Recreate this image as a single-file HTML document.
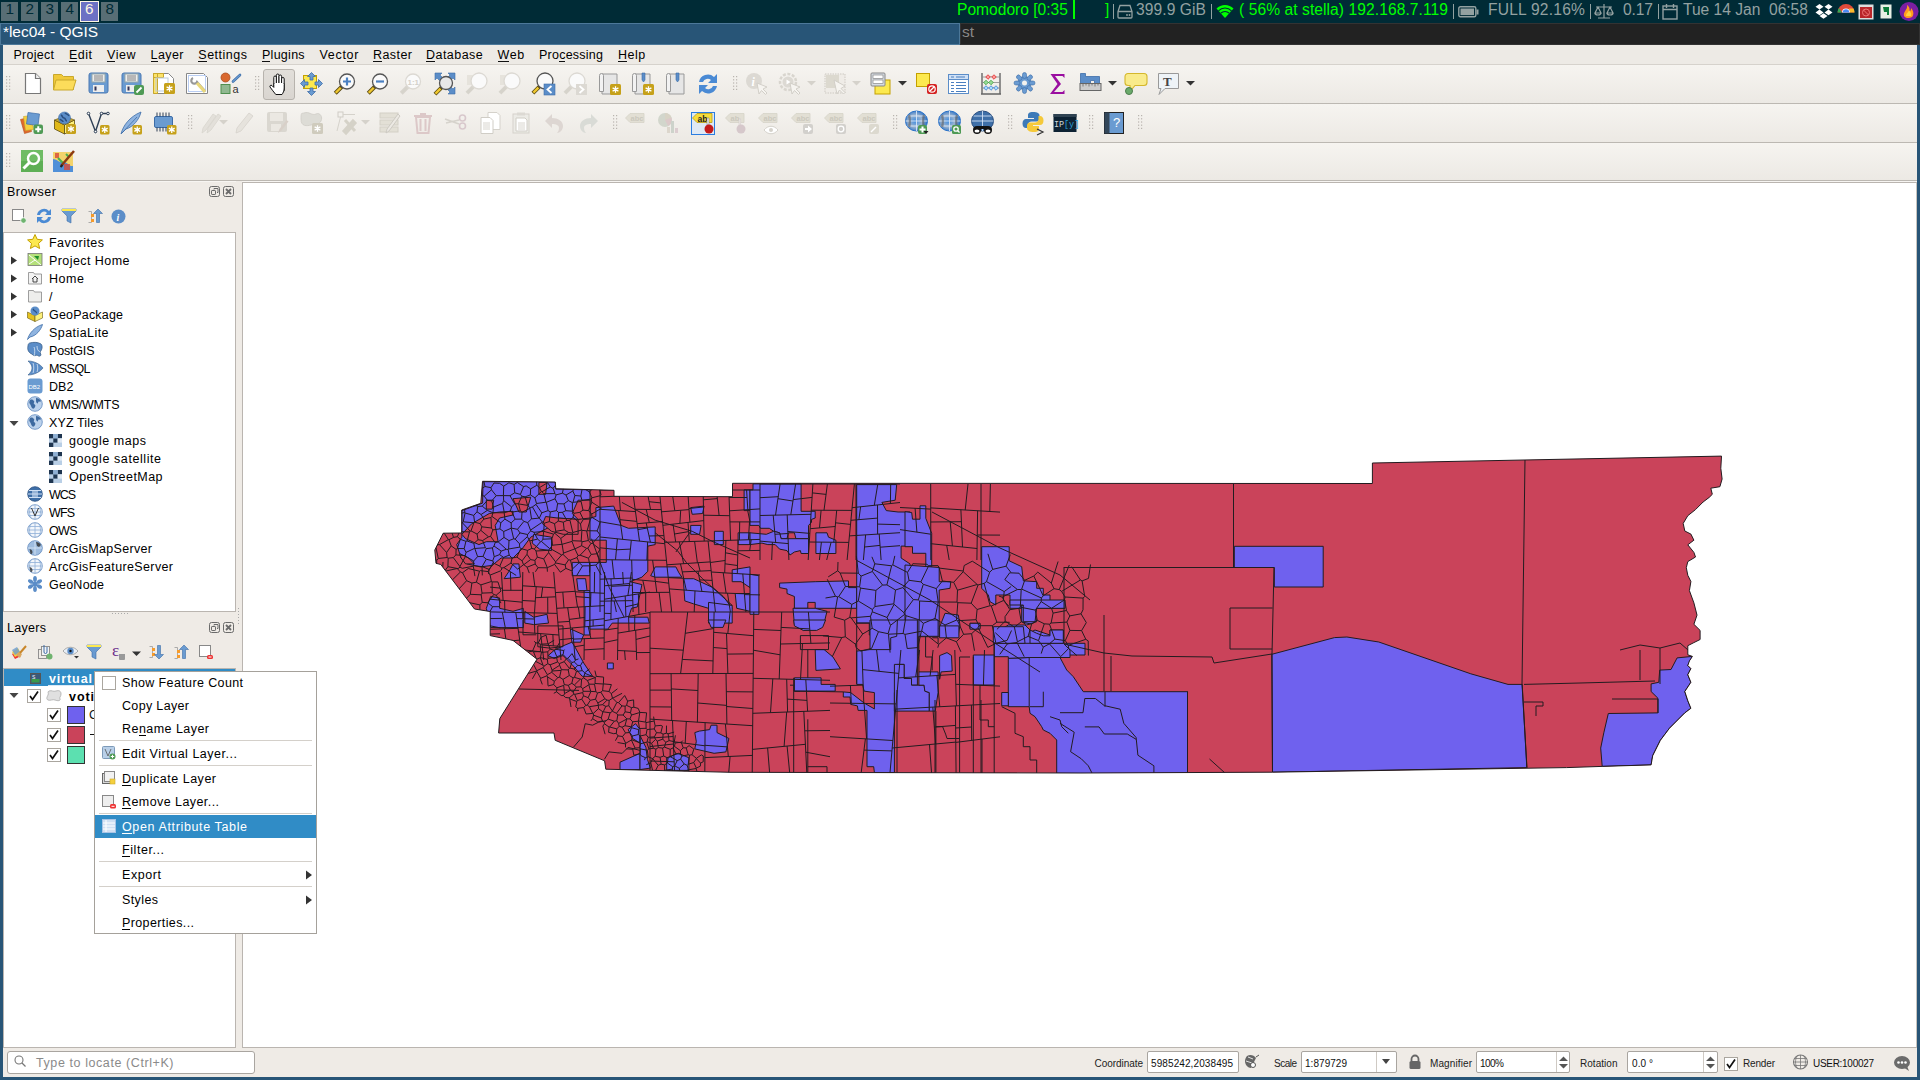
<!DOCTYPE html>
<html><head><meta charset="utf-8"><title>QGIS</title>
<style>
html,body{margin:0;padding:0;width:1920px;height:1080px;overflow:hidden;background:#efebe6}
body{position:relative;font-family:"Liberation Sans",sans-serif}
.r{position:absolute}
.t{position:absolute;white-space:pre;line-height:1}
.s{position:absolute;overflow:visible}
</style></head><body>
<div class="r" style="left:0px;top:45px;width:1920px;height:1035px;background:#285577;"></div>
<div class="r" style="left:3px;top:45px;width:1914px;height:1032px;background:#efebe6;"></div>
<div class="r" style="left:0px;top:0px;width:1920px;height:23px;background:#002b36;"></div>
<div class="r" style="left:1px;top:2px;width:17px;height:19px;background:#586e75;"></div>
<div class="t" style="left:5.60px;top:1.45px;font-size:15.30px;color:#002b36;">1</div>
<div class="r" style="left:21px;top:2px;width:17px;height:19px;background:#586e75;"></div>
<div class="t" style="left:25.60px;top:1.45px;font-size:15.30px;color:#002b36;">2</div>
<div class="r" style="left:41px;top:2px;width:17px;height:19px;background:#586e75;"></div>
<div class="t" style="left:45.60px;top:1.45px;font-size:15.30px;color:#002b36;">3</div>
<div class="r" style="left:61px;top:2px;width:17px;height:19px;background:#586e75;"></div>
<div class="t" style="left:65.60px;top:1.45px;font-size:15.30px;color:#002b36;">4</div>
<div class="r" style="left:101px;top:2px;width:17px;height:19px;background:#586e75;"></div>
<div class="t" style="left:105.60px;top:1.45px;font-size:15.30px;color:#002b36;">8</div>
<div class="r" style="left:80px;top:1px;width:19px;height:21px;background:#fdf6e3;"></div>
<div class="r" style="left:81px;top:2px;width:17px;height:19px;background:#6c71c4;"></div>
<div class="t" style="left:85.00px;top:1.45px;font-size:15.30px;color:#fdf6e3;">6</div>
<div class="t" style="left:957.00px;top:2.39px;font-size:15.60px;color:#00ff00;">Pomodoro [0:35</div>
<div class="r" style="left:1073px;top:0px;width:2px;height:19px;background:#00ff00;"></div>
<div class="t" style="left:1105.00px;top:2.39px;font-size:15.60px;color:#00ff00;">]</div>
<div class="r" style="left:1113px;top:4px;width:1px;height:15px;background:#93a1a1;"></div>
<div class="t" style="left:1136.00px;top:2.39px;font-size:15.60px;color:#93a1a1;letter-spacing:0.078px;">399.9 GiB</div>
<div class="r" style="left:1211px;top:4px;width:1px;height:15px;background:#93a1a1;"></div>
<div class="t" style="left:1239.00px;top:2.39px;font-size:15.60px;color:#00ff00;letter-spacing:0.070px;">( 56% at stella) 192.168.7.119</div>
<div class="r" style="left:1453px;top:4px;width:1px;height:15px;background:#93a1a1;"></div>
<div class="t" style="left:1488.00px;top:2.39px;font-size:15.60px;color:#93a1a1;letter-spacing:0.219px;">FULL 92.16%</div>
<div class="r" style="left:1590px;top:4px;width:1px;height:15px;background:#93a1a1;"></div>
<div class="t" style="left:1623.00px;top:2.39px;font-size:15.60px;color:#93a1a1;letter-spacing:-0.120px;">0.17</div>
<div class="r" style="left:1658px;top:4px;width:1px;height:15px;background:#93a1a1;"></div>
<div class="t" style="left:1683.00px;top:2.39px;font-size:15.60px;color:#93a1a1;letter-spacing:-0.011px;">Tue 14 Jan  06:58</div>
<svg class="s" style="left:1117px;top:4px" width="16" height="15" viewBox="0 0 16 15"><path d="M3 1.5h10l2 6v5.5a1 1 0 0 1-1 1H2a1 1 0 0 1-1-1V7.5z M1 7.5h14" fill="none" stroke="#93a1a1" stroke-width="1.3"/><circle cx="10" cy="11" r=".9" fill="#93a1a1"/><circle cx="12.5" cy="11" r=".9" fill="#93a1a1"/></svg>
<svg class="s" style="left:1216px;top:3px" width="18" height="16" viewBox="0 0 18 16"><path d="M9 15L0.5 5.5a12 12 0 0 1 17 0z" fill="#00ff00"/><path d="M2.5 7.8a9 9 0 0 1 13 0M4.8 10.2a6 6 0 0 1 8.4 0" stroke="#002b36" stroke-width="1.1" fill="none"/></svg>
<svg class="s" style="left:1458px;top:6px" width="21" height="12" viewBox="0 0 21 12"><rect x="0.8" y="0.8" width="17" height="10" rx="1.5" fill="none" stroke="#93a1a1" stroke-width="1.4"/><rect x="2.5" y="2.5" width="13.5" height="6.6" fill="#93a1a1"/><rect x="18.5" y="3.5" width="2" height="5" fill="#93a1a1"/></svg>
<svg class="s" style="left:1594px;top:3px" width="20" height="17" viewBox="0 0 20 17"><path d="M10 1v14M4 15h12M2 4h16M4 4l-3 6h6zM16 4l-3 6h6z M1 10a3 2 0 0 0 6 0M13 10a3 2 0 0 0 6 0" fill="none" stroke="#93a1a1" stroke-width="1.2"/></svg>
<svg class="s" style="left:1662px;top:3px" width="16" height="17" viewBox="0 0 16 17"><rect x="1" y="3" width="14" height="13" fill="none" stroke="#93a1a1" stroke-width="1.4"/><path d="M1 6.5h14M4.5 1v4M11.5 1v4" stroke="#93a1a1" stroke-width="1.4"/></svg>
<svg class="s" style="left:1815px;top:3px" width="18" height="17" viewBox="0 0 18 17"><path d="M4.5 1L0.5 3.8l4 2.8 4-2.8zM13.5 1l-4 2.8 4 2.8 4-2.8zM0.5 9.4l4 2.8 4-2.8-4-2.8zM17.5 9.4l-4 2.8-4-2.8 4-2.8zM4.5 13l4 2.8 4-2.8-4-2.8z" fill="#fff"/></svg>
<svg class="s" style="left:1837px;top:3px" width="18" height="10" viewBox="0 0 18 10"><path d="M0.5 9.5a8.5 8.5 0 0 1 17 0z" fill="#e04a3a"/><path d="M0.5 9.5a8.5 8.5 0 0 1 1.5-4.5l3 4.5z" fill="#34a853"/><path d="M17.5 9.5a8.5 8.5 0 0 0-1-4l-4.5 0 1 4z" fill="#f9bb2d"/><path d="M5 9.5a4 4 0 0 1 8 0z" fill="#fff"/><path d="M5.8 9.5a3.2 3.2 0 0 1 6.4 0z" fill="#4a8af4"/></svg>
<svg class="s" style="left:1858px;top:4px" width="16" height="16" viewBox="0 0 16 16"><rect x="0.5" y="0.5" width="15" height="15" fill="#ddd"/><rect x="2" y="3" width="12" height="11" fill="#b9262a"/><circle cx="8" cy="8.5" r="3.5" fill="none" stroke="#e77" stroke-width="1"/><path d="M5.5 6l5 5" stroke="#e77"/></svg>
<svg class="s" style="left:1880px;top:4px" width="12" height="15" viewBox="0 0 12 15"><rect x="0.5" y="0.5" width="11" height="14" fill="#e7efe4"/><path d="M3 3h6v8h-2v-3h-3z" fill="#0b7c3a"/></svg>
<svg class="s" style="left:1899px;top:1px" width="20" height="21" viewBox="0 0 20 21"><circle cx="10" cy="10.5" r="9.5" fill="#7a1fa2"/><path d="M5 15c-1-5 4-6 3-11 3 2 3 5 2 7 2-1 2-3 2-4 3 3 3 7 1 9-3 2-7 1-8-1z" fill="#ff9a1f"/><path d="M7 15c0-3 3-4 3-6 1 2 3 3 2 6z" fill="#ffd23a"/></svg>
<div class="r" style="left:0px;top:23px;width:960px;height:22px;background:#4c7899;"></div>
<div class="r" style="left:1px;top:24px;width:958px;height:20px;background:#285577;"></div>
<div class="r" style="left:960px;top:23px;width:960px;height:22px;background:#333333;"></div>
<div class="r" style="left:961px;top:24px;width:958px;height:20px;background:#222222;"></div>
<div class="t" style="left:3.00px;top:24.38px;font-size:15.50px;color:#ffffff;letter-spacing:-0.051px;">*lec04 - QGIS</div>
<div class="t" style="left:962.00px;top:24.38px;font-size:15.50px;color:#888888;letter-spacing:-0.056px;">st</div>
<div class="r" style="left:3px;top:45px;width:1914px;height:19px;background:#edeae5;"></div>
<div class="r" style="left:3px;top:64px;width:1914px;height:1px;background:#d6d2cc;"></div>
<div class="t" style="left:13.50px;top:49.42px;font-size:12.50px;color:#000;letter-spacing:0.266px;">Project</div>
<div class="r" style="left:33.8px;top:61px;width:2.8px;height:1px;background:#111;"></div>
<div class="t" style="left:69.00px;top:49.42px;font-size:12.50px;color:#000;letter-spacing:0.487px;">Edit</div>
<div class="r" style="left:69.0px;top:61px;width:8.3px;height:1px;background:#111;"></div>
<div class="t" style="left:107.00px;top:49.42px;font-size:12.50px;color:#000;letter-spacing:0.578px;">View</div>
<div class="r" style="left:107.0px;top:61px;width:8.3px;height:1px;background:#111;"></div>
<div class="t" style="left:150.50px;top:49.42px;font-size:12.50px;color:#000;letter-spacing:0.434px;">Layer</div>
<div class="r" style="left:150.5px;top:61px;width:7.0px;height:1px;background:#111;"></div>
<div class="t" style="left:198.30px;top:49.42px;font-size:12.50px;color:#000;letter-spacing:0.505px;">Settings</div>
<div class="r" style="left:198.3px;top:61px;width:8.3px;height:1px;background:#111;"></div>
<div class="t" style="left:262.00px;top:49.42px;font-size:12.50px;color:#000;letter-spacing:0.267px;">Plugins</div>
<div class="r" style="left:262.0px;top:61px;width:8.3px;height:1px;background:#111;"></div>
<div class="t" style="left:319.50px;top:49.42px;font-size:12.50px;color:#000;letter-spacing:0.693px;">Vector</div>
<div class="r" style="left:346.6px;top:61px;width:7.0px;height:1px;background:#111;"></div>
<div class="t" style="left:373.00px;top:49.42px;font-size:12.50px;color:#000;letter-spacing:0.437px;">Raster</div>
<div class="r" style="left:373.0px;top:61px;width:9.0px;height:1px;background:#111;"></div>
<div class="t" style="left:426.00px;top:49.42px;font-size:12.50px;color:#000;letter-spacing:0.456px;">Database</div>
<div class="r" style="left:426.0px;top:61px;width:9.0px;height:1px;background:#111;"></div>
<div class="t" style="left:497.60px;top:49.42px;font-size:12.50px;color:#000;letter-spacing:0.563px;">Web</div>
<div class="r" style="left:497.6px;top:61px;width:11.8px;height:1px;background:#111;"></div>
<div class="t" style="left:539.00px;top:49.42px;font-size:12.50px;color:#000;letter-spacing:0.241px;">Processing</div>
<div class="r" style="left:559.2px;top:61px;width:6.2px;height:1px;background:#111;"></div>
<div class="t" style="left:618.00px;top:49.42px;font-size:12.50px;color:#000;letter-spacing:0.531px;">Help</div>
<div class="r" style="left:618.0px;top:61px;width:9.0px;height:1px;background:#111;"></div>
<div class="r" style="left:3px;top:65px;width:1914px;height:38px;background:linear-gradient(#f6f4f0,#ece9e4);"></div>
<div class="r" style="left:3px;top:103px;width:1914px;height:1px;background:#bcb8b2;"></div>
<div class="r" style="left:3px;top:104px;width:1914px;height:38px;background:linear-gradient(#f6f4f0,#ece9e4);"></div>
<div class="r" style="left:3px;top:142px;width:1914px;height:1px;background:#bcb8b2;"></div>
<div class="r" style="left:3px;top:143px;width:1914px;height:37px;background:linear-gradient(#f6f4f0,#ece9e4);"></div>
<div class="r" style="left:3px;top:180px;width:1914px;height:1px;background:#bcb8b2;"></div>
<div class="r" style="left:3px;top:181px;width:1914px;height:1px;background:#f7f5f2;"></div>
<svg class="s" style="left:6px;top:76px" width="5" height="17" viewBox="0 0 5 17"><rect x="0" y="0.0" width="1.2" height="1.2" fill="#b8b4ae"/><rect x="3" y="0.0" width="1.2" height="1.2" fill="#b8b4ae"/><rect x="0" y="3.2" width="1.2" height="1.2" fill="#b8b4ae"/><rect x="3" y="3.2" width="1.2" height="1.2" fill="#b8b4ae"/><rect x="0" y="6.4" width="1.2" height="1.2" fill="#b8b4ae"/><rect x="3" y="6.4" width="1.2" height="1.2" fill="#b8b4ae"/><rect x="0" y="9.6" width="1.2" height="1.2" fill="#b8b4ae"/><rect x="3" y="9.6" width="1.2" height="1.2" fill="#b8b4ae"/><rect x="0" y="12.8" width="1.2" height="1.2" fill="#b8b4ae"/><rect x="3" y="12.8" width="1.2" height="1.2" fill="#b8b4ae"/></svg>
<svg class="s" style="left:255px;top:76px" width="5" height="17" viewBox="0 0 5 17"><rect x="0" y="0.0" width="1.2" height="1.2" fill="#b8b4ae"/><rect x="3" y="0.0" width="1.2" height="1.2" fill="#b8b4ae"/><rect x="0" y="3.2" width="1.2" height="1.2" fill="#b8b4ae"/><rect x="3" y="3.2" width="1.2" height="1.2" fill="#b8b4ae"/><rect x="0" y="6.4" width="1.2" height="1.2" fill="#b8b4ae"/><rect x="3" y="6.4" width="1.2" height="1.2" fill="#b8b4ae"/><rect x="0" y="9.6" width="1.2" height="1.2" fill="#b8b4ae"/><rect x="3" y="9.6" width="1.2" height="1.2" fill="#b8b4ae"/><rect x="0" y="12.8" width="1.2" height="1.2" fill="#b8b4ae"/><rect x="3" y="12.8" width="1.2" height="1.2" fill="#b8b4ae"/></svg>
<svg class="s" style="left:733px;top:76px" width="5" height="17" viewBox="0 0 5 17"><rect x="0" y="0.0" width="1.2" height="1.2" fill="#b8b4ae"/><rect x="3" y="0.0" width="1.2" height="1.2" fill="#b8b4ae"/><rect x="0" y="3.2" width="1.2" height="1.2" fill="#b8b4ae"/><rect x="3" y="3.2" width="1.2" height="1.2" fill="#b8b4ae"/><rect x="0" y="6.4" width="1.2" height="1.2" fill="#b8b4ae"/><rect x="3" y="6.4" width="1.2" height="1.2" fill="#b8b4ae"/><rect x="0" y="9.6" width="1.2" height="1.2" fill="#b8b4ae"/><rect x="3" y="9.6" width="1.2" height="1.2" fill="#b8b4ae"/><rect x="0" y="12.8" width="1.2" height="1.2" fill="#b8b4ae"/><rect x="3" y="12.8" width="1.2" height="1.2" fill="#b8b4ae"/></svg>
<svg class="s" style="left:6px;top:115px" width="5" height="17" viewBox="0 0 5 17"><rect x="0" y="0.0" width="1.2" height="1.2" fill="#b8b4ae"/><rect x="3" y="0.0" width="1.2" height="1.2" fill="#b8b4ae"/><rect x="0" y="3.2" width="1.2" height="1.2" fill="#b8b4ae"/><rect x="3" y="3.2" width="1.2" height="1.2" fill="#b8b4ae"/><rect x="0" y="6.4" width="1.2" height="1.2" fill="#b8b4ae"/><rect x="3" y="6.4" width="1.2" height="1.2" fill="#b8b4ae"/><rect x="0" y="9.6" width="1.2" height="1.2" fill="#b8b4ae"/><rect x="3" y="9.6" width="1.2" height="1.2" fill="#b8b4ae"/><rect x="0" y="12.8" width="1.2" height="1.2" fill="#b8b4ae"/><rect x="3" y="12.8" width="1.2" height="1.2" fill="#b8b4ae"/></svg>
<svg class="s" style="left:188px;top:115px" width="5" height="17" viewBox="0 0 5 17"><rect x="0" y="0.0" width="1.2" height="1.2" fill="#b8b4ae"/><rect x="3" y="0.0" width="1.2" height="1.2" fill="#b8b4ae"/><rect x="0" y="3.2" width="1.2" height="1.2" fill="#b8b4ae"/><rect x="3" y="3.2" width="1.2" height="1.2" fill="#b8b4ae"/><rect x="0" y="6.4" width="1.2" height="1.2" fill="#b8b4ae"/><rect x="3" y="6.4" width="1.2" height="1.2" fill="#b8b4ae"/><rect x="0" y="9.6" width="1.2" height="1.2" fill="#b8b4ae"/><rect x="3" y="9.6" width="1.2" height="1.2" fill="#b8b4ae"/><rect x="0" y="12.8" width="1.2" height="1.2" fill="#b8b4ae"/><rect x="3" y="12.8" width="1.2" height="1.2" fill="#b8b4ae"/></svg>
<svg class="s" style="left:612.5px;top:115px" width="5" height="17" viewBox="0 0 5 17"><rect x="0" y="0.0" width="1.2" height="1.2" fill="#b8b4ae"/><rect x="3" y="0.0" width="1.2" height="1.2" fill="#b8b4ae"/><rect x="0" y="3.2" width="1.2" height="1.2" fill="#b8b4ae"/><rect x="3" y="3.2" width="1.2" height="1.2" fill="#b8b4ae"/><rect x="0" y="6.4" width="1.2" height="1.2" fill="#b8b4ae"/><rect x="3" y="6.4" width="1.2" height="1.2" fill="#b8b4ae"/><rect x="0" y="9.6" width="1.2" height="1.2" fill="#b8b4ae"/><rect x="3" y="9.6" width="1.2" height="1.2" fill="#b8b4ae"/><rect x="0" y="12.8" width="1.2" height="1.2" fill="#b8b4ae"/><rect x="3" y="12.8" width="1.2" height="1.2" fill="#b8b4ae"/></svg>
<svg class="s" style="left:892.5px;top:115px" width="5" height="17" viewBox="0 0 5 17"><rect x="0" y="0.0" width="1.2" height="1.2" fill="#b8b4ae"/><rect x="3" y="0.0" width="1.2" height="1.2" fill="#b8b4ae"/><rect x="0" y="3.2" width="1.2" height="1.2" fill="#b8b4ae"/><rect x="3" y="3.2" width="1.2" height="1.2" fill="#b8b4ae"/><rect x="0" y="6.4" width="1.2" height="1.2" fill="#b8b4ae"/><rect x="3" y="6.4" width="1.2" height="1.2" fill="#b8b4ae"/><rect x="0" y="9.6" width="1.2" height="1.2" fill="#b8b4ae"/><rect x="3" y="9.6" width="1.2" height="1.2" fill="#b8b4ae"/><rect x="0" y="12.8" width="1.2" height="1.2" fill="#b8b4ae"/><rect x="3" y="12.8" width="1.2" height="1.2" fill="#b8b4ae"/></svg>
<svg class="s" style="left:1007.5px;top:115px" width="5" height="17" viewBox="0 0 5 17"><rect x="0" y="0.0" width="1.2" height="1.2" fill="#b8b4ae"/><rect x="3" y="0.0" width="1.2" height="1.2" fill="#b8b4ae"/><rect x="0" y="3.2" width="1.2" height="1.2" fill="#b8b4ae"/><rect x="3" y="3.2" width="1.2" height="1.2" fill="#b8b4ae"/><rect x="0" y="6.4" width="1.2" height="1.2" fill="#b8b4ae"/><rect x="3" y="6.4" width="1.2" height="1.2" fill="#b8b4ae"/><rect x="0" y="9.6" width="1.2" height="1.2" fill="#b8b4ae"/><rect x="3" y="9.6" width="1.2" height="1.2" fill="#b8b4ae"/><rect x="0" y="12.8" width="1.2" height="1.2" fill="#b8b4ae"/><rect x="3" y="12.8" width="1.2" height="1.2" fill="#b8b4ae"/></svg>
<svg class="s" style="left:1089px;top:115px" width="5" height="17" viewBox="0 0 5 17"><rect x="0" y="0.0" width="1.2" height="1.2" fill="#b8b4ae"/><rect x="3" y="0.0" width="1.2" height="1.2" fill="#b8b4ae"/><rect x="0" y="3.2" width="1.2" height="1.2" fill="#b8b4ae"/><rect x="3" y="3.2" width="1.2" height="1.2" fill="#b8b4ae"/><rect x="0" y="6.4" width="1.2" height="1.2" fill="#b8b4ae"/><rect x="3" y="6.4" width="1.2" height="1.2" fill="#b8b4ae"/><rect x="0" y="9.6" width="1.2" height="1.2" fill="#b8b4ae"/><rect x="3" y="9.6" width="1.2" height="1.2" fill="#b8b4ae"/><rect x="0" y="12.8" width="1.2" height="1.2" fill="#b8b4ae"/><rect x="3" y="12.8" width="1.2" height="1.2" fill="#b8b4ae"/></svg>
<svg class="s" style="left:1138px;top:115px" width="5" height="17" viewBox="0 0 5 17"><rect x="0" y="0.0" width="1.2" height="1.2" fill="#b8b4ae"/><rect x="3" y="0.0" width="1.2" height="1.2" fill="#b8b4ae"/><rect x="0" y="3.2" width="1.2" height="1.2" fill="#b8b4ae"/><rect x="3" y="3.2" width="1.2" height="1.2" fill="#b8b4ae"/><rect x="0" y="6.4" width="1.2" height="1.2" fill="#b8b4ae"/><rect x="3" y="6.4" width="1.2" height="1.2" fill="#b8b4ae"/><rect x="0" y="9.6" width="1.2" height="1.2" fill="#b8b4ae"/><rect x="3" y="9.6" width="1.2" height="1.2" fill="#b8b4ae"/><rect x="0" y="12.8" width="1.2" height="1.2" fill="#b8b4ae"/><rect x="3" y="12.8" width="1.2" height="1.2" fill="#b8b4ae"/></svg>
<svg class="s" style="left:6px;top:153px" width="5" height="17" viewBox="0 0 5 17"><rect x="0" y="0.0" width="1.2" height="1.2" fill="#b8b4ae"/><rect x="3" y="0.0" width="1.2" height="1.2" fill="#b8b4ae"/><rect x="0" y="3.2" width="1.2" height="1.2" fill="#b8b4ae"/><rect x="3" y="3.2" width="1.2" height="1.2" fill="#b8b4ae"/><rect x="0" y="6.4" width="1.2" height="1.2" fill="#b8b4ae"/><rect x="3" y="6.4" width="1.2" height="1.2" fill="#b8b4ae"/><rect x="0" y="9.6" width="1.2" height="1.2" fill="#b8b4ae"/><rect x="3" y="9.6" width="1.2" height="1.2" fill="#b8b4ae"/><rect x="0" y="12.8" width="1.2" height="1.2" fill="#b8b4ae"/><rect x="3" y="12.8" width="1.2" height="1.2" fill="#b8b4ae"/></svg>
<div class="r" style="left:263px;top:69px;width:32px;height:31px;border:1px solid #b7b3ad;border-radius:3px;background:linear-gradient(#e2dfda,#d9d5d0);box-sizing:border-box"></div>
<div class="r" style="left:691px;top:112px;width:24px;height:23px;border:1.3px solid #2a7de0;background:#dfe8f3;box-sizing:border-box"></div>
<svg class="s" style="left:23.5px;top:72.0px" width="24" height="24" viewBox="0 0 24 24"><path d="M1.5 1.5h10l5 5v15h-15z" fill="#fff" stroke="#777" stroke-width="1.2"/><path d="M11.5 1.5v5h5" fill="#eee" stroke="#777" stroke-width="1.2"/></svg>
<svg class="s" style="left:53.0px;top:72.0px" width="24" height="24" viewBox="0 0 24 24"><path d="M0.5 2.5h8l2 2h10v13h-20z" fill="#f0c93a" stroke="#c9a82c"/><path d="M3 8h20l-3 10H0.5z" fill="#fcdc5a" stroke="#c9a82c"/></svg>
<svg class="s" style="left:87.5px;top:72.0px" width="24" height="24" viewBox="0 0 24 24"><rect x="1" y="1" width="19" height="20" rx="2" fill="#6a9bd1" stroke="#4a79b3"/><rect x="4" y="2" width="13" height="8" fill="#eee" stroke="#9aa"/><path d="M6 4h9M6 6h9M6 8h9" stroke="#666" stroke-width=".8"/><rect x="5" y="13" width="11" height="7" fill="#eee"/><rect x="6.5" y="14.5" width="2" height="4" fill="#335"/></svg>
<svg class="s" style="left:121.0px;top:72.0px" width="24" height="24" viewBox="0 0 24 24"><rect x="1" y="1" width="19" height="20" rx="2" fill="#6a9bd1" stroke="#4a79b3"/><rect x="4" y="2" width="13" height="8" fill="#eee" stroke="#9aa"/><path d="M6 4h9M6 6h9M6 8h9" stroke="#666" stroke-width=".8"/><rect x="5" y="13" width="11" height="7" fill="#eee"/><rect x="6.5" y="14.5" width="2" height="4" fill="#335"/><rect x="13" y="13" width="10" height="10" rx="2" fill="#4f9a55"/><path transform="rotate(0)" d="M18.0 15.0v0M15.0 18.0h0" stroke="#fff" stroke-width="2"/><path d="M15.5 20.5l5-5" stroke="#fff" stroke-width="1.8"/></svg>
<svg class="s" style="left:152.0px;top:72.0px" width="24" height="24" viewBox="0 0 24 24"><path d="M1.5 1.5h15l5 5v15h-20z" fill="#fff" stroke="#888"/><path d="M1.5 1.5h4v20h-4zM1.5 1.5h10v4h-10z" fill="#fce36a" stroke="#c9a82c"/><rect x="4" y="6" width="12" height="13" fill="none" stroke="#bcd" /><rect x="12" y="11" width="11" height="11" rx="1.5" fill="#c6a11a"/><g stroke="#fff" stroke-width="1.3" transform="translate(17.5 16.5)"><path d="M0 -3.3V3.3M-2.9 -1.65L2.9 1.65M-2.9 1.65L2.9 -1.65"/></g></svg>
<svg class="s" style="left:185.0px;top:72.0px" width="24" height="24" viewBox="0 0 24 24"><path d="M1.5 1.5h17l4 4v16h-21z" fill="#fff" stroke="#888"/><rect x="3.5" y="3.5" width="17" height="16" fill="none" stroke="#b9cdf2"/><path d="M8 6a3 3 0 1 0 4 4l8 9" fill="none" stroke="#999" stroke-width="2.2"/><path d="M12 11l8 9" stroke="#e9d77a" stroke-width="3.2"/></svg>
<svg class="s" style="left:218.5px;top:72.0px" width="24" height="24" viewBox="0 0 24 24"><circle cx="6.5" cy="5.5" r="4.5" fill="#d9682e" stroke="#a94d1f" stroke-width=".8"/><path d="M14 9.5L21 3" stroke="#3d6da8" stroke-width="2.6" stroke-linecap="round"/><path d="M14 9.5L21 3" stroke="#6a9bd1" stroke-width="1.2" stroke-linecap="round"/><rect x="2" y="12.5" width="9" height="9" fill="#90b890" stroke="#4f8f4f"/><text x="13.5" y="21" font-family="Liberation Sans" font-size="11" fill="#333">a</text></svg>
<svg class="s" style="left:267.0px;top:72.0px" width="24" height="24" viewBox="0 0 24 24"><rect x="6.8" y="4" width="2.6" height="14" rx="1.3" fill="#fff" stroke="#111" stroke-width="1"/><rect x="9.4" y="2" width="2.6" height="14" rx="1.3" fill="#fff" stroke="#111" stroke-width="1"/><rect x="12" y="3" width="2.6" height="14" rx="1.3" fill="#fff" stroke="#111" stroke-width="1"/><rect x="14.6" y="5.5" width="2.6" height="14" rx="1.3" fill="#fff" stroke="#111" stroke-width="1"/><path d="M6.8 11.5H17.2V16C17.2 19 16 21 15 22.5H8.8C7.2 20.2 4.5 17.5 3 15C2.4 13.8 3.8 12.6 5 13.6L6.8 15.4Z" fill="#fff" stroke="#111" stroke-width="1"/><path d="M7.5 11.8H16.5" stroke="#fff" stroke-width="1.6"/></svg>
<svg class="s" style="left:300.0px;top:72.0px" width="24" height="24" viewBox="0 0 24 24"><rect x="3.5" y="3.5" width="13" height="13" fill="#fce94f" stroke="#c4a000"/><path d="M11.5 0.5l4 4h-2.5v3.5h-3V4.5H7.5zM11.5 23.5l4-4h-2.5V16h-3v3.5H7.5zM0.5 11.5l4 4V13H8v-3H4.5V7.5zM22.5 11.5l-4 4V13H15v-3h3.5V7.5z" fill="#6a9bd1" stroke="#3d6da8" stroke-width=".8"/></svg>
<svg class="s" style="left:333.0px;top:72.0px" width="24" height="24" viewBox="0 0 24 24"><path d="M8.75 14.75 L2.25 21.25" stroke="#5a4a10" stroke-width="4" stroke-linecap="butt"/><path d="M7.75 15.75 L2.75 20.75" stroke="#f0c830" stroke-width="2.4" stroke-linecap="butt"/><path d="M14 9.5 L14 9.5" stroke="#444" stroke-width="4.2" stroke-linecap="round" opacity=".0"/><circle cx="14" cy="9.5" r="7.5" fill="#fafafa" stroke="#555" stroke-width="1.3"/><path d="M14 5.5v8M10 9.5h8" stroke="#4a80c2" stroke-width="2.2"/></svg>
<svg class="s" style="left:366.0px;top:72.0px" width="24" height="24" viewBox="0 0 24 24"><path d="M8.75 14.75 L2.25 21.25" stroke="#5a4a10" stroke-width="4" stroke-linecap="butt"/><path d="M7.75 15.75 L2.75 20.75" stroke="#f0c830" stroke-width="2.4" stroke-linecap="butt"/><path d="M14 9.5 L14 9.5" stroke="#444" stroke-width="4.2" stroke-linecap="round" opacity=".0"/><circle cx="14" cy="9.5" r="7.5" fill="#fafafa" stroke="#555" stroke-width="1.3"/><path d="M10 9.5h8" stroke="#4a80c2" stroke-width="2.2"/></svg>
<svg class="s" style="left:399.0px;top:72.0px" width="24" height="24" viewBox="0 0 24 24"><path d="M8.75 14.75 L2.25 21.25" stroke="#d8d5ce" stroke-width="4" stroke-linecap="butt"/><path d="M7.75 15.75 L2.75 20.75" stroke="#d6d3cb" stroke-width="2.4" stroke-linecap="butt"/><path d="M14 9.5 L14 9.5" stroke="#d0cdc6" stroke-width="4.2" stroke-linecap="round" opacity=".0"/><circle cx="14" cy="9.5" r="7.5" fill="#fafafa" stroke="#dcd9d3" stroke-width="1.3"/><text x="8.5" y="13" font-family="Liberation Sans" font-weight="bold" font-size="8" fill="#d3d0c9">1:1</text></svg>
<svg class="s" style="left:433.0px;top:72.0px" width="24" height="24" viewBox="0 0 24 24"><path d="M2 1h7l-2 2 3 3-3 3-3-3-2 2zM22 1h-7l2 2-3 3 3 3 3-3 2 2zM22 22h-7l2-2-3-3 3-3 3 3 2-2z" fill="#5b8dc8" stroke="#3d6da8" stroke-width=".6"/><path d="M8.45 15.55 L1.9499999999999993 22.05" stroke="#5a4a10" stroke-width="4" stroke-linecap="butt"/><path d="M7.449999999999999 16.55 L2.4499999999999993 21.55" stroke="#f0c830" stroke-width="2.4" stroke-linecap="butt"/><path d="M13 11 L13 11" stroke="#444" stroke-width="4.2" stroke-linecap="round" opacity=".0"/><circle cx="13" cy="11" r="6.5" fill="#e8e8e8" stroke="#555" stroke-width="1.3"/></svg>
<svg class="s" style="left:465.0px;top:72.0px" width="24" height="24" viewBox="0 0 24 24"><rect x="2" y="3" width="9" height="10" fill="#e6e3dc"/><path d="M8.4 14.6 L1.9000000000000004 21.1" stroke="#d8d5ce" stroke-width="4" stroke-linecap="butt"/><path d="M7.4 15.6 L2.4000000000000004 20.6" stroke="#d6d3cb" stroke-width="2.4" stroke-linecap="butt"/><path d="M14 9 L14 9" stroke="#d0cdc6" stroke-width="4.2" stroke-linecap="round" opacity=".0"/><circle cx="14" cy="9" r="8" fill="#fafafa" stroke="#dcd9d3" stroke-width="1.3"/></svg>
<svg class="s" style="left:498.0px;top:72.0px" width="24" height="24" viewBox="0 0 24 24"><rect x="2" y="3" width="9" height="10" fill="#e6e3dc"/><path d="M8.4 14.6 L1.9000000000000004 21.1" stroke="#d8d5ce" stroke-width="4" stroke-linecap="butt"/><path d="M7.4 15.6 L2.4000000000000004 20.6" stroke="#d6d3cb" stroke-width="2.4" stroke-linecap="butt"/><path d="M14 9 L14 9" stroke="#d0cdc6" stroke-width="4.2" stroke-linecap="round" opacity=".0"/><circle cx="14" cy="9" r="8" fill="#fafafa" stroke="#dcd9d3" stroke-width="1.3"/></svg>
<svg class="s" style="left:532.0px;top:72.0px" width="24" height="24" viewBox="0 0 24 24"><path d="M7.4 14.6 L0.9000000000000004 21.1" stroke="#5a4a10" stroke-width="4" stroke-linecap="butt"/><path d="M6.4 15.6 L1.4000000000000004 20.6" stroke="#f0c830" stroke-width="2.4" stroke-linecap="butt"/><path d="M13 9 L13 9" stroke="#444" stroke-width="4.2" stroke-linecap="round" opacity=".0"/><circle cx="13" cy="9" r="8" fill="#fafafa" stroke="#555" stroke-width="1.3"/><rect x="12" y="12" width="11" height="11" fill="#5b8dc8" stroke="#3d6da8" stroke-width=".6"/><path d="M19.5 14l-4 3.5 4 3.5" fill="none" stroke="#fff" stroke-width="1.8"/></svg>
<svg class="s" style="left:564.0px;top:72.0px" width="24" height="24" viewBox="0 0 24 24"><path d="M7.4 14.6 L0.9000000000000004 21.1" stroke="#d8d5ce" stroke-width="4" stroke-linecap="butt"/><path d="M6.4 15.6 L1.4000000000000004 20.6" stroke="#d6d3cb" stroke-width="2.4" stroke-linecap="butt"/><path d="M13 9 L13 9" stroke="#d0cdc6" stroke-width="4.2" stroke-linecap="round" opacity=".0"/><circle cx="13" cy="9" r="8" fill="#fafafa" stroke="#dcd9d3" stroke-width="1.3"/><rect x="12" y="12" width="11" height="11" fill="#dcd9d3"/><path d="M15.5 14l4 3.5-4 3.5" fill="none" stroke="#fff" stroke-width="1.8"/></svg>
<svg class="s" style="left:598.0px;top:72.0px" width="24" height="24" viewBox="0 0 24 24"><path d="M4 2h15v20H4z" fill="#e6e6e6" stroke="#999" stroke-width="1"/><path d="M1.5 3.5a2 2 0 0 1 4 0v16h-4z" fill="#f2f2f2" stroke="#999" stroke-width="1"/><rect x="12" y="12" width="11" height="11" rx="1.5" fill="#c6a11a"/><g stroke="#fff" stroke-width="1.3" transform="translate(17.5 17.5)"><path d="M0 -3.3V3.3M-2.9 -1.65L2.9 1.65M-2.9 1.65L2.9 -1.65"/></g></svg>
<svg class="s" style="left:631.0px;top:72.0px" width="24" height="24" viewBox="0 0 24 24"><path d="M4 2h15v20H4z" fill="#e6e6e6" stroke="#999" stroke-width="1"/><path d="M1.5 3.5a2 2 0 0 1 4 0v16h-4z" fill="#f2f2f2" stroke="#999" stroke-width="1"/><path d="M11 1h3v7l-1.5 2-1.5-2z" fill="#5b8dc8" stroke="#3d6da8" stroke-width=".6"/><rect x="12" y="12" width="11" height="11" rx="1.5" fill="#c6a11a"/><g stroke="#fff" stroke-width="1.3" transform="translate(17.5 17.5)"><path d="M0 -3.3V3.3M-2.9 -1.65L2.9 1.65M-2.9 1.65L2.9 -1.65"/></g></svg>
<svg class="s" style="left:665.0px;top:72.0px" width="24" height="24" viewBox="0 0 24 24"><path d="M4 2h15v20H4z" fill="#e6e6e6" stroke="#999" stroke-width="1"/><path d="M1.5 3.5a2 2 0 0 1 4 0v16h-4z" fill="#f2f2f2" stroke="#999" stroke-width="1"/><path d="M11 1h3v7l-1.5 2-1.5-2z" fill="#5b8dc8" stroke="#3d6da8" stroke-width=".6"/></svg>
<svg class="s" style="left:696.0px;top:72.0px" width="24" height="24" viewBox="0 0 24 24"><path d="M3 10a9 9 0 0 1 15-5l3-3v9h-9l3-3a5 5 0 0 0-8 2z" fill="#4a8ad4"/><path d="M21 14a9 9 0 0 1-15 5l-3 3v-9h9l-3 3a5 5 0 0 0 8-2z" fill="#4a8ad4"/></svg>
<svg class="s" style="left:745.0px;top:72.0px" width="24" height="24" viewBox="0 0 24 24"><circle cx="9" cy="9" r="8" fill="#dcd9d3"/><text x="6.5" y="14" font-family="Liberation Serif" font-style="italic" font-weight="bold" font-size="12" fill="#fff">i</text><path d="M12 11l2 11 2.5-3.5 4 4 1.5-1.5-4-4L22 15z" fill="#f6f4f0" stroke="#d2cfc8"/></svg>
<svg class="s" style="left:778.0px;top:72.0px" width="24" height="24" viewBox="0 0 24 24"><circle cx="10" cy="10" r="8" fill="none" stroke="#d8d5ce" stroke-width="2.5" stroke-dasharray="3 1.6"/><circle cx="10" cy="10" r="5.5" fill="#dcd9d3"/><path d="M8.5 7.5v5l4-2.5z" fill="#fff"/><path d="M12 11l2 11 2.5-3.5 4 4 1.5-1.5-4-4L22 15z" fill="#f6f4f0" stroke="#d2cfc8"/></svg>
<svg class="s" style="left:806.0px;top:72.0px" width="24" height="24" viewBox="0 0 24 24"><path d="M1 9h9l-4.5 4.5z" fill="#d5d2cb"/></svg>
<svg class="s" style="left:824.0px;top:72.0px" width="24" height="24" viewBox="0 0 24 24"><rect x="1" y="2" width="20" height="19" fill="#efece7" stroke="#cdc9c2" stroke-dasharray="1.5 1"/><rect x="2" y="3" width="13" height="13" fill="#dcd9cf"/><path d="M10 8l3 14 2.5-4 4 4 1.5-1.5-4-4L21 14z" fill="#f6f4f0" stroke="#d2cfc8"/></svg>
<svg class="s" style="left:851.0px;top:72.0px" width="24" height="24" viewBox="0 0 24 24"><path d="M1 9h9l-4.5 4.5z" fill="#d5d2cb"/></svg>
<svg class="s" style="left:870.0px;top:72.0px" width="24" height="24" viewBox="0 0 24 24"><rect x="5" y="8" width="15" height="14" fill="#fce94f" stroke="#c4a000"/><rect x="1" y="1" width="14" height="13" rx="1" fill="#d7dde4" stroke="#888"/><rect x="3" y="3" width="10" height="3.5" fill="#fff" stroke="#777" stroke-width=".6"/><rect x="3" y="8" width="10" height="3.5" fill="#fff" stroke="#777" stroke-width=".6"/></svg>
<svg class="s" style="left:896.5px;top:72.0px" width="24" height="24" viewBox="0 0 24 24"><path d="M1 9h9l-4.5 4.5z" fill="#333"/></svg>
<svg class="s" style="left:914.5px;top:72.0px" width="24" height="24" viewBox="0 0 24 24"><rect x="1.5" y="1.5" width="13" height="13" fill="#fce94f" stroke="#c4a000"/><rect x="12" y="12" width="10" height="10" rx="2" fill="#d42020"/><circle cx="17" cy="17" r="3.2" fill="none" stroke="#fff" stroke-width="1.2"/><path d="M15 19l4-4" stroke="#fff" stroke-width="1.2"/></svg>
<svg class="s" style="left:947.0px;top:72.0px" width="24" height="24" viewBox="0 0 24 24"><rect x="1.5" y="2.5" width="20" height="19" fill="#fff" stroke="#5b8dc8"/><rect x="1.5" y="2.5" width="20" height="5" fill="#cfe0f5" stroke="#5b8dc8"/><path d="M4 5h3M9 5h9M4 10.5h3M9 10.5h10M4 13.5h3M9 13.5h10M4 16.5h3M9 16.5h10M4 19.5h3M9 19.5h10" stroke="#4a7fc0" stroke-width="1.2"/></svg>
<svg class="s" style="left:980.0px;top:72.0px" width="24" height="24" viewBox="0 0 24 24"><path d="M2 1v21M20 1v21M1 22h20" stroke="#666" stroke-width="1.4" fill="none"/><path d="M2 5h18M2 10.5h18M2 16h18" stroke="#888" stroke-width=".8"/><rect x="6.4" y="3.4" width="3.2" height="3.2" transform="rotate(45 8 5)" fill="#f99" stroke="#d22" stroke-width=".7"/><rect x="12.4" y="3.4" width="3.2" height="3.2" transform="rotate(45 14 5)" fill="#f99" stroke="#d22" stroke-width=".7"/><rect x="4.4" y="8.9" width="3.2" height="3.2" transform="rotate(45 6 10.5)" fill="#9d9" stroke="#393" stroke-width=".7"/><rect x="9.4" y="8.9" width="3.2" height="3.2" transform="rotate(45 11 10.5)" fill="#9d9" stroke="#393" stroke-width=".7"/><rect x="4.4" y="14.4" width="3.2" height="3.2" transform="rotate(45 6 16)" fill="#adf" stroke="#37c" stroke-width=".7"/><rect x="9.4" y="14.4" width="3.2" height="3.2" transform="rotate(45 11 16)" fill="#adf" stroke="#37c" stroke-width=".7"/><rect x="14.4" y="14.4" width="3.2" height="3.2" transform="rotate(45 16 16)" fill="#adf" stroke="#37c" stroke-width=".7"/></svg>
<svg class="s" style="left:1013.0px;top:72.0px" width="24" height="24" viewBox="0 0 24 24"><g transform="translate(11.5 11)"><circle r="6.5" fill="#6a9bd1" stroke="#3d6da8" stroke-width=".8"/><rect x="-2" y="-10.5" width="4" height="6" rx="2" fill="#6a9bd1" stroke="#3d6da8" stroke-width=".6" transform="rotate(0)"/><rect x="-2" y="-10.5" width="4" height="6" rx="2" fill="#6a9bd1" stroke="#3d6da8" stroke-width=".6" transform="rotate(45)"/><rect x="-2" y="-10.5" width="4" height="6" rx="2" fill="#6a9bd1" stroke="#3d6da8" stroke-width=".6" transform="rotate(90)"/><rect x="-2" y="-10.5" width="4" height="6" rx="2" fill="#6a9bd1" stroke="#3d6da8" stroke-width=".6" transform="rotate(135)"/><rect x="-2" y="-10.5" width="4" height="6" rx="2" fill="#6a9bd1" stroke="#3d6da8" stroke-width=".6" transform="rotate(180)"/><rect x="-2" y="-10.5" width="4" height="6" rx="2" fill="#6a9bd1" stroke="#3d6da8" stroke-width=".6" transform="rotate(225)"/><rect x="-2" y="-10.5" width="4" height="6" rx="2" fill="#6a9bd1" stroke="#3d6da8" stroke-width=".6" transform="rotate(270)"/><rect x="-2" y="-10.5" width="4" height="6" rx="2" fill="#6a9bd1" stroke="#3d6da8" stroke-width=".6" transform="rotate(315)"/><circle r="2.5" fill="#f4f2ee"/></g></svg>
<svg class="s" style="left:1046.5px;top:72.0px" width="24" height="24" viewBox="0 0 24 24"><path d="M3.5 2h14v4l-2-2H8l6 8-7 8h8.5l2-2v4H3l7.5-10z" fill="#9a0ea0"/></svg>
<svg class="s" style="left:1079.0px;top:72.0px" width="24" height="24" viewBox="0 0 24 24"><path d="M1.5 1.5h5v3h14v7h-5v-3h-4v3h-10z" fill="#5b8dc8" stroke="#3d6da8" stroke-width=".8"/><rect x="1" y="11.5" width="21" height="7" fill="#ccc" stroke="#666"/><path d="M4 11.5v3M7 11.5v2M10 11.5v3M13 11.5v2M16 11.5v3M19 11.5v2" stroke="#666" stroke-width=".8"/></svg>
<svg class="s" style="left:1106.5px;top:72.0px" width="24" height="24" viewBox="0 0 24 24"><path d="M1 9h9l-4.5 4.5z" fill="#333"/></svg>
<svg class="s" style="left:1123.5px;top:72.0px" width="24" height="24" viewBox="0 0 24 24"><path d="M4 1.5h16a3 3 0 0 1 3 3v6a3 3 0 0 1-3 3H11l-5 6v-6H4a3 3 0 0 1-3-3v-6a3 3 0 0 1 3-3z" fill="#f9eb8b" stroke="#d4b72c" stroke-width="1.1"/><circle cx="5" cy="19" r="3.5" fill="#6aaa6a" stroke="#4c7d4c"/></svg>
<svg class="s" style="left:1157.0px;top:72.0px" width="24" height="24" viewBox="0 0 24 24"><path d="M1.5 1.5h20v15H8l-6 6 2-6H1.5z" fill="#eef3f7" stroke="#999"/><text x="6" y="14" font-family="Liberation Serif" font-weight="bold" font-size="13" fill="#444">T</text></svg>
<svg class="s" style="left:1184.5px;top:72.0px" width="24" height="24" viewBox="0 0 24 24"><path d="M1 9h9l-4.5 4.5z" fill="#333"/></svg>
<svg class="s" style="left:20.0px;top:111.0px" width="24" height="24" viewBox="0 0 24 24"><path d="M0.5 8.5l8-2 3 14-7 2z" fill="#e06a2b" stroke="#b24d18" stroke-width=".6"/><path d="M3.5 5.5l8-1 2 14-8 1z" fill="#f5d03e" stroke="#c9a82c" stroke-width=".6"/><path d="M8 1.5l11.5 1.5-1.5 11.5-11.5-1.5z" fill="#6a9bd1" stroke="#3d6da8" stroke-width=".7"/><rect x="13.5" y="13.5" width="9.5" height="9.5" rx="2" fill="#4f9a55"/><path d="M18.25 15.25v6M15.25 18.25h6" stroke="#fff" stroke-width="2"/></svg>
<svg class="s" style="left:53.0px;top:111.0px" width="24" height="24" viewBox="0 0 24 24"><path d="M1.5 9l10 5v9l-10-5z" fill="#e0b818" stroke="#5a4a10" stroke-width=".8"/><path d="M11.5 14l10-5v9l-10 5z" fill="#fdf07a" stroke="#5a4a10" stroke-width=".8"/><path d="M1.5 9l10-4 10 4-10 5z" fill="#c9a82c" stroke="#5a4a10" stroke-width=".6"/><circle cx="11.5" cy="7" r="6" fill="#5b8dc8" stroke="#3d6da8" stroke-width=".6"/><path d="M8 4c2 1 1 3 3 3s1 3 3 3M7 8c1 2 3 1 3 3M12 2c1 1 3 1 4 3" stroke="#2a4f80" stroke-width="1.6" fill="none"/><rect x="13" y="13" width="10" height="10" rx="1.5" fill="#c6a11a"/><g stroke="#fff" stroke-width="1.3" transform="translate(18.0 18.0)"><path d="M0 -3.3V3.3M-2.9 -1.65L2.9 1.65M-2.9 1.65L2.9 -1.65"/></g></svg>
<svg class="s" style="left:86.0px;top:111.0px" width="24" height="24" viewBox="0 0 24 24"><path d="M2.5 2.5L9.5 20.5 15.5 2.5h7" fill="none" stroke="#2e3f55" stroke-width="1.4"/><circle cx="2.5" cy="2.5" r="1.3" fill="#fff" stroke="#2e3f55"/><circle cx="9.5" cy="20.5" r="1.3" fill="#fff" stroke="#2e3f55"/><circle cx="15.5" cy="2.5" r="1.3" fill="#fff" stroke="#2e3f55"/><circle cx="22" cy="2.5" r="1.3" fill="#fff" stroke="#2e3f55"/><rect x="14" y="14" width="9.5" height="9.5" rx="1.5" fill="#c6a11a"/><g stroke="#fff" stroke-width="1.3" transform="translate(18.75 18.75)"><path d="M0 -3.3V3.3M-2.9 -1.65L2.9 1.65M-2.9 1.65L2.9 -1.65"/></g></svg>
<svg class="s" style="left:119.0px;top:111.0px" width="24" height="24" viewBox="0 0 24 24"><path d="M2 23C4 15 10 6 22 1c-2 8-8 15-15 17z" fill="#8fb4e0" stroke="#3d6da8" stroke-width=".8"/><path d="M3 22L18 6" stroke="#3d6da8" stroke-width=".8"/><rect x="13.5" y="14" width="9.5" height="9.5" rx="1.5" fill="#c6a11a"/><g stroke="#fff" stroke-width="1.3" transform="translate(18.25 18.75)"><path d="M0 -3.3V3.3M-2.9 -1.65L2.9 1.65M-2.9 1.65L2.9 -1.65"/></g></svg>
<svg class="s" style="left:153.0px;top:111.0px" width="24" height="24" viewBox="0 0 24 24"><rect x="1.5" y="5.5" width="18" height="11" rx="1.5" fill="#6a9bd1" stroke="#3d6da8"/><path d="M4 1.5v4M4 16.5v4" stroke="#2e3f55" stroke-width="1"/><path d="M7 1.5v4M7 16.5v4" stroke="#2e3f55" stroke-width="1"/><path d="M10 1.5v4M10 16.5v4" stroke="#2e3f55" stroke-width="1"/><path d="M13 1.5v4M13 16.5v4" stroke="#2e3f55" stroke-width="1"/><path d="M16 1.5v4M16 16.5v4" stroke="#2e3f55" stroke-width="1"/><rect x="14" y="14" width="9.5" height="9.5" rx="1.5" fill="#c6a11a"/><g stroke="#fff" stroke-width="1.3" transform="translate(18.75 18.75)"><path d="M0 -3.3V3.3M-2.9 -1.65L2.9 1.65M-2.9 1.65L2.9 -1.65"/></g></svg>
<svg class="s" style="left:200.0px;top:111.0px" width="24" height="24" viewBox="0 0 24 24"><path d="M2 22l1-5L13 3l3 2L6 19z M7 22l1-5L18 3l3 2L11 19z" fill="#e3e0da" stroke="#d8d5ce" stroke-width=".8"/></svg>
<svg class="s" style="left:218.0px;top:111.0px" width="24" height="24" viewBox="0 0 24 24"><path d="M1 9h9l-4.5 4.5z" fill="#d5d2cb"/></svg>
<svg class="s" style="left:233.0px;top:111.0px" width="24" height="24" viewBox="0 0 24 24"><path d="M3 22l1-5L16 2l4 3L8 20z" fill="#e6e3dd" stroke="#d5d2cb" stroke-width=".8"/></svg>
<svg class="s" style="left:266.0px;top:111.0px" width="24" height="24" viewBox="0 0 24 24"><rect x="1" y="1" width="20" height="20" rx="2" fill="#dad7d0"/><rect x="4" y="2" width="13" height="8" fill="#ebe8e2"/><rect x="5" y="13" width="10" height="7" fill="#ebe8e2"/><path d="M12 22l1.5-4 7-9 2 1.5-7 9z" fill="#d8d0c8"/></svg>
<svg class="s" style="left:300.0px;top:111.0px" width="24" height="24" viewBox="0 0 24 24"><path d="M4 2c5-2 8 3 12 1s7 3 5 7-6 3-10 4-10 2-10-6 1-5 3-6z" fill="#dddcd6" stroke="#cfcdc6" stroke-width=".8"/><rect x="12" y="12" width="11" height="11" rx="1.5" fill="#cfcbbd"/><g stroke="#fff" stroke-width="1.3" transform="translate(17.5 17.5)"><path d="M0 -3.3V3.3M-2.9 -1.65L2.9 1.65M-2.9 1.65L2.9 -1.65"/></g></svg>
<svg class="s" style="left:335.0px;top:111.0px" width="24" height="24" viewBox="0 0 24 24"><rect x="3" y="1" width="5" height="5" fill="none" stroke="#cfccc5"/><path d="M8 3.5h12M5.5 6L2 20" stroke="#d5d2cb"/><path d="M9 20l9-10 2 2-9 10zM10 9l10 11" stroke="#d5d2c8" stroke-width="3"/></svg>
<svg class="s" style="left:360.0px;top:111.0px" width="24" height="24" viewBox="0 0 24 24"><path d="M1 9h9l-4.5 4.5z" fill="#d5d2cb"/></svg>
<svg class="s" style="left:378.0px;top:111.0px" width="24" height="24" viewBox="0 0 24 24"><rect x="2" y="2" width="18" height="5" fill="#e3e0d6" stroke="#d3d0c6"/><rect x="2" y="9" width="18" height="5" fill="#e3e0d6" stroke="#d3d0c6"/><rect x="2" y="16" width="18" height="5" fill="#e3e0d6" stroke="#d3d0c6"/><path d="M8 22l1-4 11-15 2 2-11 15z" fill="#ece9e3" stroke="#cdcac3"/></svg>
<svg class="s" style="left:412.0px;top:111.0px" width="24" height="24" viewBox="0 0 24 24"><path d="M4 6h14l-1.5 16h-11z" fill="none" stroke="#dcc8c8" stroke-width="2"/><path d="M2 5h18M8 3h6M8.5 8v12M13.5 8v12" stroke="#dcc8c8" stroke-width="2"/></svg>
<svg class="s" style="left:444.0px;top:111.0px" width="24" height="24" viewBox="0 0 24 24"><path d="M1 8l14 5M2 12l13-3" stroke="#d6d3cc" stroke-width="1.6"/><circle cx="18.5" cy="7" r="3" fill="none" stroke="#d8c8cc" stroke-width="1.6"/><circle cx="18.5" cy="15" r="3" fill="none" stroke="#d8c8cc" stroke-width="1.6"/></svg>
<svg class="s" style="left:479.0px;top:111.0px" width="24" height="24" viewBox="0 0 24 24"><path d="M9 1.5h9l3 3v14h-12z" fill="#fff" stroke="#d5d2cb"/><path d="M2 6.5h9l3 3v13H2z" fill="#fff" stroke="#d0cdc6"/><path d="M4 12h7M4 14h7M4 16h7M4 18h7" stroke="#d8d5ce"/></svg>
<svg class="s" style="left:510.0px;top:111.0px" width="24" height="24" viewBox="0 0 24 24"><rect x="3" y="3" width="16" height="19" fill="#ecebe6" stroke="#d5d2cb"/><rect x="7" y="1.5" width="8" height="3" fill="#dcd9d3"/><path d="M6 7h9l2 2v11H6z" fill="#fff" stroke="#d0cdc6"/><path d="M8 12h7M8 14h7M8 16h7M8 18h7" stroke="#d8d5ce"/></svg>
<svg class="s" style="left:543.0px;top:111.0px" width="24" height="24" viewBox="0 0 24 24"><path d="M2 10l7-7v4c6 0 11 3 11 8 0 4-3 7-6 7 1-1 2-3 2-5 0-3-3-4-7-4v4z" fill="#ddd6d2"/></svg>
<svg class="s" style="left:576.0px;top:111.0px" width="24" height="24" viewBox="0 0 24 24"><path d="M22 10l-7-7v4C9 7 4 10 4 15c0 4 3 7 6 7-1-1-2-3-2-5 0-3 3-4 7-4v4z" fill="#d9dbd6"/></svg>
<svg class="s" style="left:624.0px;top:111.0px" width="24" height="24" viewBox="0 0 24 24"><path d="M6 2.5h14v9H6l-4.5-4.5z" fill="#e2dfd4" stroke="#d6d3c8" stroke-width=".8"/><text x="6.5" y="10.3" font-family="Liberation Sans" font-weight="bold" font-size="7.5" fill="#cbc8bd">abc</text></svg>
<svg class="s" style="left:657.0px;top:111.0px" width="24" height="24" viewBox="0 0 24 24"><circle cx="8" cy="9" r="7" fill="#d2d6cc"/><path d="M8 9V2a7 7 0 0 1 6.5 4.5z" fill="#d8d3c5"/><path d="M8 9l6.5-2.5A7 7 0 0 1 11 15z" fill="#dcc9c9"/><rect x="14" y="10" width="3" height="12" fill="#cdd3cb"/><rect x="10" y="16" width="3" height="6" fill="#dcd6cc"/><rect x="18" y="17" width="3" height="5" fill="#dccdd0"/></svg>
<svg class="s" style="left:691.0px;top:111.0px" width="24" height="24" viewBox="0 0 24 24"><path d="M6 2.5h15v9H6l-4.5-4.5z" fill="#f7dc3a" stroke="#b89c12" stroke-width=".8"/><text x="6.5" y="10.5" font-family="Liberation Sans" font-weight="bold" font-size="8.5" fill="#222">ab</text><rect x="16" y="7" width="2" height="7" fill="#eee" stroke="#777" stroke-width=".5"/><circle cx="18" cy="18" r="4.5" fill="#c41a1a"/></svg>
<svg class="s" style="left:724.0px;top:111.0px" width="24" height="24" viewBox="0 0 24 24"><path d="M6 2.5h14v9H6l-4.5-4.5z" fill="#e2dfd4" stroke="#d6d3c8" stroke-width=".8"/><text x="6.5" y="10.3" font-family="Liberation Sans" font-weight="bold" font-size="7.5" fill="#cbc8bd">ab</text><rect x="15" y="8" width="1.8" height="8" fill="#ede9e4" stroke="#cfc8c8" stroke-width=".5"/><circle cx="17" cy="18" r="4.5" fill="#d6c8cb"/></svg>
<svg class="s" style="left:757.0px;top:111.0px" width="24" height="24" viewBox="0 0 24 24"><path d="M6 2.5h14v9H6l-4.5-4.5z" fill="#e2dfd4" stroke="#d6d3c8" stroke-width=".8"/><text x="6.5" y="10.3" font-family="Liberation Sans" font-weight="bold" font-size="7.5" fill="#cbc8bd">abc</text><path d="M7 19c4-5 10-5 14 0-4 5-10 5-14 0z" fill="#fff" stroke="#d5d2cb"/><circle cx="14" cy="19" r="2" fill="#d5d2cb"/></svg>
<svg class="s" style="left:790.0px;top:111.0px" width="24" height="24" viewBox="0 0 24 24"><path d="M6 2.5h14v9H6l-4.5-4.5z" fill="#e2dfd4" stroke="#d6d3c8" stroke-width=".8"/><text x="6.5" y="10.3" font-family="Liberation Sans" font-weight="bold" font-size="7.5" fill="#cbc8bd">abc</text><rect x="13" y="13" width="10" height="10" rx="2" fill="#d2d0cc"/><path d="M15 17h3v-2.5l4 3.5-4 3.5V19h-3z" fill="#fff"/></svg>
<svg class="s" style="left:823.0px;top:111.0px" width="24" height="24" viewBox="0 0 24 24"><path d="M6 2.5h14v9H6l-4.5-4.5z" fill="#e2dfd4" stroke="#d6d3c8" stroke-width=".8"/><text x="6.5" y="10.3" font-family="Liberation Sans" font-weight="bold" font-size="7.5" fill="#cbc8bd">abc</text><rect x="13" y="13" width="10" height="10" rx="2" fill="#d2d0cc"/><circle cx="18" cy="18" r="2.8" fill="none" stroke="#fff" stroke-width="1.3"/></svg>
<svg class="s" style="left:856.0px;top:111.0px" width="24" height="24" viewBox="0 0 24 24"><path d="M6 2.5h14v9H6l-4.5-4.5z" fill="#e2dfd4" stroke="#d6d3c8" stroke-width=".8"/><text x="6.5" y="10.3" font-family="Liberation Sans" font-weight="bold" font-size="7.5" fill="#cbc8bd">abc</text><rect x="13" y="13" width="10" height="10" rx="2" fill="#dcd9cf"/><path d="M15 21l5-5" stroke="#fff" stroke-width="1.5"/></svg>
<svg class="s" style="left:905.0px;top:111.0px" width="24" height="24" viewBox="0 0 24 24"><defs><radialGradient id="gg" cx=".45" cy=".5" r=".55"><stop offset="0" stop-color="#3c8be0"/><stop offset=".55" stop-color="#9bb3cf"/><stop offset="1" stop-color="#2a72c8"/></radialGradient></defs><ellipse cx="11.5" cy="10" rx="11" ry="10" fill="url(#gg)" stroke="#2a72c8"/><path d="M0.5 10h22M2.5 5h18M2.5 15h18M11.5 0v20" stroke="#dce8f5" stroke-width=".9"/><path d="M4 4c1 3 1 9 0 12M19 4c-1 3-1 9 0 12" stroke="#555" stroke-width="2.4" opacity=".55"/><rect x="13" y="14" width="9" height="9" rx="2" fill="#4f9a55"/><path d="M17.5 15.5v6M14.5 18.5h6" stroke="#fff" stroke-width="2"/><path d="M18.5 20h5l-2.5 3z" fill="#222"/></svg>
<svg class="s" style="left:938.0px;top:111.0px" width="24" height="24" viewBox="0 0 24 24"><defs><radialGradient id="gg" cx=".45" cy=".5" r=".55"><stop offset="0" stop-color="#3c8be0"/><stop offset=".55" stop-color="#9bb3cf"/><stop offset="1" stop-color="#2a72c8"/></radialGradient></defs><ellipse cx="11.5" cy="10" rx="11" ry="10" fill="url(#gg)" stroke="#2a72c8"/><path d="M0.5 10h22M2.5 5h18M2.5 15h18M11.5 0v20" stroke="#dce8f5" stroke-width=".9"/><path d="M4 4c1 3 1 9 0 12M19 4c-1 3-1 9 0 12" stroke="#555" stroke-width="2.4" opacity=".55"/><rect x="14" y="14" width="9" height="9" rx="1.5" fill="#4f9a55"/><circle cx="18" cy="18" r="2.2" fill="none" stroke="#fff" stroke-width="1.3"/><path d="M19.5 19.5l2 2" stroke="#fff" stroke-width="1.3"/></svg>
<svg class="s" style="left:971.0px;top:111.0px" width="24" height="24" viewBox="0 0 24 24"><ellipse cx="11.5" cy="10" rx="11" ry="10" fill="#3e6fa8" stroke="#2a4f80"/><path d="M0.5 10h22M2.5 5h18M11.5 0v20" stroke="#cfe0f5" stroke-width=".9"/><circle cx="6" cy="19" r="4" fill="#111"/><circle cx="17" cy="19" r="4" fill="#111"/><rect x="6" y="15" width="11" height="3" fill="#111"/><ellipse cx="6" cy="20" rx="2.5" ry="1.5" fill="#fff"/><ellipse cx="17" cy="20" rx="2.5" ry="1.5" fill="#fff"/></svg>
<svg class="s" style="left:1022.0px;top:111.0px" width="24" height="24" viewBox="0 0 24 24"><path d="M11 1c-4 0-5 1.5-5 3.5V7h6v1H4c-2 0-3.5 1.5-3.5 4.5S2 17 4 17h2v-3c0-2 1.5-3.5 3.5-3.5h5c2 0 3-1.5 3-3V4.5C17.5 2.5 15.5 1 11 1z" fill="#3d7ab8"/><path d="M12 21c4 0 5-1.5 5-3.5V15h-6v-1h7c2 0 3.5-1.5 3.5-4.5S20 5 18 5h-1.5v3c0 2-1.5 3.5-3.5 3.5H8c-2 0-3 1.5-3 3v2.5C5 19.5 7.5 21 12 21z" fill="#f5c93a"/><path d="M15 18l6 3-6 3" fill="none" stroke="#333" stroke-width="1.2"/></svg>
<svg class="s" style="left:1053.0px;top:111.0px" width="24" height="24" viewBox="0 0 24 24"><rect x="0.5" y="3" width="23" height="18" fill="#0d2233"/><rect x="0.5" y="3" width="23" height="3" fill="#2f4352"/><text x="1" y="15.5" font-family="Liberation Mono" font-size="8.5" fill="#cfd8dc">IP</text><text x="11" y="15.5" font-family="Liberation Mono" font-size="8.5" fill="#2a9fd6">[y]</text></svg>
<svg class="s" style="left:1102.0px;top:111.0px" width="24" height="24" viewBox="0 0 24 24"><rect x="2.5" y="1.5" width="19" height="21" fill="#6a9bd1" stroke="#222" stroke-width="1"/><rect x="2.5" y="1.5" width="5" height="21" fill="#33475a"/><text x="11" y="16" font-family="Liberation Sans" font-size="13" fill="#fff">?</text></svg>
<svg class="s" style="left:20.0px;top:149.0px" width="24" height="24" viewBox="0 0 24 24"><rect x="1" y="1" width="22" height="22" fill="#5eaf55"/><rect x="1" y="1" width="22" height="11" fill="#7cc46e" opacity=".6"/><circle cx="13.5" cy="9.5" r="5.5" fill="none" stroke="#fff" stroke-width="2.4"/><path d="M9.5 13.5L3.5 19.5" stroke="#fff" stroke-width="3"/></svg>
<svg class="s" style="left:52.0px;top:149.0px" width="24" height="24" viewBox="0 0 24 24"><rect x="1" y="3" width="20" height="20" fill="#f3d36b"/><path d="M1 10c4 0 6 4 10 3s6 5 10 4v6H1z" fill="#4f8fd8"/><path d="M3 4h4v5H3zM12 15h6v6h-6z" fill="#d84a3a" opacity=".8"/><path d="M6 9l5 5M14 5l3 3" stroke="#4caf50" stroke-width="2"/><path d="M9 17L22 2" stroke="#8b3a12" stroke-width="2.5"/><path d="M8.5 18l2-2" stroke="#222" stroke-width="2"/></svg>
<div class="r" style="left:236px;top:181px;width:6px;height:867px;background:#efebe6;"></div>
<div class="r" style="left:242px;top:182px;width:1675px;height:866px;background:#fff;border:1px solid #bab5b0;border-right:1px solid #c8c4be;box-sizing:border-box"></div>
<svg class="s" style="left:0px;top:0px" width="1920" height="1080" viewBox="0 0 1920 1080"><defs><clipPath id="mclip"><path d="M482.5 481.3 L555.3 482.0 L555.8 488.7 L614.0 490.3 L614.0 496.3 L732.5 496.7 L732.5 483.3 L1372.4 483.5 L1372.4 463.0 L1721.5 456.1 L1720.8 468.3 L1722.1 479.0 L1719.9 486.7 L1710.8 488.2 L1712.3 494.3 L1709.2 497.4 L1703.1 502.0 L1695.5 509.6 L1687.8 515.7 L1683.2 523.4 L1684.8 531.0 L1690.9 534.1 L1693.9 540.2 L1687.8 544.8 L1693.9 552.4 L1695.5 557.0 L1687.8 561.6 L1686.3 567.7 L1687.8 575.3 L1690.9 581.5 L1689.4 590.6 L1693.9 602.9 L1697.0 615.1 L1693.9 624.3 L1700.1 630.4 L1700.1 639.5 L1693.9 642.6 L1687.8 645.7 L1687.8 654.8 L1692.4 656.4 L1689.4 660.9 L1687.8 665.5 L1690.9 668.6 L1687.8 674.7 L1690.9 682.3 L1684.8 691.5 L1687.8 700.7 L1690.9 708.3 L1684.8 712.9 L1678.7 719.0 L1669.5 728.2 L1660.3 740.4 L1652.7 755.7 L1651.1 764.9 L1602.2 766.4 L1566.5 767.6 L1272.5 772.2 L1080.0 773.0 L730.0 772.3 L605.8 769.2 L604.6 760.8 L555.2 740.3 L554.0 733.0 L498.6 733.0 L499.8 718.6 L537.0 659.2 L513.0 640.4 L490.2 635.6 L490.2 611.5 L474.5 609.0 L440.8 564.5 L436.0 563.3 L434.8 550.0 L443.2 533.2 L461.7 533.0 L461.7 510.0 L480.8 503.3Z"/></clipPath></defs><path d="M482.5 481.3 L555.3 482.0 L555.8 488.7 L614.0 490.3 L614.0 496.3 L732.5 496.7 L732.5 483.3 L1372.4 483.5 L1372.4 463.0 L1721.5 456.1 L1720.8 468.3 L1722.1 479.0 L1719.9 486.7 L1710.8 488.2 L1712.3 494.3 L1709.2 497.4 L1703.1 502.0 L1695.5 509.6 L1687.8 515.7 L1683.2 523.4 L1684.8 531.0 L1690.9 534.1 L1693.9 540.2 L1687.8 544.8 L1693.9 552.4 L1695.5 557.0 L1687.8 561.6 L1686.3 567.7 L1687.8 575.3 L1690.9 581.5 L1689.4 590.6 L1693.9 602.9 L1697.0 615.1 L1693.9 624.3 L1700.1 630.4 L1700.1 639.5 L1693.9 642.6 L1687.8 645.7 L1687.8 654.8 L1692.4 656.4 L1689.4 660.9 L1687.8 665.5 L1690.9 668.6 L1687.8 674.7 L1690.9 682.3 L1684.8 691.5 L1687.8 700.7 L1690.9 708.3 L1684.8 712.9 L1678.7 719.0 L1669.5 728.2 L1660.3 740.4 L1652.7 755.7 L1651.1 764.9 L1602.2 766.4 L1566.5 767.6 L1272.5 772.2 L1080.0 773.0 L730.0 772.3 L605.8 769.2 L604.6 760.8 L555.2 740.3 L554.0 733.0 L498.6 733.0 L499.8 718.6 L537.0 659.2 L513.0 640.4 L490.2 635.6 L490.2 611.5 L474.5 609.0 L440.8 564.5 L436.0 563.3 L434.8 550.0 L443.2 533.2 L461.7 533.0 L461.7 510.0 L480.8 503.3Z" fill="#ca435a"/><g clip-path="url(#mclip)"><path d="M1271.8 654.3 L1334.5 637.6 L1346.9 637.0 L1378.8 642.0 L1470.8 673.8 L1508.0 684.4 L1522.2 684.4 L1526.8 767.6 L1272.5 772.2Z" fill="#6f61ee" stroke="#231c20" stroke-width="1" stroke-linejoin="round"/><path d="M1234.3 546.3 L1323.2 546.3 L1323.2 587.0 L1274.3 587.0 L1274.3 567.5 L1234.3 567.5Z" fill="#6f61ee" stroke="#231c20" stroke-width="1" stroke-linejoin="round"/><path d="M1602.2 766.4 L1600.7 748.1 L1603.8 732.8 L1608.3 713.5 L1657.9 712.9 L1657.9 698.2 L1651.1 691.5 L1651.1 683.9 L1658.8 682.3 L1659.7 670.1 L1671.0 669.5 L1677.1 657.9 L1692.4 656.4 L1687.8 665.5 L1690.9 668.6 L1687.8 674.7 L1690.9 682.3 L1684.8 691.5 L1687.8 700.7 L1690.9 708.3 L1684.8 712.9 L1678.7 719.0 L1669.5 728.2 L1660.3 740.4 L1652.7 755.7 L1651.1 764.9Z" fill="#6f61ee" stroke="#231c20" stroke-width="1" stroke-linejoin="round"/><path d="M483.0 481.7 L555.2 481.7 L555.9 489.1 L590.0 489.8 L590.0 516.5 L578.1 519.4 L557.4 518.0 L553.0 525.4 L541.1 531.3 L530.7 537.2 L521.9 549.1 L513.0 558.0 L501.1 558.0 L492.2 565.4 L480.4 566.9 L467.0 563.9 L461.1 558.0 L456.7 544.6 L461.9 537.2 L461.9 510.6 L482.6 503.1Z" fill="#6f61ee" stroke="#231c20" stroke-width="1" stroke-linejoin="round"/><path d="M533.7 534.3 L551.5 537.2 L551.5 550.6 L539.6 549.1 L532.2 543.1Z" fill="#6f61ee" stroke="#231c20" stroke-width="1" stroke-linejoin="round"/><path d="M572.2 562.4 L590.0 562.4 L590.0 575.7 L572.2 575.7Z" fill="#6f61ee" stroke="#231c20" stroke-width="1" stroke-linejoin="round"/><path d="M576.7 578.7 L585.6 578.7 L587.0 590.6 L578.1 590.6Z" fill="#6f61ee" stroke="#231c20" stroke-width="1" stroke-linejoin="round"/><path d="M486.3 608.3 L490.7 596.5 L499.6 598.0 L499.6 608.3 L513.0 611.3 L523.3 608.3 L523.3 627.6 L490.7 627.6Z" fill="#6f61ee" stroke="#231c20" stroke-width="1" stroke-linejoin="round"/><path d="M513.0 563.9 L518.9 563.9 L520.4 577.2 L504.1 578.7 L510.0 569.8Z" fill="#6f61ee" stroke="#231c20" stroke-width="1" stroke-linejoin="round"/><path d="M524.8 611.3 L533.7 617.2 L547.0 614.3 L548.5 623.1 L533.7 624.6 L524.8 623.1Z" fill="#6f61ee" stroke="#231c20" stroke-width="1" stroke-linejoin="round"/><path d="M584.1 590.6 L590.0 590.6 L590.0 635.0 L584.1 635.0Z" fill="#6f61ee" stroke="#231c20" stroke-width="1" stroke-linejoin="round"/><path d="M595.9 507.6 L613.7 506.1 L621.1 525.4 L628.5 528.3 L655.2 526.9 L655.2 544.6 L647.8 546.1 L647.8 571.3 L641.9 577.2 L630.0 581.7 L641.9 584.6 L637.4 606.9 L631.5 608.3 L628.5 617.2 L647.8 617.2 L649.3 623.1 L612.2 623.1 L607.8 629.1 L590.0 629.1 L590.0 562.4 L606.3 562.4 L606.3 540.2 L590.0 540.2 L590.0 518.0 L595.9 516.5Z" fill="#6f61ee" stroke="#231c20" stroke-width="1" stroke-linejoin="round"/><path d="M655.2 566.9 L675.9 566.9 L678.9 572.8 L681.9 577.2 L655.2 577.2 L650.7 575.7Z" fill="#6f61ee" stroke="#231c20" stroke-width="1" stroke-linejoin="round"/><path d="M683.3 578.7 L693.7 578.7 L713.0 587.6 L723.3 596.5 L732.2 608.3 L723.3 611.3 L708.5 608.3 L693.7 603.9 L684.8 600.9Z" fill="#6f61ee" stroke="#231c20" stroke-width="1" stroke-linejoin="round"/><path d="M708.5 602.4 L732.2 605.4 L732.2 623.1 L708.5 623.1Z" fill="#6f61ee" stroke="#231c20" stroke-width="1" stroke-linejoin="round"/><path d="M732.2 569.8 L750.0 566.9 L750.0 587.6 L741.1 581.7 L732.2 581.7Z" fill="#6f61ee" stroke="#231c20" stroke-width="1" stroke-linejoin="round"/><path d="M744.1 489.8 L750.0 489.8 L750.0 510.6 L744.1 510.6Z" fill="#6f61ee" stroke="#231c20" stroke-width="1" stroke-linejoin="round"/><path d="M738.1 532.8 L750.0 532.8 L750.0 544.6 L738.1 544.6Z" fill="#6f61ee" stroke="#231c20" stroke-width="1" stroke-linejoin="round"/><path d="M690.7 507.6 L704.1 506.1 L702.6 513.5 L692.2 514.3Z" fill="#6f61ee" stroke="#231c20" stroke-width="1" stroke-linejoin="round"/><path d="M690.7 525.4 L701.1 525.4 L699.6 534.3 L690.7 534.3Z" fill="#6f61ee" stroke="#231c20" stroke-width="1" stroke-linejoin="round"/><path d="M714.4 531.3 L723.3 531.3 L723.3 544.6 L714.4 544.6Z" fill="#6f61ee" stroke="#231c20" stroke-width="1" stroke-linejoin="round"/><path d="M735.2 593.5 L750.0 593.5 L750.0 611.3 L736.7 608.3Z" fill="#6f61ee" stroke="#231c20" stroke-width="1" stroke-linejoin="round"/><path d="M548.1 655.6 L554.1 650.4 L563.0 645.9 L571.9 642.2 L574.8 646.7 L583.7 663.0 L592.6 676.3 L582.2 676.3 L571.9 664.4 L563.0 655.6 L554.1 658.5Z" fill="#6f61ee" stroke="#231c20" stroke-width="1" stroke-linejoin="round"/><path d="M570.4 628.9 L583.7 634.8 L580.7 642.2 L571.9 642.2Z" fill="#6f61ee" stroke="#231c20" stroke-width="1" stroke-linejoin="round"/><path d="M620.0 762.2 L640.0 753.3 L640.0 769.6 L620.0 769.6Z" fill="#6f61ee" stroke="#231c20" stroke-width="1" stroke-linejoin="round"/><path d="M628.1 729.6 L635.6 723.7 L640.0 729.6 L640.0 743.0 L632.6 738.5Z" fill="#6f61ee" stroke="#231c20" stroke-width="1" stroke-linejoin="round"/><path d="M607.4 663.0 L613.3 663.0 L613.3 668.9 L607.4 668.9Z" fill="#6f61ee" stroke="#231c20" stroke-width="1" stroke-linejoin="round"/><path d="M694.8 732.6 L699.3 731.1 L709.6 729.6 L711.1 725.2 L717.0 725.2 L717.0 732.6 L728.9 738.5 L725.9 751.9 L714.1 753.3 L694.8 748.9 L696.3 741.5Z" fill="#6f61ee" stroke="#231c20" stroke-width="1" stroke-linejoin="round"/><path d="M666.7 757.8 L678.5 753.3 L688.9 757.8 L688.9 770.4 L666.7 770.4Z" fill="#6f61ee" stroke="#231c20" stroke-width="1" stroke-linejoin="round"/><path d="M640.0 735.6 L645.9 747.4 L647.4 759.3 L650.4 768.1 L640.0 769.6Z" fill="#6f61ee" stroke="#231c20" stroke-width="1" stroke-linejoin="round"/><path d="M794.1 685.2 L800.0 685.2 L800.0 691.1 L794.1 691.1Z" fill="#6f61ee" stroke="#231c20" stroke-width="1" stroke-linejoin="round"/><path d="M708.1 620.0 L725.9 620.0 L723.0 627.4 L711.1 627.4Z" fill="#6f61ee" stroke="#231c20" stroke-width="1" stroke-linejoin="round"/><path d="M753.0 483.9 L801.1 483.9 L801.1 511.3 L815.2 511.3 L815.2 518.0 L811.5 519.4 L811.5 522.4 L808.5 525.4 L808.5 538.7 L795.9 538.7 L794.4 532.8 L788.5 532.8 L787.0 538.7 L781.1 538.7 L779.6 532.8 L773.7 531.3 L769.3 528.3 L760.4 528.3 L758.9 525.4 L750.0 525.4 L750.0 489.8 L753.0 489.8Z" fill="#6f61ee" stroke="#231c20" stroke-width="1" stroke-linejoin="round"/><path d="M750.0 532.8 L766.3 534.3 L773.7 531.3 L779.6 532.8 L781.1 538.7 L808.5 538.7 L808.5 553.5 L801.1 553.5 L800.4 550.6 L794.4 552.0 L790.0 555.0 L787.0 550.6 L779.6 549.1 L775.2 544.6 L767.8 544.6 L761.9 543.1 L750.0 544.6Z" fill="#6f61ee" stroke="#231c20" stroke-width="1" stroke-linejoin="round"/><path d="M815.9 532.8 L827.0 532.8 L828.5 537.2 L835.9 540.2 L835.9 553.5 L815.9 553.5Z" fill="#6f61ee" stroke="#231c20" stroke-width="1" stroke-linejoin="round"/><path d="M779.6 583.1 L815.2 581.7 L848.5 580.9 L848.5 587.6 L856.7 587.6 L856.7 608.3 L815.2 608.3 L815.2 602.4 L807.8 602.4 L807.8 608.3 L794.4 608.3 L794.4 596.5 L787.0 593.5 L787.0 589.1 L779.6 587.6Z" fill="#6f61ee" stroke="#231c20" stroke-width="1" stroke-linejoin="round"/><path d="M793.0 608.3 L815.2 608.3 L821.1 609.8 L827.0 611.3 L824.1 623.1 L815.2 629.1 L803.3 630.6 L801.9 624.6 L794.4 624.6Z" fill="#6f61ee" stroke="#231c20" stroke-width="1" stroke-linejoin="round"/><path d="M750.0 574.3 L758.9 575.7 L758.9 614.3 L750.0 614.3Z" fill="#6f61ee" stroke="#231c20" stroke-width="1" stroke-linejoin="round"/><path d="M856.7 484.6 L896.7 484.6 L895.2 500.2 L881.9 502.4 L886.3 510.6 L898.1 512.0 L910.0 512.0 L910.0 546.1 L901.1 546.1 L901.1 558.0 L910.0 563.9 L910.0 635.0 L869.3 635.0 L869.3 623.1 L856.7 623.1Z" fill="#6f61ee" stroke="#231c20" stroke-width="1" stroke-linejoin="round"/><path d="M981.7 546.7 L1009.2 546.7 L1009.2 560.8 L1021.7 566.7 L1023.3 580.8 L1036.7 581.7 L1036.7 588.3 L1043.3 588.3 L1043.3 595.0 L1050.0 595.0 L1050.0 601.7 L1064.2 601.7 L1064.2 608.3 L1035.0 608.3 L1033.3 606.7 L1023.3 606.7 L1021.7 608.3 L1010.0 608.3 L1010.0 595.0 L995.8 595.0 L995.8 605.0 L990.0 601.7 L988.3 595.0 L981.7 588.3Z" fill="#6f61ee" stroke="#231c20" stroke-width="1" stroke-linejoin="round"/><path d="M905.0 511.7 L911.7 512.5 L912.5 519.2 L920.0 519.2 L920.0 505.8 L925.8 505.8 L925.8 518.3 L931.7 533.3 L931.7 566.7 L925.8 566.7 L925.8 553.3 L912.5 553.3 L912.5 546.7 L905.0 546.7Z" fill="#6f61ee" stroke="#231c20" stroke-width="1" stroke-linejoin="round"/><path d="M905.0 565.0 L939.2 567.5 L939.2 581.7 L950.8 581.7 L950.0 588.3 L939.2 590.0 L939.2 636.7 L918.3 636.7 L918.3 655.0 L905.0 655.0Z" fill="#6f61ee" stroke="#231c20" stroke-width="1" stroke-linejoin="round"/><path d="M995.0 633.3 L1008.3 625.0 L1025.0 625.0 L1031.7 631.7 L1035.0 630.0 L1050.0 635.0 L1050.0 630.0 L1063.3 630.0 L1063.3 643.3 L1085.0 643.3 L1085.0 655.0 L995.0 655.0Z" fill="#6f61ee" stroke="#231c20" stroke-width="1" stroke-linejoin="round"/><path d="M945.0 613.3 L958.3 615.0 L960.0 625.0 L958.3 635.0 L945.0 635.0 L939.2 628.3Z" fill="#6f61ee" stroke="#231c20" stroke-width="1" stroke-linejoin="round"/><path d="M970.0 623.3 L980.0 623.3 L980.0 628.3 L970.0 628.3Z" fill="#6f61ee" stroke="#231c20" stroke-width="1" stroke-linejoin="round"/><path d="M1021.7 605.0 L1033.3 606.7 L1036.7 621.7 L1026.7 625.0 L1021.7 621.7Z" fill="#6f61ee" stroke="#231c20" stroke-width="1" stroke-linejoin="round"/><path d="M870.0 620.0 L917.4 620.0 L917.4 685.2 L911.5 685.2 L911.5 678.5 L904.1 678.5 L904.1 664.4 L897.4 664.4 L897.4 692.6 L894.4 692.6 L894.4 772.6 L874.4 772.6 L873.7 766.7 L867.0 766.7 L867.0 710.4 L858.1 710.4 L857.4 705.9 L850.7 704.4 L850.0 697.0 L843.3 697.0 L843.3 691.9 L850.7 692.6 L864.1 703.0 L874.4 708.9 L874.4 692.6 L864.1 691.1 L862.6 684.4 L856.7 684.4 L856.7 651.1 L870.0 649.6Z" fill="#6f61ee" stroke="#231c20" stroke-width="1" stroke-linejoin="round"/><path d="M894.4 664.4 L904.1 664.4 L904.1 678.5 L911.5 678.5 L911.5 685.2 L924.1 685.2 L924.8 691.1 L929.3 692.6 L929.3 711.1 L894.4 711.1Z" fill="#6f61ee" stroke="#231c20" stroke-width="1" stroke-linejoin="round"/><path d="M918.9 620.0 L938.1 620.0 L938.1 636.3 L918.9 636.3Z" fill="#6f61ee" stroke="#231c20" stroke-width="1" stroke-linejoin="round"/><path d="M918.9 671.9 L938.1 671.9 L938.1 692.6 L935.2 711.1 L929.3 711.1 L929.3 692.6 L924.8 691.1 L924.1 685.2 L918.9 685.2Z" fill="#6f61ee" stroke="#231c20" stroke-width="1" stroke-linejoin="round"/><path d="M939.6 625.9 L958.9 625.9 L958.9 637.8 L939.6 637.8Z" fill="#6f61ee" stroke="#231c20" stroke-width="1" stroke-linejoin="round"/><path d="M939.6 655.6 L947.0 652.6 L951.5 655.6 L952.2 671.1 L941.1 671.9 L939.6 679.3Z" fill="#6f61ee" stroke="#231c20" stroke-width="1" stroke-linejoin="round"/><path d="M794.4 677.8 L821.1 677.8 L821.1 684.4 L835.2 684.4 L835.2 691.1 L794.4 691.1Z" fill="#6f61ee" stroke="#231c20" stroke-width="1" stroke-linejoin="round"/><path d="M815.2 649.6 L824.1 649.6 L833.0 657.0 L840.4 668.9 L815.9 670.4Z" fill="#6f61ee" stroke="#231c20" stroke-width="1" stroke-linejoin="round"/><path d="M793.7 620.0 L825.6 620.0 L822.6 627.4 L816.7 630.4 L803.3 630.4 L794.4 625.9Z" fill="#6f61ee" stroke="#231c20" stroke-width="1" stroke-linejoin="round"/><path d="M1008.3 658.3 L1029.2 657.5 L1060.0 657.5 L1066.7 670.0 L1073.3 676.7 L1083.3 691.7 L1187.5 691.7 L1187.5 774.2 L1056.7 773.3 L1056.7 740.0 L1050.0 733.3 L1043.3 730.0 L1041.7 726.7 L1035.0 716.7 L1030.0 713.3 L1029.2 706.7 L1008.3 706.7Z" fill="#6f61ee" stroke="#231c20" stroke-width="1" stroke-linejoin="round"/><path d="M994.2 643.3 L1063.3 643.3 L1070.0 650.0 L1070.0 657.5 L1029.2 657.5 L1008.3 658.3 L1008.3 656.7 L994.2 656.7Z" fill="#6f61ee" stroke="#231c20" stroke-width="1" stroke-linejoin="round"/><path d="M1030.0 630.0 L1036.7 633.3 L1043.3 635.8 L1050.0 635.8 L1050.0 630.0 L1063.3 630.0 L1063.3 643.3 L1030.0 643.3Z" fill="#6f61ee" stroke="#231c20" stroke-width="1" stroke-linejoin="round"/><path d="M1010.0 600.0 L1065.0 600.0 L1065.0 608.3 L1036.7 608.3 L1035.0 621.7 L1023.3 621.7 L1023.3 605.0 L1010.0 605.0Z" fill="#6f61ee" stroke="#231c20" stroke-width="1" stroke-linejoin="round"/><path d="M973.3 655.0 L994.2 655.0 L994.2 685.0 L973.3 685.0Z" fill="#6f61ee" stroke="#231c20" stroke-width="1" stroke-linejoin="round"/><path d="M1001.7 692.5 L1008.3 692.5 L1008.3 705.8 L1001.7 705.8Z" fill="#6f61ee" stroke="#231c20" stroke-width="1" stroke-linejoin="round"/><path d="M993.3 626.7 L1023.3 626.7 L1025.0 643.3 L993.3 643.3Z" fill="#6f61ee" stroke="#231c20" stroke-width="1" stroke-linejoin="round"/><path d="M970.0 623.3 L980.0 623.3 L980.0 629.2 L970.0 629.2Z" fill="#6f61ee" stroke="#231c20" stroke-width="1" stroke-linejoin="round"/><path d="M538.9 482.4 L547.0 482.4 L545.6 494.3 L538.9 494.3Z" fill="#ca435a" stroke="#231c20" stroke-width="1" stroke-linejoin="round"/><path d="M513.0 498.7 L530.7 497.2 L526.3 512.0 L518.9 512.0Z" fill="#ca435a" stroke="#231c20" stroke-width="1" stroke-linejoin="round"/><path d="M486.3 500.2 L493.7 500.2 L492.2 509.1 L486.3 509.1Z" fill="#ca435a" stroke="#231c20" stroke-width="1" stroke-linejoin="round"/><path d="M461.9 534.3 L471.5 523.9 L489.3 513.5 L499.6 512.0 L513.0 511.3 L513.0 515.0 L499.6 518.0 L495.2 525.4 L498.1 541.7 L486.3 541.7 L478.9 544.6 L465.6 538.7Z" fill="#ca435a" stroke="#231c20" stroke-width="1" stroke-linejoin="round"/><path d="M578.1 500.2 L590.0 500.2 L590.0 518.0 L578.1 519.4 L572.2 513.5Z" fill="#ca435a" stroke="#231c20" stroke-width="1" stroke-linejoin="round"/><path d="M545.6 516.5 L557.4 518.0 L578.1 519.4 L578.1 534.3 L563.3 534.3 L551.5 531.3 L542.6 523.9Z" fill="#ca435a" stroke="#231c20" stroke-width="1" stroke-linejoin="round"/><path d="M459.6 553.5 L468.5 558.0 L474.4 563.9 L465.6 563.9 L461.1 558.0Z" fill="#ca435a" stroke="#231c20" stroke-width="1" stroke-linejoin="round"/><path d="M439.5 544.6L448.4 539.6M439.5 544.6L438.0 544.7M438.0 544.7L435.2 537.1M448.4 539.6L444.3 533.3M444.3 533.3L437.5 533.4M435.2 537.1L437.5 533.4M438.3 558.5L435.8 546.8M438.3 558.5L447.1 557.5M447.1 557.5L446.6 552.5M446.6 552.5L439.5 544.6M435.8 546.8L438.0 544.7M435.9 528.8L437.5 533.4M438.3 558.5L436.8 560.1M436.8 560.1L432.2 558.9M436.8 560.1L436.6 564.1M438.2 567.3L434.5 574.7M438.2 567.3L436.6 564.1M451.2 545.9L456.1 549.4M451.2 545.9L449.0 539.7M449.0 539.7L453.5 537.4M456.1 549.4L457.3 548.5M457.3 548.5L460.3 539.3M453.5 537.4L457.4 536.7M457.4 536.7L460.3 539.3M446.6 552.5L451.2 545.9M448.4 539.6L449.0 539.7M516.2 575.4L503.9 567.6M501.4 570.2L501.7 568.1M503.9 567.6L501.7 568.1M499.6 483.3L494.0 483.0M503.7 486.1L499.6 483.3M503.7 486.1L508.9 482.8M508.9 482.8L514.1 484.4M514.1 484.4L517.4 482.5M526.2 485.9L530.6 488.9M536.8 485.3L530.6 488.9M536.8 485.3L536.4 477.0M526.2 485.9L523.6 486.6M523.6 486.6L517.4 482.5M601.2 575.0L595.7 565.0M598.9 562.6L595.7 565.0M599.0 558.5L598.9 562.6M535.0 560.4L535.2 564.0M535.0 560.4L530.6 559.6M527.1 567.2L535.2 564.0M527.1 567.2L523.8 564.7M530.6 559.6L523.8 564.7M506.3 549.3L508.2 549.5M506.3 549.3L501.2 551.1M508.2 549.5L509.2 555.1M509.2 555.1L503.6 557.4M503.6 557.4L499.6 554.6M501.2 551.1L499.6 554.6M516.9 557.1L512.0 558.1M516.9 557.1L522.1 560.8M517.7 569.2L523.5 564.7M517.7 569.2L511.0 563.0M511.0 563.0L512.0 558.1M523.5 564.7L522.1 560.8M527.5 550.4L527.0 554.3M527.5 550.4L520.8 548.5M520.8 548.5L516.9 557.1M527.0 554.3L522.1 560.8M503.9 567.6L511.0 563.0M499.8 566.1L503.6 557.4M499.8 566.1L501.7 568.1M509.2 555.1L512.0 558.1M530.6 559.6L527.0 554.3M523.8 564.7L523.5 564.7M509.0 540.6L508.6 549.0M509.0 540.6L513.7 538.8M508.6 549.0L519.7 547.1M515.2 539.1L519.5 543.8M515.2 539.1L513.7 538.8M519.5 543.8L519.7 547.1M520.8 548.5L519.7 547.1M508.2 549.5L508.6 549.0M432.8 487.6L438.5 490.8M438.5 490.8L438.8 494.8M438.8 494.8L437.7 495.8M438.2 567.3L445.4 570.1M465.3 555.6L466.0 552.4M465.3 555.6L455.9 554.9M455.9 554.9L456.1 549.4M457.3 548.5L464.2 548.6M466.0 552.4L464.2 548.6M460.3 539.3L465.9 541.3M464.2 548.6L465.9 541.3M473.6 565.6L473.3 566.2M473.6 565.6L482.0 566.7M474.9 576.1L473.3 566.2M482.0 566.7L482.3 575.4M580.1 555.2L586.7 548.4M580.1 555.2L588.5 558.2M591.2 554.4L588.5 558.2M591.2 554.4L587.9 548.2M587.9 548.2L586.7 548.4M599.0 558.5L597.4 553.7M597.4 553.7L591.2 554.4M589.9 565.7L595.7 565.0M589.9 565.7L588.5 558.2M577.0 557.5L570.5 560.1M577.0 557.5L579.2 562.7M579.2 562.7L572.5 568.9M570.5 560.1L572.5 568.9M572.1 571.0L572.5 568.9M572.1 571.0L565.9 568.4M565.9 568.4L565.2 564.9M570.5 560.1L568.6 559.8M568.6 559.8L565.2 564.9M565.9 568.4L560.4 572.2M538.0 567.7L535.4 571.8M538.0 567.7L547.2 567.8M547.2 567.8L547.4 571.7M527.1 567.2L529.3 573.1M535.2 564.0L538.0 567.7M527.5 550.4L531.8 548.4M535.0 560.4L537.3 557.1M534.3 549.0L531.8 548.4M534.3 549.0L536.0 551.0M536.0 551.0L537.3 557.1M457.4 536.7L459.5 531.6M465.9 541.3L467.1 541.0M467.1 541.0L469.5 531.9M469.5 531.9L459.5 531.6M477.0 511.8L481.1 514.5M477.0 511.8L473.7 515.4M481.1 514.5L483.9 519.1M473.7 515.4L474.6 522.2M483.9 519.1L480.1 523.6M474.6 522.2L480.1 523.6M494.2 556.7L499.6 554.6M494.2 556.7L492.4 547.9M501.2 551.1L494.0 546.0M494.0 546.0L492.4 547.9M477.7 506.5L477.0 511.8M477.7 506.5L482.2 506.1M481.1 514.5L487.3 510.4M482.2 506.1L487.3 510.4M487.4 500.4L491.7 500.9M487.4 500.4L482.2 506.1M492.9 512.7L487.3 510.4M492.9 512.7L493.6 507.1M493.6 507.1L491.7 500.9M487.4 500.4L484.2 496.2M496.2 495.7L491.7 500.9M496.2 495.7L491.5 489.8M484.2 496.2L491.5 489.8M503.7 486.1L503.4 495.6M494.0 483.0L491.0 487.7M496.2 495.7L503.4 495.6M491.0 487.7L491.5 489.8M491.0 487.7L485.0 486.5M483.0 477.3L485.0 486.5M568.6 532.5L572.4 533.0M568.6 532.5L564.2 529.9M564.2 529.9L563.3 522.2M563.3 522.2L566.9 520.5M570.0 520.4L566.9 520.5M570.0 520.4L572.8 532.5M572.8 532.5L572.4 533.0M555.8 531.3L564.2 529.9M555.8 531.3L554.8 533.3M568.6 532.5L560.8 538.4M560.8 538.4L554.8 533.3M540.5 541.7L537.6 539.1M540.5 541.7L534.3 549.0M531.8 548.4L529.8 540.9M537.6 539.1L529.8 540.9M519.5 543.8L527.4 536.7M527.4 536.7L529.8 540.9M514.1 484.4L514.7 492.8M503.4 495.6L503.5 495.6M503.5 495.6L510.0 495.7M510.0 495.7L514.7 492.8M523.6 486.6L520.4 494.4M514.7 492.8L520.4 494.4M562.4 512.3L558.6 512.5M562.4 512.3L566.9 520.5M563.3 522.2L558.3 521.1M558.6 512.5L558.3 521.1M555.8 531.3L554.5 523.7M554.8 533.3L553.5 534.1M553.5 534.1L543.7 531.3M543.7 531.3L544.3 523.2M544.3 523.2L549.3 521.6M549.3 521.6L554.5 523.7M554.5 523.7L558.3 521.1M589.6 572.5L589.8 565.8M582.6 565.9L576.6 575.7M582.6 565.9L589.8 565.8M589.9 565.7L589.8 565.8M579.2 562.7L582.6 565.9M578.0 555.5L580.1 555.2M578.0 555.5L577.0 557.5M579.9 512.3L583.4 519.4M579.9 512.3L574.0 513.3M573.0 517.2L574.0 513.3M573.0 517.2L580.5 523.9M580.5 523.9L583.4 519.4M565.8 510.7L562.4 512.3M565.8 510.7L572.4 511.2M572.4 511.2L574.0 513.3M570.0 520.4L573.0 517.2M581.4 530.1L572.8 532.5M581.4 530.1L580.5 523.9M590.4 519.0L583.4 519.4M590.4 519.0L587.1 530.7M581.4 530.1L581.9 530.3M581.9 530.3L586.7 530.9M586.7 530.9L587.1 530.7M590.4 519.0L592.0 517.4M592.0 517.4L600.2 522.3M600.2 522.3L597.2 530.9M587.1 530.7L597.2 530.9M437.7 495.8L435.6 506.7M435.6 506.7L433.4 506.1M430.9 525.1L442.8 519.6M442.8 519.6L434.5 515.8M444.3 533.3L446.3 522.9M453.5 537.4L448.9 522.7M448.9 522.7L446.3 522.9M435.9 528.8L446.0 522.7M442.8 519.6L443.3 519.7M443.3 519.7L446.0 522.7M446.3 522.9L446.0 522.7M447.9 566.7L458.0 568.6M447.9 566.7L448.2 558.2M448.2 558.2L453.3 557.6M453.3 557.6L459.9 566.5M458.0 568.6L460.0 567.2M459.9 566.5L460.0 567.2M445.4 570.1L447.9 566.7M447.1 557.5L448.2 558.2M455.9 554.9L453.3 557.6M465.3 555.6L465.6 556.2M465.6 556.2L459.9 566.5M473.6 565.6L473.7 561.0M465.6 556.2L473.7 561.0M473.3 566.2L462.3 568.3M462.3 568.3L460.0 567.2M489.1 569.4L482.1 566.6M489.1 569.4L493.9 563.3M482.1 566.6L486.3 559.2M486.3 559.2L492.7 560.9M493.9 563.3L492.7 560.9M482.0 566.7L482.1 566.6M488.5 573.9L489.1 569.4M499.8 566.1L493.9 563.3M477.6 556.6L473.7 561.0M477.6 556.6L483.0 556.4M483.0 556.4L486.3 559.2M494.2 556.7L492.7 560.9M483.0 556.4L486.3 548.6M492.4 547.9L486.3 548.6M548.6 552.6L543.7 558.9M548.6 552.6L555.6 561.9M543.7 558.9L547.3 567.7M547.3 567.7L554.6 564.4M554.6 564.4L555.4 562.9M555.6 561.9L555.4 562.9M548.7 550.3L548.6 552.6M548.7 550.3L536.0 551.0M537.3 557.1L543.7 558.9M547.2 567.8L547.3 567.7M560.4 572.2L554.6 564.4M565.2 564.9L555.4 562.9M464.8 512.5L465.1 513.0M464.8 512.5L454.1 514.6M465.1 513.0L463.2 521.8M458.8 524.3L462.3 522.7M458.8 524.3L452.5 521.6M463.2 521.8L462.3 522.7M454.1 514.6L452.5 521.6M477.1 505.8L464.4 504.6M477.1 505.8L477.7 506.5M464.4 504.6L464.8 512.5M473.7 515.4L465.1 513.0M474.6 522.2L473.9 522.8M473.9 522.8L463.2 521.8M469.5 531.9L470.2 531.2M470.2 531.2L462.3 522.7M459.5 531.6L458.8 524.3M448.9 522.7L452.5 521.6M470.2 531.2L471.0 530.9M471.0 530.9L473.9 522.8M492.9 512.7L492.9 512.7M492.9 512.7L491.9 516.4M483.9 519.1L491.0 517.5M491.9 516.4L491.0 517.5M480.1 523.6L481.8 526.8M481.8 526.8L491.4 528.0M491.0 517.5L491.4 528.0M477.6 556.6L474.8 548.5M486.3 548.6L485.4 547.7M485.4 547.7L474.8 548.5M466.0 552.4L474.7 548.3M467.1 541.0L473.9 543.4M473.9 543.4L474.7 548.3M474.8 548.5L474.7 548.3M503.5 495.6L503.6 500.5M510.0 495.7L514.7 503.9M514.7 503.9L511.6 506.9M511.6 506.9L503.6 500.5M493.6 507.1L502.6 503.4M502.6 503.4L503.6 500.5M572.0 541.4L572.3 540.7M572.0 541.4L574.8 548.9M572.3 540.7L581.2 541.1M574.8 548.9L574.9 548.9M574.9 548.9L581.6 545.7M581.6 545.7L582.0 541.8M582.0 541.8L581.2 541.1M581.9 530.3L581.2 541.1M572.4 533.0L572.3 540.7M578.0 555.5L574.9 548.9M586.7 548.4L581.6 545.7M587.9 548.2L590.9 543.5M590.9 543.5L588.4 540.5M588.4 540.5L582.0 541.8M586.7 530.9L588.4 540.5M560.8 538.4L562.0 544.3M572.0 541.4L562.1 544.3M562.1 544.3L562.0 544.3M574.8 548.9L563.5 553.1M562.1 544.3L563.5 553.1M568.6 559.8L563.0 554.4M563.5 553.1L563.0 554.4M555.6 561.9L561.7 555.0M561.7 555.0L563.0 554.4M551.9 538.8L552.5 545.2M551.9 538.8L542.9 539.2M541.5 541.5L542.9 539.2M541.5 541.5L549.7 548.6M552.5 545.2L550.0 548.4M549.7 548.6L550.0 548.4M553.5 534.1L551.9 538.8M562.0 544.3L552.5 545.2M543.7 531.3L543.7 531.4M543.7 531.4L542.9 539.2M540.5 541.7L541.5 541.5M537.6 539.1L534.0 532.3M543.7 531.4L534.0 532.3M548.7 550.3L549.7 548.6M561.7 555.0L550.0 548.4M527.6 534.5L530.6 530.9M527.6 534.5L520.0 532.9M530.5 530.1L530.6 530.9M530.5 530.1L527.7 522.6M520.0 532.9L517.5 529.3M517.5 529.3L523.9 521.4M523.9 521.4L527.7 522.6M527.4 536.7L527.6 534.5M534.0 532.3L530.6 530.9M515.2 539.1L520.0 532.9M544.3 523.2L542.4 522.1M542.4 522.1L530.5 530.1M511.3 528.1L511.2 528.2M511.3 528.1L517.5 529.3M511.2 528.2L513.7 538.8M592.8 483.5L581.9 484.1M521.8 496.2L518.5 503.7M521.8 496.2L525.1 496.8M525.1 496.8L527.6 505.4M527.6 505.4L518.6 503.9M518.6 503.9L518.5 503.7M514.7 503.9L518.5 503.7M520.4 494.4L521.8 496.2M530.6 488.9L530.4 494.9M530.4 494.9L525.1 496.8M599.8 535.2L592.4 543.4M592.4 543.4L600.0 549.3M597.2 530.9L599.8 534.6M599.8 534.6L599.8 535.2M590.9 543.5L592.4 543.4M597.4 553.7L600.0 549.3M435.8 506.8L436.3 508.4M435.8 506.8L444.8 503.3M436.3 508.4L443.9 513.1M444.8 503.3L447.1 509.2M443.9 513.1L447.1 509.2M435.6 506.7L435.8 506.8M434.5 515.8L436.3 508.4M438.8 494.8L445.8 499.7M445.8 499.7L445.9 500.1M445.9 500.1L444.8 503.3M443.3 519.7L443.9 513.1M452.7 510.5L447.1 509.2M452.7 510.5L454.1 514.6M464.3 504.5L465.1 499.0M464.3 504.5L456.8 504.7M465.1 499.0L456.4 492.9M456.8 504.7L454.3 502.1M454.3 502.1L455.9 493.7M456.4 492.9L455.9 493.7M464.4 504.6L464.3 504.5M452.7 510.5L456.8 504.7M445.9 500.1L454.3 502.1M445.8 499.7L447.4 497.2M447.4 497.2L455.9 493.7M481.2 488.9L476.7 487.3M481.2 488.9L482.3 495.4M482.3 495.4L477.1 498.2M476.7 487.3L473.5 489.3M473.5 489.3L473.2 495.4M477.1 498.2L473.2 495.4M476.4 479.3L476.7 487.3M485.0 486.5L481.2 488.9M484.2 496.2L482.3 495.4M477.1 505.8L477.1 498.2M467.1 478.0L467.8 487.0M467.8 487.0L473.5 489.3M465.5 498.5L465.5 488.8M465.5 498.5L473.2 495.4M467.8 487.0L465.5 488.8M465.5 498.5L465.1 499.0M458.1 476.5L457.8 488.0M448.4 488.1L456.1 490.0M448.4 488.1L445.4 485.2M457.8 488.0L456.1 490.0M445.4 485.2L445.4 484.5M465.5 488.8L457.8 488.0M447.4 497.2L448.4 488.1M456.4 492.9L456.1 490.0M438.5 490.8L445.4 485.2M492.9 529.9L499.9 528.9M492.9 529.9L490.6 536.4M490.6 536.4L495.2 542.6M504.0 537.4L498.2 541.9M504.0 537.4L503.7 531.5M498.2 541.9L495.2 542.6M503.7 531.5L499.9 528.9M491.9 516.4L500.8 522.8M500.8 522.8L499.9 528.9M491.4 528.0L492.9 529.9M506.3 549.3L498.2 541.9M509.0 540.6L504.0 537.4M511.2 528.2L503.7 531.5M494.0 546.0L495.2 542.6M488.5 536.8L482.6 540.5M488.5 536.8L480.8 530.3M482.6 540.5L478.0 539.7M478.0 539.7L477.1 534.1M477.1 534.1L480.8 530.3M485.4 547.7L482.6 540.5M490.6 536.4L488.5 536.8M481.8 526.8L480.8 530.3M473.9 543.4L478.0 539.7M471.0 530.9L477.1 534.1M512.0 512.1L510.4 510.9M512.0 512.1L515.1 519.2M510.4 510.9L504.3 512.7M504.9 519.1L511.2 522.9M504.9 519.1L504.2 512.8M504.2 512.8L504.3 512.7M511.2 522.9L515.1 519.2M520.3 510.8L512.0 512.1M520.3 510.8L518.6 503.9M511.6 506.9L510.4 510.9M520.3 510.8L522.0 512.3M521.6 519.1L522.0 512.3M521.6 519.1L515.1 519.2M502.6 503.4L504.3 512.7M511.3 528.1L511.2 522.9M500.8 522.8L504.9 519.1M492.9 512.7L504.2 512.8M521.6 519.1L523.9 521.4M591.8 502.2L601.3 508.3M591.8 502.2L588.5 510.6M588.5 510.6L591.7 514.0M591.7 514.0L601.3 508.4M583.0 510.1L588.5 510.6M583.0 510.1L581.1 501.5M591.2 499.1L591.8 502.2M591.2 499.1L582.0 500.4M581.1 501.5L582.0 500.4M583.0 510.1L579.9 512.3M592.0 517.4L591.7 514.0M589.4 491.9L591.9 497.8M589.4 491.9L595.3 486.3M591.9 497.8L600.8 495.6M598.8 486.6L595.3 486.3M598.8 486.6L601.1 495.1M591.2 499.1L591.9 497.8M592.8 483.5L595.3 486.3M582.0 500.4L580.8 496.0M589.4 491.9L582.4 487.6M580.8 496.0L582.4 487.6M581.9 484.1L581.2 485.3M582.4 487.6L581.2 485.3M532.4 506.9L538.9 518.1M532.4 506.9L530.1 507.8M529.9 508.3L531.5 518.9M529.9 508.3L530.1 507.8M531.5 518.9L538.9 518.1M522.0 512.3L529.9 508.3M527.7 522.6L531.5 518.9M527.6 505.4L530.1 507.8M542.4 522.1L539.3 518.2M539.3 518.2L538.9 518.1M563.9 503.9L557.6 503.7M563.9 503.9L565.8 510.7M558.6 512.5L556.5 510.6M557.6 503.7L556.5 510.6M549.3 521.6L550.3 511.9M556.5 510.6L550.3 511.9M539.3 518.2L541.8 512.8M532.4 506.9L536.0 504.4M536.0 504.4L541.8 512.8M557.6 503.7L555.0 498.8M555.0 498.8L546.3 502.3M550.3 511.9L548.1 510.6M546.3 502.3L548.1 510.6M541.8 512.8L548.1 510.6M557.3 482.7L553.1 488.4M557.3 482.7L564.3 484.5M556.1 494.9L555.0 493.6M556.1 494.9L562.4 493.2M553.1 488.4L555.0 493.6M564.3 484.5L562.4 493.2M564.3 484.5L565.0 484.0M565.0 484.0L571.4 483.0M581.2 485.3L575.5 485.8M571.4 483.0L575.5 485.8M553.1 488.4L550.3 486.9M547.7 482.7L550.3 486.9M536.8 485.3L539.5 487.6M547.7 482.7L539.5 487.6M545.9 502.2L536.5 503.5M545.9 502.2L543.8 493.7M543.8 493.7L542.0 491.8M534.9 497.8L536.5 503.5M534.9 497.8L541.3 491.6M541.3 491.6L542.0 491.8M536.0 504.4L536.5 503.5M546.3 502.3L545.9 502.2M556.1 494.9L555.0 498.8M555.0 493.6L543.8 493.7M550.3 486.9L542.0 491.8M530.4 494.9L534.9 497.8M539.5 487.6L541.3 491.6M566.0 495.0L572.8 491.0M566.0 495.0L568.4 500.6M568.4 500.6L572.4 502.6M574.9 495.5L572.8 491.0M574.9 495.5L573.0 502.3M572.4 502.6L573.0 502.3M562.4 493.2L566.0 495.0M575.5 485.8L572.8 491.0M563.9 503.9L568.4 500.6M572.4 511.2L572.4 502.6M580.8 496.0L574.9 495.5M581.1 501.5L573.0 502.3M631.4 740.0L625.7 743.3M631.4 740.0L635.1 748.1M625.7 743.3L625.5 743.9M625.5 743.9L625.5 747.4M635.1 748.1L632.7 749.3M632.7 749.3L626.4 748.8M632.7 749.3L633.9 755.3M583.2 691.3L590.7 691.3M583.2 691.3L582.6 688.7M590.7 691.3L588.8 684.8M582.6 688.7L588.8 684.8M541.1 637.2L546.1 635.2M541.1 637.2L538.3 643.0M546.1 635.2L548.0 643.8M548.0 643.8L540.3 644.2M540.3 644.2L538.3 643.0M536.0 642.9L534.1 641.3M536.0 642.9L538.3 643.0M548.2 643.9L554.2 640.2M548.2 643.9L548.0 643.8M536.0 642.9L532.5 651.2M532.5 651.2L533.5 651.8M540.3 644.2L540.5 651.5M533.5 651.8L540.5 651.5M648.2 737.3L646.1 734.7M648.2 737.3L654.4 736.9M646.1 734.7L647.1 729.5M656.5 732.7L654.4 736.9M656.5 732.7L654.3 728.9M647.1 729.5L654.3 728.9M632.7 721.8L630.0 718.9M632.7 721.8L638.3 721.2M639.8 712.5L631.5 715.0M639.8 712.5L638.5 721.0M630.0 718.9L631.5 715.0M638.5 721.0L638.3 721.2M631.3 726.9L632.7 721.8M631.3 726.9L631.5 727.7M638.6 729.6L631.5 727.7M638.6 729.6L639.5 728.5M639.5 728.5L638.3 721.2M635.1 748.1L639.6 747.7M633.9 755.3L640.0 753.7M639.6 747.7L640.4 748.9M640.0 753.7L640.4 748.9M638.3 734.5L632.4 736.0M638.3 734.5L640.2 736.0M640.2 736.0L640.1 743.0M640.1 743.0L631.7 739.7M631.7 739.7L632.4 736.0M638.6 729.6L638.3 734.5M631.5 727.7L629.7 732.5M629.7 732.5L632.4 736.0M639.5 728.5L646.1 728.3M646.1 734.7L640.2 736.0M647.1 729.5L646.1 728.3M631.4 740.0L631.7 739.7M639.6 747.7L640.5 743.8M640.5 743.8L640.1 743.0M629.7 732.5L625.5 732.9M625.5 732.9L622.5 736.5M625.7 743.3L622.5 736.5M648.2 737.3L647.1 741.7M640.5 743.8L646.7 742.1M647.1 741.7L646.7 742.1M683.2 747.8L680.4 750.7M683.2 747.8L681.3 742.2M680.4 750.7L674.5 746.4M674.5 746.4L675.1 743.0M681.3 742.2L675.1 743.0M680.7 759.2L677.2 760.6M680.7 759.2L681.7 756.2M680.5 754.0L681.7 756.2M680.5 754.0L675.8 753.7M677.2 760.6L670.6 756.8M675.8 753.7L670.6 756.8M679.3 768.3L684.2 764.0M679.3 768.3L674.7 765.8M684.2 764.0L680.7 759.2M674.7 765.8L677.2 760.6M680.4 750.7L680.5 754.0M672.9 747.9L674.5 746.4M672.9 747.9L675.8 753.7M698.0 774.8L696.1 768.5M696.1 768.5L696.4 768.1M696.4 768.1L700.4 766.1M583.2 691.3L582.7 692.6M590.7 691.3L590.9 691.4M588.2 697.7L590.9 691.4M588.2 697.7L583.5 695.8M582.7 692.6L583.5 695.8M669.1 740.6L674.3 741.7M669.1 740.6L668.1 733.8M675.4 735.3L674.3 741.7M668.1 733.8L674.1 732.1M581.0 686.8L581.6 679.3M581.0 686.8L576.4 687.1M576.4 687.1L574.4 685.0M574.4 685.0L580.4 679.1M580.4 679.1L581.6 679.3M582.6 688.7L581.0 686.8M574.7 694.4L582.7 692.6M574.7 694.4L573.9 694.0M573.9 694.0L573.2 692.1M573.2 692.1L576.4 687.1M561.2 695.5L563.6 695.6M561.2 695.5L556.5 691.8M563.7 685.4L556.9 687.8M563.7 685.4L564.5 693.6M564.5 693.6L563.6 695.6M556.5 691.8L556.9 687.8M569.1 697.9L573.9 694.0M569.1 697.9L565.3 697.4M565.3 697.4L563.6 695.6M570.4 690.3L573.2 692.1M570.4 690.3L564.5 693.6M541.4 652.4L540.5 657.6M541.4 652.4L547.8 651.8M547.4 659.4L540.5 657.6M547.4 659.4L548.0 658.3M548.0 658.3L547.8 651.8M548.2 643.9L550.1 649.1M559.5 642.7L555.6 649.3M555.6 649.3L554.2 650.2M554.2 650.2L550.1 649.1M540.5 651.5L541.4 652.4M547.8 651.8L550.1 649.1M555.6 649.3L563.8 650.5M563.8 650.5L564.5 649.6M543.0 665.2L540.3 657.7M543.0 665.2L535.3 661.2M540.3 657.7L536.5 659.3M536.5 659.3L535.3 661.1M535.3 661.2L535.3 661.1M547.4 659.4L547.8 663.7M547.8 663.7L543.9 666.2M543.9 666.2L543.0 665.2M540.5 657.6L540.3 657.7M543.9 666.2L543.2 667.6M543.2 667.6L536.8 670.7M536.8 670.7L533.4 664.2M533.4 664.2L535.3 661.2M533.5 651.8L536.5 659.3M693.9 749.1L689.1 745.6M693.9 749.1L692.0 754.7M692.0 754.7L689.6 755.1M689.1 745.6L686.2 747.9M686.2 747.9L688.2 754.8M689.6 755.1L688.2 754.8M683.2 747.8L686.2 747.9M681.7 756.2L688.2 754.8M688.2 764.3L687.2 765.3M688.2 764.3L689.6 755.1M687.2 765.3L684.2 764.0M517.4 663.4L522.1 666.5M522.1 666.5L527.0 663.2M527.0 663.2L529.7 664.5M529.7 664.5L527.2 673.5M536.8 670.7L536.7 671.0M536.7 671.0L527.3 673.7M529.7 664.5L533.4 664.2M536.7 671.1L536.7 671.0M536.7 671.1L532.4 678.8M654.4 736.9L655.5 739.4M647.1 741.7L651.6 743.3M655.5 739.4L651.6 743.3M639.9 712.4L646.6 712.8M639.9 712.4L639.8 712.5M646.6 712.8L646.6 712.8M638.5 721.0L645.6 722.1M646.6 712.8L645.6 722.1M646.1 728.3L646.0 722.6M645.6 722.1L646.0 722.6M639.9 712.4L638.2 708.4M631.5 715.0L630.5 712.7M633.8 707.2L638.2 708.4M633.8 707.2L631.5 707.7M631.5 707.7L630.5 712.7M590.9 691.4L595.9 691.7M588.8 684.8L589.2 684.2M589.2 684.2L594.5 684.2M595.9 691.7L594.5 684.2M616.3 733.3L618.0 735.9M616.3 733.3L616.8 728.9M625.5 732.9L622.1 727.2M622.5 736.5L618.0 735.9M616.8 728.9L619.2 726.3M619.2 726.3L622.1 727.2M631.3 726.9L625.0 725.7M625.0 725.7L622.1 727.2M640.0 753.7L640.9 755.6M646.7 742.1L648.9 748.9M651.6 743.3L653.4 748.3M653.4 748.3L648.9 748.9M640.4 748.9L647.3 750.2M647.3 750.2L648.9 748.9M672.9 747.9L670.2 749.3M670.6 756.8L670.1 756.7M670.2 749.3L670.1 756.7M681.3 742.2L682.8 740.6M675.1 743.0L674.3 741.7M667.0 779.8L672.6 775.6M674.4 784.5L672.6 775.6M682.2 789.5L680.6 782.8M680.6 782.8L687.9 782.5M674.4 784.5L680.2 782.2M680.2 782.2L680.6 782.8M703.2 761.8L703.3 756.0M703.2 761.8L700.5 763.1M700.5 763.1L696.4 758.6M701.4 754.9L696.4 758.3M701.4 754.9L703.3 756.0M696.4 758.3L696.4 758.6M693.7 762.5L696.4 768.1M693.7 762.5L696.4 758.6M700.4 766.1L700.5 763.1M692.0 754.7L696.4 758.3M688.2 764.3L693.7 762.5M633.6 699.9L633.8 707.2M633.6 699.9L627.6 701.1M631.5 707.7L626.6 705.4M627.6 701.1L626.6 705.4M630.5 712.7L625.1 711.8M625.1 711.8L625.1 706.2M625.1 706.2L626.6 705.4M627.6 701.1L624.7 695.5M624.7 695.5L618.5 702.7M625.1 706.2L622.0 705.9M622.0 705.9L618.5 702.7M592.6 718.7L590.8 721.0M592.6 718.7L597.9 722.0M592.6 718.7L593.6 715.2M601.3 717.9L593.6 715.2M601.3 717.9L602.5 720.8M597.9 722.0L602.5 720.8M574.7 694.4L577.3 700.5M583.5 695.8L581.8 699.2M581.8 699.2L577.3 700.5M588.2 697.7L590.3 700.3M590.3 700.3L587.3 705.1M587.3 705.1L585.8 705.4M581.8 699.2L585.8 705.4M553.8 693.3L556.5 691.8M553.7 684.5L556.9 687.8M553.7 684.5L548.3 685.9M532.5 651.2L528.7 651.8M528.7 651.8L528.4 651.7M535.3 661.1L528.7 656.2M528.7 651.8L528.7 656.2M527.0 663.2L526.2 660.7M528.7 656.2L526.2 660.7M654.2 720.6L654.1 721.0M654.1 721.0L655.2 725.9M655.2 725.9L660.9 725.4M653.6 716.6L654.2 720.6M646.0 722.6L654.1 721.0M654.3 728.9L655.2 725.9M666.4 733.2L666.5 725.6M666.4 733.2L663.1 734.1M660.8 732.9L663.1 734.1M660.8 732.9L662.5 726.2M668.1 733.8L666.4 733.2M656.5 732.7L660.8 732.9M660.9 725.4L662.5 726.2M570.4 690.3L568.3 685.3M574.4 685.0L571.8 683.3M571.8 683.3L568.3 685.3M563.7 685.4L564.3 684.6M568.3 685.3L564.3 684.6M584.8 673.3L583.6 677.9M584.8 673.3L595.3 677.5M583.6 677.9L587.4 680.5M587.4 680.5L595.3 677.5M595.3 677.5L595.3 677.5M581.6 679.3L583.6 677.9M589.2 684.2L587.4 680.5M594.5 684.2L595.0 683.5M595.0 683.5L595.3 677.5M595.0 683.5L603.3 684.0M603.4 683.9L603.3 684.0M603.4 683.9L603.6 677.1M596.3 676.4L603.6 677.1M596.3 676.4L595.3 677.5M551.7 672.3L552.1 671.0M551.7 672.3L557.8 677.6M552.1 671.0L561.1 670.4M561.1 670.4L559.6 677.2M557.8 677.6L559.6 677.2M547.8 663.7L550.1 664.8M547.4 674.7L543.2 667.6M547.4 674.7L551.7 672.3M550.1 664.8L552.1 670.1M552.1 670.1L552.1 671.0M554.4 681.3L553.7 684.5M554.4 681.3L557.8 677.6M564.3 684.6L563.0 679.4M563.0 679.4L559.6 677.2M589.5 668.8L584.8 672.7M584.8 672.7L582.2 670.6M582.2 670.6L580.5 665.5M580.5 665.5L582.6 661.8M552.1 670.1L559.6 665.3M561.1 670.4L561.5 669.7M561.5 669.7L559.6 665.3M657.3 741.1L658.3 747.6M657.3 741.1L662.8 739.1M662.8 739.1L665.7 742.3M665.7 742.3L664.5 747.1M658.3 747.6L662.6 748.1M662.6 748.1L664.5 747.1M655.5 739.4L657.3 741.1M655.9 749.1L653.4 748.3M655.9 749.1L658.3 747.6M663.1 734.1L662.8 739.1M669.1 740.6L665.7 742.3M670.2 749.3L664.5 747.1M601.3 717.9L602.9 711.9M593.6 715.2L593.1 713.6M593.1 713.6L598.5 708.6M602.9 711.9L598.5 708.6M592.7 713.4L593.1 713.6M592.7 713.4L589.4 706.7M589.4 706.7L598.4 705.3M598.5 708.6L598.4 705.3M616.8 720.7L618.6 723.4M616.8 720.7L617.8 715.0M618.6 723.4L626.7 719.1M617.8 715.0L623.1 715.0M623.1 715.0L626.9 718.9M626.9 718.9L626.7 719.1M616.8 728.9L609.7 727.0M619.2 726.3L618.6 723.4M609.7 727.0L614.3 721.2M614.3 721.2L616.8 720.7M625.0 725.7L626.7 719.1M625.1 711.8L623.1 715.0M616.5 713.3L622.0 705.9M616.5 713.3L617.8 715.0M630.0 718.9L626.9 718.9M613.7 733.7L616.3 733.3M618.0 735.9L615.4 740.7M625.5 743.9L617.6 742.5M640.9 755.6L645.4 757.7M647.3 750.2L648.2 756.8M645.4 757.7L648.2 756.8M678.9 776.0L680.0 777.7M678.9 776.0L680.3 773.3M680.0 777.7L688.8 777.5M680.3 773.3L688.4 769.7M688.5 769.8L688.4 769.7M688.5 769.8L690.4 776.1M690.4 776.1L688.8 777.5M680.2 782.2L680.0 777.7M673.1 775.2L672.7 775.5M673.1 775.2L678.9 776.0M672.7 775.5L672.6 775.6M679.3 768.3L680.3 773.3M672.7 766.7L674.7 765.8M672.7 766.7L672.3 769.1M672.3 769.1L673.1 775.2M687.9 782.5L688.8 777.5M687.2 765.3L688.4 769.7M696.1 768.5L688.5 769.8M691.5 776.4L690.4 776.1M618.5 702.7L616.9 702.4M622.1 693.3L612.7 698.2M616.9 702.4L612.7 698.2M602.8 726.1L604.5 723.8M602.8 726.1L605.1 734.2M604.5 723.8L609.1 727.1M609.1 727.1L608.6 732.3M602.5 720.8L604.2 722.2M604.2 722.2L604.5 723.8M609.7 727.0L609.1 727.1M604.2 722.2L608.2 719.1M608.2 719.1L614.3 721.2M613.7 733.7L608.6 732.3M576.8 701.5L575.7 706.8M576.8 701.5L569.7 698.9M569.7 698.9L571.0 707.0M569.1 697.9L569.7 698.9M577.3 700.5L576.8 701.5M577.7 711.2L577.7 708.4M577.7 708.4L583.6 707.5M583.6 707.5L586.1 714.0M585.8 705.4L583.6 707.5M575.7 706.8L577.7 708.4M592.7 713.4L586.1 714.0M587.3 705.1L589.4 706.7M542.3 684.4L540.3 679.2M548.0 685.7L547.6 676.9M540.3 679.2L540.7 678.3M540.7 678.3L546.9 675.8M547.6 676.9L546.9 675.8M548.3 685.9L548.0 685.7M554.4 681.3L547.6 676.9M536.7 671.1L540.7 678.3M547.4 674.7L546.9 675.8M526.2 660.7L521.3 658.4M596.3 676.4L594.9 670.6M584.8 672.7L584.8 673.3M582.2 670.6L576.4 671.6M577.8 665.4L580.5 665.5M577.8 665.4L574.1 669.0M576.4 671.6L574.1 669.0M580.4 679.1L574.5 677.4M576.4 671.6L574.5 677.4M571.8 683.3L573.1 677.8M563.0 679.4L569.3 675.5M569.3 675.5L573.1 677.8M561.5 669.7L568.2 669.9M569.3 675.5L568.2 669.9M574.5 677.4L573.1 677.8M578.5 658.9L575.6 660.0M575.6 660.0L572.0 653.6M574.2 661.9L575.6 660.0M574.2 661.9L577.8 665.4M574.2 661.9L571.9 662.5M572.0 653.6L567.9 658.3M571.9 662.5L567.9 658.3M574.1 669.0L569.9 668.1M571.9 662.5L569.9 668.1M568.2 669.9L569.4 668.4M569.9 668.1L569.4 668.4M557.5 662.0L559.4 663.6M557.5 662.0L556.6 657.4M559.4 663.6L564.2 661.7M556.6 657.4L556.8 656.7M556.8 656.7L563.1 654.6M564.2 661.7L566.7 658.4M563.1 654.6L566.7 658.4M550.1 664.8L557.5 662.0M559.6 665.3L559.4 663.6M548.0 658.3L556.6 657.4M569.4 668.4L564.2 661.7M554.2 650.2L556.8 656.7M563.8 650.5L563.1 654.6M567.9 658.3L566.7 658.4M590.3 700.3L595.5 699.2M595.9 691.7L597.5 692.9M595.5 699.2L597.5 692.9M602.6 690.7L603.3 684.0M602.6 690.7L600.9 692.2M597.5 692.9L600.9 692.2M645.4 757.7L644.5 760.1M609.0 691.5L611.4 684.6M609.0 691.5L611.3 693.6M611.3 693.6L617.4 688.8M602.6 690.7L609.0 691.5M603.4 683.9L611.4 684.6M612.5 698.2L612.7 698.2M612.5 698.2L611.3 693.6M608.2 719.1L610.1 712.8M602.9 711.9L603.2 711.8M603.2 711.8L610.1 712.8M616.5 713.3L612.4 711.3M610.1 712.8L612.4 711.3M616.9 702.4L612.4 711.0M612.4 711.3L612.4 711.0M612.5 698.2L609.2 700.4M612.4 711.0L608.8 705.7M609.2 700.4L608.8 705.7M603.2 711.8L605.8 706.4M605.8 706.4L608.8 705.7M598.4 705.2L602.5 704.7M598.4 705.2L597.9 703.0M597.9 703.0L604.9 698.8M602.5 704.7L607.1 700.1M604.9 698.8L607.1 700.1M598.4 705.3L598.4 705.2M605.8 706.4L602.5 704.7M595.5 699.2L597.9 703.0M600.9 692.2L604.9 698.8M609.2 700.4L607.1 700.1M655.9 749.1L655.2 756.3M648.2 756.8L652.6 758.6M655.2 756.3L652.6 758.5M652.6 758.6L652.6 758.5M670.1 756.7L668.0 758.1M662.6 748.1L663.7 756.0M663.7 756.0L668.0 758.1M655.2 756.3L660.1 757.3M663.7 756.0L660.1 757.3M672.7 766.7L667.4 763.0M668.0 758.1L667.4 763.0M652.5 770.1L650.8 762.8M650.8 762.8L646.3 764.7M652.6 758.6L650.8 762.8M652.6 758.5L658.2 765.3M660.1 757.3L661.1 764.2M658.2 765.3L661.1 764.2M667.4 763.0L664.6 764.9M664.6 764.9L661.1 764.2M672.3 769.1L664.6 770.3M664.6 764.9L664.6 770.3M672.7 775.5L664.4 770.7M664.6 770.3L664.4 770.7M663.2 776.0L661.8 773.4M664.4 770.7L661.8 773.4M655.8 770.1L660.9 773.2M658.2 765.3L655.8 770.1M661.8 773.4L660.9 773.2M488.7 625.5L500.4 627.9M488.7 625.5L489.2 634.1M489.2 634.1L500.0 633.8M468.3 568.5L479.5 571.2M480.3 570.6L479.5 571.2M488.7 625.5L487.4 623.3M487.5 618.6L487.4 623.3M487.5 618.6L502.5 618.4M447.2 646.5L436.9 648.2M447.2 646.5L446.1 638.2M446.1 638.2L438.3 636.2M500.1 648.2L499.9 648.0M489.2 634.1L487.1 635.9M499.9 648.0L496.0 649.1M496.0 649.1L487.1 635.9M462.5 572.7L468.3 568.5M462.5 572.7L460.4 572.0M460.4 572.0L457.2 568.5M462.5 572.7L466.6 580.7M466.6 580.7L471.9 583.0M479.5 571.2L476.4 582.2M476.4 582.2L471.9 583.0M499.1 606.7L492.7 606.7M487.5 618.6L486.6 617.5M492.7 606.7L486.6 617.5M443.1 625.6L444.8 615.5M446.1 638.2L450.4 634.7M450.4 634.7L449.7 629.6M449.7 629.6L443.1 625.6M455.2 617.8L446.0 614.6M455.2 617.8L455.8 620.8M446.0 614.6L444.8 615.5M455.8 620.8L449.7 629.6M455.8 620.8L463.6 628.3M455.9 635.9L457.5 634.9M455.9 635.9L450.4 634.7M463.6 628.3L457.5 634.9M460.0 647.3L466.1 649.5M460.0 647.3L449.7 649.5M466.1 649.5L466.0 650.3M447.2 646.5L449.7 649.5M455.9 635.9L460.0 647.3M480.3 570.6L488.1 571.6M493.7 561.7L488.1 571.6M491.4 581.5L490.1 575.1M491.4 581.5L480.9 584.9M476.4 582.2L480.9 584.9M488.1 571.6L490.1 575.1M492.1 581.9L497.9 581.9M492.1 581.9L491.4 581.5M490.1 575.1L501.0 570.7M497.9 581.9L501.0 591.1M501.0 603.1L496.2 595.2M496.2 595.2L501.0 591.1M482.2 602.3L487.8 602.8M482.2 602.3L481.2 594.8M487.8 602.8L493.7 594.5M482.0 593.1L481.2 594.8M482.0 593.1L492.2 592.7M492.2 592.7L493.7 594.5M479.9 604.9L479.9 614.3M479.9 604.9L482.2 602.3M492.7 606.7L487.8 602.8M486.6 617.5L480.5 615.1M479.9 614.3L480.5 615.1M496.2 595.2L493.7 594.5M471.9 583.0L470.3 594.3M480.9 584.9L482.0 593.1M470.3 594.3L481.2 594.8M492.1 581.9L492.2 592.7M446.0 614.6L445.5 606.5M445.5 606.5L435.3 603.2M468.1 617.5L471.9 614.1M468.1 617.5L459.0 614.3M459.0 614.3L461.0 607.9M471.9 614.1L465.7 604.2M461.0 607.9L465.7 604.2M470.3 594.3L466.3 598.5M479.9 604.9L466.8 602.1M466.3 598.5L466.8 602.1M471.9 614.1L479.9 614.3M465.7 604.2L466.8 602.1M460.4 572.0L450.1 582.2M457.2 568.5L444.1 571.4M450.1 582.2L444.1 571.4M443.0 562.0L442.6 570.7M442.6 570.7L444.1 571.4M466.1 649.5L468.6 647.8M468.6 647.8L479.7 648.6M479.7 648.6L481.4 650.1M487.1 635.9L483.2 636.8M479.7 648.6L483.2 636.8M466.6 580.7L457.0 591.1M450.1 582.2L449.7 584.2M449.7 584.2L457.0 591.1M466.3 598.5L457.1 591.7M457.0 591.1L457.1 591.7M477.4 630.7L473.1 627.9M477.4 630.7L478.7 632.9M478.7 632.9L468.8 644.5M473.1 627.9L469.5 627.9M469.5 627.9L468.3 628.6M468.3 628.6L467.9 640.2M467.9 640.2L468.8 644.5M487.4 623.3L477.4 630.7M480.5 615.1L473.1 627.9M483.2 636.8L478.7 632.9M468.6 647.8L468.8 644.5M468.1 617.5L469.5 627.9M459.0 614.3L455.2 617.8M463.6 628.3L468.3 628.6M457.5 634.9L467.9 640.2M461.0 607.9L450.2 601.9M457.1 591.7L452.8 596.6M452.8 596.6L450.2 601.9M445.5 606.5L448.2 603.0M448.2 603.0L450.2 601.9M441.3 591.3L439.9 592.4M441.3 591.3L445.7 585.4M445.7 585.4L435.8 578.3M452.8 596.6L441.3 591.3M448.2 603.0L439.9 592.4M449.7 584.2L445.7 585.4M912.8 563.7L926.9 564.3M841.8 637.5L822.9 635.9M841.8 637.5L832.2 656.8M964.2 565.5L972.3 561.2M986.5 581.6L1004.2 591.6M986.5 581.6L989.7 572.2M992.7 569.4L989.7 572.2M992.7 569.4L1006.1 566.2M1010.9 572.4L1006.1 566.2M1011.1 586.5L1004.2 591.6M977.2 584.5L978.1 584.9M977.2 584.5L963.2 571.7M963.2 571.7L963.2 571.0M963.2 571.0L964.2 565.5M972.3 561.2L989.7 572.2M978.1 584.9L984.1 583.4M984.1 583.4L986.5 581.6M987.9 553.8L992.7 569.4M1010.3 554.6L1006.1 566.2M1008.9 606.1L1003.3 600.6M1003.3 600.6L1004.2 591.6M907.5 572.4L892.8 564.9M907.5 572.4L912.8 563.7M894.8 555.9L892.8 564.9M878.5 631.7L871.6 648.4M878.5 631.7L888.1 633.7M888.1 633.7L888.5 634.2M890.1 652.6L888.5 634.2M888.5 634.2L903.1 633.5M907.2 648.5L905.0 634.4M905.0 634.4L903.1 633.5M841.8 637.5L845.3 636.8M845.3 636.8L844.7 620.2M834.2 617.1L844.7 620.2M856.1 647.7L860.8 651.1M872.2 628.3L878.5 631.7M872.2 628.3L862.7 634.0M862.7 634.0L855.4 644.1M855.4 644.1L856.1 647.7M871.6 648.4L860.8 651.1M855.4 644.1L845.3 636.8M957.8 602.7L956.5 620.1M957.8 602.7L971.2 603.2M957.6 620.7L956.5 620.1M957.6 620.7L976.1 619.7M971.2 603.2L977.1 609.5M976.1 619.7L977.1 609.5M978.1 584.9L971.2 603.2M984.1 583.4L990.1 605.7M977.1 609.5L990.1 605.7M1003.3 600.6L991.3 606.0M991.3 606.0L990.1 605.7M907.2 648.5L917.8 647.6M905.0 634.4L921.4 631.2M917.8 647.6L921.4 631.2M957.8 602.7L957.0 602.1M977.2 584.5L957.5 590.2M957.5 590.2L957.0 602.1M963.2 571.7L953.7 582.3M957.5 590.2L953.7 582.3M920.9 581.9L923.3 584.3M920.9 581.9L928.7 565.7M923.3 584.3L936.3 588.6M928.7 565.7L938.0 565.6M936.3 588.6L942.4 581.0M942.4 581.0L939.3 568.1M938.0 565.6L939.3 568.1M909.0 580.3L907.5 572.4M909.0 580.3L920.9 581.9M926.9 564.3L928.7 565.7M938.2 602.0L938.2 602.0M938.2 602.0L957.0 602.1M938.2 602.0L936.3 588.6M953.7 582.3L942.4 581.0M963.2 571.0L939.3 568.1M909.0 580.3L902.8 587.6M892.8 564.9L891.6 565.8M902.8 587.6L895.5 590.0M895.5 590.0L886.9 584.9M891.6 565.8L886.9 584.9M838.0 562.0L837.7 570.8M837.7 570.8L828.2 576.9M835.5 596.3L825.5 598.0M835.5 596.3L827.3 579.3M837.6 596.9L834.2 617.1M837.6 596.9L835.5 596.3M837.7 570.8L840.2 573.0M840.2 573.0L845.4 586.5M845.4 586.5L838.7 596.6M838.7 596.6L837.6 596.9M860.5 588.1L858.3 601.0M860.5 588.1L859.6 586.8M845.4 586.5L859.6 586.8M838.7 596.6L851.8 604.4M858.3 601.0L851.8 604.4M844.7 620.2L849.8 617.4M851.8 604.4L849.8 617.4M872.2 628.3L870.5 616.3M862.7 634.0L851.2 617.9M870.5 616.3L851.2 617.9M851.2 617.9L849.8 617.4M1007.1 640.4L1011.5 630.5M991.3 606.0L996.9 622.2M996.9 622.2L1009.7 622.3M956.5 620.1L945.0 625.0M938.2 602.0L935.0 618.4M935.0 618.4L945.0 625.0M906.1 615.7L919.3 619.9M906.1 615.7L904.6 614.4M904.6 614.4L903.9 612.6M903.9 612.6L913.4 599.6M919.3 619.9L919.6 601.0M913.4 599.6L918.3 599.9M918.3 599.9L919.6 601.0M903.1 633.5L906.1 615.7M921.4 631.2L921.7 630.9M923.4 623.3L921.7 630.9M923.4 623.3L919.3 619.9M888.1 633.7L890.5 625.3M890.5 625.3L904.6 614.4M938.2 602.0L919.6 601.0M923.4 623.3L935.0 618.4M923.3 584.3L918.3 599.9M902.8 587.6L913.4 599.6M874.8 563.8L872.4 571.5M874.8 563.8L871.9 556.8M872.4 571.5L861.1 576.1M856.4 556.2L858.3 573.2M861.1 576.1L858.3 573.2M891.6 565.8L874.8 563.8M882.6 585.1L886.9 584.9M882.6 585.1L872.4 571.5M860.5 588.1L875.9 590.4M859.6 586.8L861.1 576.1M875.9 590.4L882.6 585.1M840.2 573.0L858.3 573.2M992.3 625.7L995.9 643.3M992.3 625.7L978.9 625.7M978.2 627.5L987.8 647.4M978.2 627.5L978.9 625.7M987.8 647.4L995.7 643.5M995.7 643.5L995.9 643.3M1007.1 640.4L995.9 643.3M996.9 622.2L992.3 625.7M976.1 619.7L978.9 625.7M957.6 620.7L963.6 634.3M971.6 633.7L963.6 634.3M971.6 633.7L978.2 627.5M921.7 630.9L938.7 644.4M937.8 647.7L938.7 644.4M945.0 625.0L946.4 637.9M938.7 644.4L946.4 637.9M963.6 634.3L956.4 641.7M946.4 637.9L956.4 641.7M971.6 633.7L974.5 650.7M956.4 641.7L960.9 651.8M893.8 603.8L894.1 604.3M893.8 603.8L874.9 606.5M894.1 604.3L887.1 617.5M887.1 617.5L872.3 611.8M874.9 606.5L872.4 609.5M872.3 611.8L872.4 609.5M895.5 590.0L893.8 603.8M903.9 612.6L894.1 604.3M875.9 590.4L874.9 606.5M890.5 625.3L887.1 617.5M870.5 616.3L872.3 611.8M858.3 601.0L872.4 609.5M1009.7 572.8L1004.8 579.6M1007.3 643.9L999.8 654.4M1007.3 643.9L995.3 632.7M1017.0 642.5L1024.2 656.6M1017.0 642.5L1007.3 643.9M1035.3 610.1L1020.3 607.2M1035.3 610.1L1041.2 601.6M1020.3 607.2L1021.2 589.5M1021.2 589.5L1021.7 589.1M1021.7 589.1L1041.4 598.0M1041.2 601.6L1041.4 598.0M1083.0 609.8L1083.1 598.1M1083.1 598.1L1084.7 596.4M1017.0 642.5L1017.4 641.8M996.9 629.4L1005.2 621.2M1017.4 641.8L1014.4 627.1M1005.2 621.2L1014.4 627.1M1083.0 609.8L1081.0 613.8M1086.3 622.6L1081.0 613.8M1088.4 655.6L1088.2 640.9M1033.8 576.0L1024.7 580.3M1033.8 576.0L1037.8 572.1M1019.0 573.2L1024.7 580.3M1021.7 589.1L1024.7 580.3M1043.2 595.8L1041.4 598.0M1043.2 595.8L1033.8 576.0M1054.0 588.7L1043.2 595.8M1054.0 588.7L1051.3 583.1M1051.3 583.1L1037.8 572.1M1009.7 572.8L1019.0 573.2M1004.8 579.6L1017.4 589.5M1021.2 589.5L1017.4 589.5M1088.5 578.4L1090.5 564.5M1082.1 580.9L1084.7 596.4M1082.1 580.9L1088.5 578.4M1059.2 589.6L1061.6 591.4M1059.2 589.6L1069.3 565.0M1061.6 591.4L1080.4 580.0M1080.4 580.0L1071.7 566.7M1054.0 588.7L1059.2 589.6M1041.2 601.6L1051.5 608.3M1065.0 597.0L1061.6 591.4M1065.0 597.0L1064.5 599.9M1051.5 608.3L1064.5 599.9M1051.3 583.1L1058.1 561.5M1065.0 597.0L1083.1 598.1M1082.1 580.9L1080.4 580.0M1005.0 616.7L1009.9 609.7M1009.9 609.7L1002.1 597.1M998.9 596.1L1002.1 597.1M1018.9 608.3L1009.9 609.7M1018.9 608.3L1021.3 621.8M1005.2 621.2L1005.0 616.7M1014.4 627.1L1021.3 621.8M1020.3 607.2L1018.9 608.3M1017.4 589.5L1002.1 597.1M1086.3 622.6L1081.6 630.6M1088.2 640.9L1085.8 639.3M1085.8 639.3L1081.6 630.6M1028.1 636.4L1031.6 624.2M1028.1 636.4L1038.5 640.6M1038.5 640.6L1044.3 623.8M1031.6 624.2L1037.2 620.3M1037.2 620.3L1044.3 623.8M1017.4 641.8L1028.1 636.4M1021.3 621.8L1031.6 624.2M1041.2 653.6L1043.3 647.1M1043.3 647.1L1038.5 640.6M1035.3 610.1L1037.2 620.3M1049.4 643.8L1054.9 639.1M1049.4 643.8L1060.7 656.6M1054.9 639.1L1065.3 640.6M1065.3 640.6L1068.2 645.4M1068.2 645.4L1068.7 648.4M1068.7 648.4L1060.7 656.6M1043.3 647.1L1049.4 643.8M1044.3 623.8L1049.5 624.2M1049.5 624.2L1054.9 639.1M1085.8 639.3L1068.2 645.4M1081.6 630.6L1069.9 630.4M1069.9 630.4L1065.3 640.6M1076.9 655.6L1068.7 648.4M1066.9 622.1L1051.1 623.0M1066.9 622.1L1069.8 615.9M1069.8 615.9L1066.5 610.5M1066.5 610.5L1053.1 613.1M1053.1 613.1L1051.1 623.0M1069.9 630.4L1066.9 622.1M1049.5 624.2L1051.1 623.0M1081.0 613.8L1069.8 615.9M1064.5 599.9L1066.5 610.5M1051.5 608.3L1053.1 613.1M659.3 490.0L671.7 612.0M600.0 537.0L664.7 543.7M632.5 490.0L639.5 541.1M600.0 509.3L635.5 511.6M618.9 490.0L620.4 510.6M600.0 496.8L619.3 496.1M618.7 510.5L622.7 539.3M600.0 521.7L620.7 525.3M620.0 519.7L636.8 521.4M637.1 523.7L662.5 521.5M635.2 509.3L661.3 509.6M646.9 490.0L650.5 509.4M649.0 501.7L660.6 502.9M646.2 509.4L649.3 522.6M646.2 522.9L650.4 542.2M637.9 529.6L647.3 528.0M649.0 536.0L663.9 535.6M600.0 559.7L666.4 560.3M631.3 540.2L629.4 559.9M617.4 538.8L615.5 559.8M600.0 547.8L616.4 549.5M616.4 549.8L630.4 549.1M647.6 541.9L646.9 560.1M631.7 560.0L633.1 612.0M600.0 579.2L632.2 578.0M612.1 559.8L614.2 578.7M600.0 601.2L632.8 600.6M611.0 578.8L611.8 601.0M611.3 586.3L632.4 585.2M614.1 600.9L616.4 612.0M632.6 592.6L669.7 592.3M652.6 560.1L656.8 592.4M632.2 579.3L655.4 581.4M642.8 580.3L645.5 592.5M655.4 581.4L668.8 583.2M645.7 592.5L645.7 612.0M659.1 592.4L661.5 612.0M664.6 542.3L760.0 539.4M728.8 490.0L730.6 540.3M703.1 490.0L704.2 541.1M662.9 525.3L703.8 520.6M687.7 490.0L689.9 522.2M661.5 511.8L689.0 509.6M671.8 490.0L674.8 510.7M680.7 510.3L679.9 523.4M689.0 508.5L703.5 507.0M688.0 522.4L689.3 541.6M673.0 524.2L675.7 542.0M674.5 534.0L688.6 531.6M703.7 515.2L729.7 515.7M716.4 490.0L719.1 515.5M703.3 499.8L717.3 498.6M729.9 521.9L760.0 521.9M729.5 510.8L760.0 508.9M746.6 490.0L747.8 509.6M729.1 497.5L747.0 497.5M747.5 509.7L750.0 521.9M749.5 521.9L748.4 539.7M739.7 521.9L739.4 540.0M708.1 541.0L715.4 612.0M669.3 588.9L713.4 592.3M666.9 564.8L710.2 561.9M694.6 541.4L697.4 562.7M679.3 541.9L683.6 563.6M680.5 563.9L686.3 590.2M668.2 577.6L683.7 578.3M682.3 571.9L711.1 570.6M698.0 562.7L700.1 571.1M698.0 571.2L701.9 591.4M699.7 579.9L712.1 580.4M695.0 590.9L694.2 612.0M711.3 572.0L760.0 575.0M725.9 540.4L724.7 572.8M710.3 562.5L725.1 560.5M738.1 540.1L737.3 573.6M725.4 552.8L737.7 555.0M725.0 563.8L737.5 565.5M737.8 550.8L760.0 550.4M751.2 539.7L749.7 550.6M742.8 573.9L745.9 612.0M713.4 592.7L744.5 593.8M723.2 572.7L726.1 593.2M727.5 593.2L730.4 612.0M744.5 594.6L760.0 594.9M553.7 572.0L561.0 660.0M490.0 611.9L557.1 613.4M522.8 572.0L522.1 612.6M490.0 599.2L522.3 602.2M501.4 572.0L503.1 600.5M490.0 587.1L502.4 588.3M502.5 590.3L522.5 590.3M510.4 572.0L510.9 590.3M504.6 600.6L504.9 612.2M522.6 585.8L555.0 587.9M533.0 572.0L534.9 586.6M536.2 586.7L534.5 612.9M522.3 600.5L535.2 601.2M535.4 597.7L555.8 596.8M542.7 587.1L541.3 597.5M547.7 597.2L547.8 613.2M515.8 612.5L522.5 660.0M490.0 642.9L519.7 640.1M490.0 629.3L518.1 628.3M502.3 612.2L505.5 628.8M504.4 628.8L506.2 641.4M500.3 641.9L500.3 660.0M518.6 632.0L558.9 635.0M534.2 612.9L534.8 633.2M516.7 618.6L534.4 619.0M522.8 612.6L522.9 618.7M540.6 633.6L543.8 660.0M521.1 649.6L542.9 652.1M542.0 645.0L559.9 646.3M552.9 634.6L553.3 645.8M604.6 572.0L604.0 660.0M558.4 629.2L604.2 625.1M556.7 608.3L604.4 605.6M572.3 572.0L577.5 607.1M555.4 592.6L575.2 591.3M562.8 592.1L564.0 607.9M575.2 591.8L604.5 593.3M594.6 572.0L594.3 592.8M590.9 592.6L590.5 606.4M575.9 596.6L590.8 597.8M585.1 606.7L584.8 626.9M567.7 607.7L570.5 628.1M557.9 622.2L569.5 621.4M569.3 619.4L584.9 617.4M578.4 607.1L579.9 618.1M584.9 620.8L604.3 618.7M593.1 619.9L593.1 626.1M572.5 628.0L575.2 660.0M559.3 639.8L573.4 638.3M573.5 639.1L604.1 637.9M588.2 626.6L590.9 638.4M584.3 638.7L584.0 660.0M574.1 646.8L584.2 645.2M584.1 649.9L604.1 648.7M604.4 599.2L650.0 592.1M631.4 572.0L627.9 595.5M604.5 585.8L629.7 583.5M622.7 572.0L623.4 584.0M604.3 620.8L650.0 612.5M625.2 596.0L625.9 616.9M611.3 598.1L610.9 619.6M604.3 613.3L611.0 613.5M638.4 593.9L638.9 614.5M625.6 606.8L638.7 603.8M618.2 618.3L617.5 660.0M604.1 642.5L617.8 639.7M604.2 630.2L618.0 628.1M617.9 633.1L650.0 627.9M634.8 615.2L634.6 630.4M628.6 616.4L629.0 631.3M635.7 630.2L636.7 660.0M617.7 650.5L636.4 651.4M624.6 650.8L625.3 660.0M636.0 639.4L650.0 636.0M636.4 652.6L650.0 652.5M812.9 484.0L808.2 560.0M760.0 515.5L811.0 514.3M795.6 484.0L790.8 514.8M780.1 484.0L775.5 515.2M760.0 497.7L778.3 496.7M778.0 498.7L792.9 501.0M793.2 499.6L812.1 497.4M787.2 514.9L788.9 560.0M760.0 541.1L788.3 543.6M773.2 515.2L775.7 542.5M775.0 534.3L787.9 533.5M772.4 542.2L771.7 560.0M787.8 531.5L809.9 533.4M854.4 484.0L847.1 560.0M811.3 510.2L851.9 510.4M827.4 484.0L824.0 510.3M812.4 492.9L826.1 494.4M809.3 542.0L848.8 542.4M836.7 510.3L833.8 542.3M810.2 528.7L835.2 526.5M821.1 510.3L819.5 527.8M835.5 522.8L850.5 524.4M831.1 542.2L826.7 560.0M821.4 542.1L819.4 560.0M849.4 535.9L900.0 532.7M852.1 507.7L900.0 502.5M877.8 484.0L874.3 505.3M890.7 484.0L890.4 503.6M877.5 505.0L877.6 534.1M850.9 520.3L877.5 518.1M860.6 506.8L858.9 519.7M877.5 524.1L900.0 524.7M879.2 534.0L881.1 560.0M865.6 534.9L863.4 560.0M864.5 547.0L880.0 545.4M880.1 547.2L900.0 545.7M930.7 484.0L930.8 560.0M900.0 507.5L930.7 509.1M900.0 529.6L930.7 534.2M915.1 508.3L916.9 532.1M930.7 507.9L1000.0 512.1M968.0 484.0L965.2 510.0M990.4 484.0L989.8 511.5M977.6 510.7L976.9 560.0M930.8 543.7L977.1 548.5M960.9 509.7L962.5 547.0M930.7 522.0L961.4 521.7M950.2 521.8L952.4 545.9M946.7 545.3L949.2 560.0M977.3 535.0L1000.0 535.1M753.8 612.0L752.2 775.0M650.0 719.1L752.7 725.7M650.0 673.7L753.2 673.4M687.7 612.0L680.6 673.6M650.0 648.2L683.3 650.2M714.1 612.0L712.8 673.5M685.2 633.3L713.8 628.5M682.2 659.4L713.1 660.9M713.7 632.3L753.5 635.7M730.1 612.0L727.8 633.5M726.5 633.4L727.9 673.4M713.4 647.5L727.0 648.6M727.2 654.1L753.4 653.8M698.2 673.5L697.4 722.2M671.1 673.6L671.7 720.5M650.0 690.1L671.3 690.1M650.0 706.8L671.5 707.0M671.3 688.9L697.9 690.5M726.0 673.4L726.9 724.1M697.7 703.0L726.6 705.4M726.6 706.5L752.8 708.5M726.3 691.7L753.0 691.9M705.1 722.7L704.8 775.0M672.5 720.6L674.7 775.0M650.0 746.6L673.5 744.0M650.0 738.1L673.2 736.5M650.0 761.0L674.2 761.8M673.4 741.7L705.0 745.8M686.3 721.4L685.2 743.2M704.9 757.6L752.4 755.4M725.4 724.0L728.3 756.5M705.0 745.3L727.4 746.9M730.1 756.4L728.5 775.0M753.1 678.3L830.0 680.3M781.7 612.0L779.2 679.0M753.4 650.2L780.1 654.8M753.6 629.4L781.0 630.5M780.5 644.0L830.0 642.9M808.4 612.0L810.9 643.3M781.1 627.4L809.7 628.9M802.5 643.5L800.5 679.5M752.8 713.3L830.0 710.4M786.7 679.2L787.6 712.0M772.8 678.8L770.5 712.6M805.8 679.7L807.6 711.2M787.2 699.1L807.0 700.4M803.8 711.4L806.9 775.0M752.5 749.4L805.4 744.3M786.7 712.0L784.1 746.4M787.1 746.1L789.9 775.0M767.6 747.9L769.8 775.0M805.8 752.2L830.0 756.7M804.8 730.8L830.0 730.5M900.9 650.0L889.8 775.0M830.0 703.0L896.1 703.9M861.9 650.0L863.8 703.5M830.0 686.2L863.2 685.1M850.4 685.5L851.3 703.3M862.6 669.6L898.8 673.4M876.6 650.0L879.1 671.3M830.0 736.7L892.9 740.5M864.1 703.5L866.6 738.9M865.4 738.8L860.9 775.0M864.0 750.1L891.9 750.9M895.7 709.1L1000.0 703.5M954.8 650.0L956.4 705.9M898.4 677.9L955.5 674.4M933.1 650.0L930.1 675.9M919.6 650.0L915.7 676.8M936.9 675.5L939.8 706.8M955.8 684.3L1000.0 686.1M984.5 650.0L983.4 685.4M955.4 705.9L956.1 775.0M892.2 748.0L955.8 742.1M932.8 707.1L935.6 744.0M934.3 727.1L955.6 725.4M929.5 744.6L931.7 775.0M955.8 742.4L1000.0 736.8M971.4 705.1L971.7 740.4M955.6 728.0L971.6 727.0M982.0 739.1L982.0 775.0M600 612L600 490L760 490M650 775L650 612L830 612M760 560L760 484L900 484M932.0 512.0L1000.0 548.0L1060.0 575.0L1090.0 600.0M856.0 560.0L930.0 600.0L990.0 640.0L1040.0 672.0M519.0 689.0L579.0 690.4M1233.5 484.0L1233.5 567.5M1525.0 459.0L1522.0 684.0L1527.0 768.0M1064.0 567.5L1274.0 567.5L1272.0 654.0L1272.5 772.0M1230.0 608.0L1272.5 608.0M1230.0 608.0L1230.0 649.0L1272.0 649.0M1064.0 644.0L1104.0 653.0L1132.0 656.0L1212.0 657.0L1214.0 663.0L1272.0 654.0M1524.0 684.4L1580.0 683.0L1655.0 681.0M1064.0 567.0L1064.0 643.0M1104.0 615.0L1104.0 691.0M1111.0 656.0L1111.0 691.0M1187.5 691.5L1187.5 773.0M1209.5 759.0L1225.0 773.0M1612.0 699.0L1658.0 699.0L1658.0 713.0M1524.0 702.0L1543.0 702.0L1543.0 706.0L1536.0 706.0L1536.0 716.0M1060.0 712.7L1083.0 712.7L1084.8 698.5L1095.4 698.5L1104.3 705.6L1120.2 709.2L1123.8 723.3L1136.1 737.5L1137.9 755.2L1153.9 765.8L1153.9 772.9M1060.0 723.3L1074.2 732.2L1070.6 751.7L1081.3 758.8L1088.3 765.8L1091.9 772.9M1084.8 726.9L1099.0 726.9L1104.3 734.0L1127.3 734.0L1136.1 739.3M621.9 502.4L655.2 520.2L692.2 531.3L713.0 541.7L750.0 558.0M655.2 532.8L677.4 550.6L686.3 562.4L702.6 578.7L732.2 605.4M675.9 552.0L690.7 531.3M591.5 538.7L609.3 587.6L624.1 617.2M573.3 747.4L582.2 737.0L585.2 723.7L592.6 725.2L598.5 722.2L605.9 720.7M604.4 759.3L608.9 751.9L622.2 753.3L628.1 747.4L640.0 750.4M537.8 625.9L563.0 625.9L563.0 646.7L549.6 648.1L537.8 646.7L537.8 625.9M523.0 620.0L523.0 634.8L536.3 634.8M1105.0 691.7L1105.0 706.7M1043.3 691.7L1043.3 706.7L1030.0 706.7M1050.0 716.7L1060.0 720.0L1061.7 726.7L1068.3 733.3M1029.2 657.5L1029.2 706.7M994.2 643.3L994.2 773.3M973.3 656.7L973.3 773.3M980.0 685.0L980.0 720.0L988.3 720.0L988.3 726.7L994.2 726.7M1001.7 706.7L1015.0 713.3L1015.0 733.3L1023.3 736.7L1023.3 746.7L1030.0 746.7L1030.0 760.0L1036.7 760.0L1036.7 773.3M807.8 649.6L807.8 677.8M793.7 677.8L793.7 772.6M807.8 719.3L807.8 772.6M807.8 766.7L827.0 766.7L827.0 772.6M794.4 691.1L843.3 691.9M856.7 620.0L856.7 683.7M856.7 623.0L870.0 623.0M790.0 685.2L793.7 685.2M800.4 635.6L828.5 635.6L828.5 649.6L800.4 649.6L800.4 635.6M935.9 726.7L942.6 726.7L945.6 734.1L947.0 738.5L959.6 738.5M935.9 711.1L935.9 772.6M959.6 657.0L959.6 772.6M959.6 657.0L970.0 657.0M918.9 636.3L918.9 671.9M925.6 636.3L925.6 657.0L932.2 657.0L932.2 670.4M932.2 637.8L938.1 637.8L938.1 643.7M870.0 649.6L890.7 649.6L890.7 637.8L896.7 636.3L897.4 620.0M1620.0 650.0L1640.0 645.0L1660.0 648.0L1680.0 643.0L1688.0 650.0M1640.0 650.0L1640.0 680.0M1660.0 648.0L1660.0 684.0M981.0 484.0L981.0 560.0M981.0 700.0L981.0 773.0M935.0 700.0L935.0 773.0M897.0 690.0L897.0 773.0M856.0 484.0L856.0 560.0" fill="none" stroke="#231c20" stroke-width="1"/></g><path d="M482.5 481.3 L555.3 482.0 L555.8 488.7 L614.0 490.3 L614.0 496.3 L732.5 496.7 L732.5 483.3 L1372.4 483.5 L1372.4 463.0 L1721.5 456.1 L1720.8 468.3 L1722.1 479.0 L1719.9 486.7 L1710.8 488.2 L1712.3 494.3 L1709.2 497.4 L1703.1 502.0 L1695.5 509.6 L1687.8 515.7 L1683.2 523.4 L1684.8 531.0 L1690.9 534.1 L1693.9 540.2 L1687.8 544.8 L1693.9 552.4 L1695.5 557.0 L1687.8 561.6 L1686.3 567.7 L1687.8 575.3 L1690.9 581.5 L1689.4 590.6 L1693.9 602.9 L1697.0 615.1 L1693.9 624.3 L1700.1 630.4 L1700.1 639.5 L1693.9 642.6 L1687.8 645.7 L1687.8 654.8 L1692.4 656.4 L1689.4 660.9 L1687.8 665.5 L1690.9 668.6 L1687.8 674.7 L1690.9 682.3 L1684.8 691.5 L1687.8 700.7 L1690.9 708.3 L1684.8 712.9 L1678.7 719.0 L1669.5 728.2 L1660.3 740.4 L1652.7 755.7 L1651.1 764.9 L1602.2 766.4 L1566.5 767.6 L1272.5 772.2 L1080.0 773.0 L730.0 772.3 L605.8 769.2 L604.6 760.8 L555.2 740.3 L554.0 733.0 L498.6 733.0 L499.8 718.6 L537.0 659.2 L513.0 640.4 L490.2 635.6 L490.2 611.5 L474.5 609.0 L440.8 564.5 L436.0 563.3 L434.8 550.0 L443.2 533.2 L461.7 533.0 L461.7 510.0 L480.8 503.3Z" fill="none" stroke="#231c20" stroke-width="1"/></svg>
<div class="t" style="left:7.00px;top:186.42px;font-size:12.50px;color:#000;letter-spacing:0.526px;">Browser</div>
<svg class="s" style="left:209px;top:186px" width="26" height="11" viewBox="0 0 26 11"><rect x="0.5" y="0.5" width="10" height="10" rx="2" fill="none" stroke="#6b6b6b"/><rect x="2.5" y="4.5" width="4" height="4" rx=".6" fill="none" stroke="#6b6b6b"/><path d="M5 3.5V2.5h4v4h-1" fill="none" stroke="#6b6b6b"/><rect x="14.5" y="0.5" width="10" height="10" rx="2" fill="none" stroke="#6b6b6b"/><path d="M17 3l5 5M22 3l-5 5" stroke="#6b6b6b" stroke-width="1.8"/></svg>
<svg class="s" style="left:11px;top:208px" width="16" height="16" viewBox="0 0 16 16"><rect x="1.5" y="1.5" width="11" height="11" fill="#fff" stroke="#888"/><circle cx="12.5" cy="12.5" r="2.8" fill="#6fb36f" stroke="#fff" stroke-width=".8"/></svg>
<svg class="s" style="left:36px;top:208px" width="16" height="16" viewBox="0 0 16 16"><path d="M1 7a7 7 0 0 1 12-4l2-2v6H9l2-2a4 4 0 0 0-7 2z" fill="#4a8ad4"/><path d="M15 9a7 7 0 0 1-12 4l-2 2V9h6l-2 2a4 4 0 0 0 7-2z" fill="#4a8ad4"/></svg>
<svg class="s" style="left:61px;top:208px" width="16" height="16" viewBox="0 0 16 16"><path d="M1 1h14v2l-5 5v7l-4-2V8L1 3z" fill="#6a9bd1" stroke="#3d6da8" stroke-width=".6"/><rect x="1" y="1" width="14" height="2" fill="#fce94f"/></svg>
<svg class="s" style="left:87px;top:208px" width="16" height="16" viewBox="0 0 16 16"><path d="M1.5 3.5h3v11h-3" fill="none" stroke="#999" stroke-width=".8"/><rect x="4" y="6" width="3" height="3" fill="#f79b2a"/><rect x="4" y="11" width="3" height="3" fill="#f79b2a"/><path d="M11 1l4.5 4.5h-3v9h-3v-9h-3z" fill="#6a9bd1" stroke="#3d6da8" stroke-width=".6"/></svg>
<svg class="s" style="left:111px;top:209px" width="15" height="15" viewBox="0 0 15 15"><circle cx="7.5" cy="7.5" r="7" fill="#5b8dc8"/><text x="5.5" y="12" font-family="Liberation Serif" font-style="italic" font-weight="bold" font-size="10" fill="#fff">i</text></svg>
<div class="r" style="left:3px;top:232px;width:233px;height:380px;background:#fff;border:1px solid #bab5b0;box-sizing:border-box"></div>
<svg class="s" style="left:27px;top:234px" width="16" height="16" viewBox="0 0 16 16"><path d="M8 0.5l2.2 4.8 5.2.6-3.9 3.5 1.1 5.1L8 11.9l-4.6 2.6 1.1-5.1L.6 5.9l5.2-.6z" fill="#fce94f" stroke="#c4a000"/></svg>
<div class="t" style="left:49.00px;top:237.42px;font-size:12.50px;color:#000;letter-spacing:0.450px;">Favorites</div>
<svg class="s" style="left:27px;top:252px" width="16" height="16" viewBox="0 0 16 16"><rect x="1" y="1.5" width="14" height="12" fill="#b4e07a" stroke="#777" stroke-width=".8"/><path d="M2 3l12 10M2 12l6-4" stroke="#fff" stroke-width="1"/><path d="M7 4l5 0-1 4z" fill="#1b8f2a"/></svg>
<div class="t" style="left:49.00px;top:255.42px;font-size:12.50px;color:#000;letter-spacing:0.435px;">Project Home</div>
<svg class="s" style="left:10px;top:256px" width="8" height="9" viewBox="0 0 8 9"><path d="M1 0.5l6 4-6 4z" fill="#333"/></svg>
<svg class="s" style="left:27px;top:270px" width="16" height="16" viewBox="0 0 16 16"><path d="M1.5 2.5h5l1 1.5h7v10h-13z" fill="#f3f3f3" stroke="#888" stroke-width=".8"/><path d="M5 9l3-3 3 3M6 8.5v3.5h4V8.5" fill="none" stroke="#333" stroke-width=".9"/></svg>
<div class="t" style="left:49.00px;top:273.42px;font-size:12.50px;color:#000;letter-spacing:0.553px;">Home</div>
<svg class="s" style="left:10px;top:274px" width="8" height="9" viewBox="0 0 8 9"><path d="M1 0.5l6 4-6 4z" fill="#333"/></svg>
<svg class="s" style="left:27px;top:288px" width="16" height="16" viewBox="0 0 16 16"><path d="M1.5 2.5h5l1 1.5h7v10h-13z" fill="#eeeeec" stroke="#888" stroke-width=".8"/></svg>
<div class="t" style="left:49.00px;top:291.42px;font-size:12.50px;color:#000;">/</div>
<svg class="s" style="left:10px;top:292px" width="8" height="9" viewBox="0 0 8 9"><path d="M1 0.5l6 4-6 4z" fill="#333"/></svg>
<svg class="s" style="left:27px;top:306px" width="16" height="16" viewBox="0 0 16 16"><path d="M0.5 6l7.5 3.5v6L.5 12z" fill="#e6c21e" stroke="#6a5a10" stroke-width=".6"/><path d="M8 9.5L15.5 6v6L8 15.5z" fill="#fdf07a" stroke="#6a5a10" stroke-width=".6"/><circle cx="8" cy="5" r="4.5" fill="#5b8dc8"/><path d="M6 3c1 1 1 2 2 2s1 2 2 2" stroke="#2a4f80" stroke-width="1.2" fill="none"/></svg>
<div class="t" style="left:49.00px;top:309.42px;font-size:12.50px;color:#000;letter-spacing:0.192px;">GeoPackage</div>
<svg class="s" style="left:10px;top:310px" width="8" height="9" viewBox="0 0 8 9"><path d="M1 0.5l6 4-6 4z" fill="#333"/></svg>
<svg class="s" style="left:27px;top:324px" width="16" height="16" viewBox="0 0 16 16"><path d="M0.5 15.5C2 10 7 3 15.5 0.5 14 6 9 12 3 13z" fill="#8fb4e0" stroke="#3d6da8" stroke-width=".8"/></svg>
<div class="t" style="left:49.00px;top:327.42px;font-size:12.50px;color:#000;letter-spacing:0.434px;">SpatiaLite</div>
<svg class="s" style="left:10px;top:328px" width="8" height="9" viewBox="0 0 8 9"><path d="M1 0.5l6 4-6 4z" fill="#333"/></svg>
<svg class="s" style="left:27px;top:342px" width="16" height="16" viewBox="0 0 16 16"><path d="M3 1c3-1 8-1 11 1 2 2 1 6-1 8l1 3c-1 2-3 1-4 0-2 1-4 1-5-1-3-1-5-4-4-8 0-2 1-3 2-3z" fill="#5b8dc8" stroke="#3a5f8a" stroke-width=".8"/><path d="M7 5c1 2 1 6 0 9M10 4c0 3 1 5 3 6" stroke="#dce8f5" stroke-width=".8" fill="none"/></svg>
<div class="t" style="left:49.00px;top:345.42px;font-size:12.50px;color:#000;letter-spacing:-0.174px;">PostGIS</div>
<svg class="s" style="left:27px;top:360px" width="16" height="16" viewBox="0 0 16 16"><path d="M1 1c6 0 12 3 15 7-3 4-9 7-15 7 2-2 4-4 4-7s-2-5-4-7z" fill="#5b8dc8" stroke="#3a5f8a" stroke-width=".6"/><path d="M6 3c1 2 1 8 0 10M10 4c1 2 1 6 0 8" stroke="#dce8f5" stroke-width=".8" fill="none"/></svg>
<div class="t" style="left:49.00px;top:363.42px;font-size:12.50px;color:#000;letter-spacing:-0.565px;">MSSQL</div>
<svg class="s" style="left:27px;top:378px" width="16" height="16" viewBox="0 0 16 16"><rect x=".5" y=".5" width="15" height="15" rx="3" fill="#6a9bd1"/><text x="1.5" y="10.5" font-family="Liberation Sans" font-size="6" fill="#fff">DB2</text></svg>
<div class="t" style="left:49.00px;top:381.42px;font-size:12.50px;color:#000;letter-spacing:0.092px;">DB2</div>
<svg class="s" style="left:27px;top:396px" width="16" height="16" viewBox="0 0 16 16"><circle cx="8" cy="8" r="7.3" fill="#bcd2ec" stroke="#6d93c4" stroke-width=".9"/><path d="M3 4c2-1 3 0 4 1s-1 2 0 3 2 1 1 3-2 2-3 1-1-3-2-4-1-2 0-4zM9 2c2 0 4 1 5 3l-1 1c-1-1-2 0-2 1s-2 0-2-2 0-2 0-3z" fill="#3e6aa0"/></svg>
<div class="t" style="left:49.00px;top:399.42px;font-size:12.50px;color:#000;letter-spacing:-0.244px;">WMS/WMTS</div>
<svg class="s" style="left:27px;top:414px" width="16" height="16" viewBox="0 0 16 16"><circle cx="8" cy="8" r="7.3" fill="#bcd2ec" stroke="#6d93c4" stroke-width=".9"/><path d="M3 4c2-1 3 0 4 1s-1 2 0 3 2 1 1 3-2 2-3 1-1-3-2-4-1-2 0-4zM9 2c2 0 4 1 5 3l-1 1c-1-1-2 0-2 1s-2 0-2-2 0-2 0-3z" fill="#3e6aa0"/></svg>
<div class="t" style="left:49.00px;top:417.42px;font-size:12.50px;color:#000;letter-spacing:0.127px;">XYZ Tiles</div>
<svg class="s" style="left:9px;top:420px" width="10" height="7" viewBox="0 0 10 7"><path d="M0.5 1h9l-4.5 5z" fill="#444"/></svg>
<svg class="s" style="left:49px;top:434px" width="13" height="13" viewBox="0 0 13 13"><rect x="0" y="0" width="13" height="13" fill="#b9cfe6"/><rect x="0" y="0" width="4.3" height="4.3" fill="#1e3550"/><rect x="8.7" y="0" width="4.3" height="4.3" fill="#1e3550"/><rect x="4.3" y="4.3" width="4.3" height="4.3" fill="#1e3550"/><rect x="0" y="8.7" width="4.3" height="4.3" fill="#1e3550"/><rect x="4.3" y="0" width="4.3" height="4.3" fill="#8fb0d4"/><rect x="8.7" y="4.3" width="4.3" height="4.3" fill="#dfe9f4"/></svg>
<div class="t" style="left:69.00px;top:435.42px;font-size:12.50px;color:#000;letter-spacing:0.543px;">google maps</div>
<svg class="s" style="left:49px;top:452px" width="13" height="13" viewBox="0 0 13 13"><rect x="0" y="0" width="13" height="13" fill="#b9cfe6"/><rect x="0" y="0" width="4.3" height="4.3" fill="#1e3550"/><rect x="8.7" y="0" width="4.3" height="4.3" fill="#1e3550"/><rect x="4.3" y="4.3" width="4.3" height="4.3" fill="#1e3550"/><rect x="0" y="8.7" width="4.3" height="4.3" fill="#1e3550"/><rect x="4.3" y="0" width="4.3" height="4.3" fill="#8fb0d4"/><rect x="8.7" y="4.3" width="4.3" height="4.3" fill="#dfe9f4"/></svg>
<div class="t" style="left:69.00px;top:453.42px;font-size:12.50px;color:#000;letter-spacing:0.574px;">google satellite</div>
<svg class="s" style="left:49px;top:470px" width="13" height="13" viewBox="0 0 13 13"><rect x="0" y="0" width="13" height="13" fill="#b9cfe6"/><rect x="0" y="0" width="4.3" height="4.3" fill="#1e3550"/><rect x="8.7" y="0" width="4.3" height="4.3" fill="#1e3550"/><rect x="4.3" y="4.3" width="4.3" height="4.3" fill="#1e3550"/><rect x="0" y="8.7" width="4.3" height="4.3" fill="#1e3550"/><rect x="4.3" y="0" width="4.3" height="4.3" fill="#8fb0d4"/><rect x="8.7" y="4.3" width="4.3" height="4.3" fill="#dfe9f4"/></svg>
<div class="t" style="left:69.00px;top:471.42px;font-size:12.50px;color:#000;letter-spacing:0.438px;">OpenStreetMap</div>
<svg class="s" style="left:27px;top:486px" width="16" height="16" viewBox="0 0 16 16"><circle cx="8" cy="8" r="7.3" fill="#3e6fa8" stroke="#2a4f80" stroke-width=".8"/><path d="M1 8h14M2 4.5h12M2 11.5h12" stroke="#cfe0f5" stroke-width="1.2"/><rect x="5" y="5" width="6" height="6" fill="#cfe0f5" opacity=".6"/></svg>
<div class="t" style="left:49.00px;top:489.42px;font-size:12.50px;color:#000;letter-spacing:-1.082px;">WCS</div>
<svg class="s" style="left:27px;top:504px" width="16" height="16" viewBox="0 0 16 16"><circle cx="8" cy="8" r="7.3" fill="#f2f6fb" stroke="#6d93c4" stroke-width=".9"/><path d="M1 8h14M2 4.5h12M2 11.5h12M8 1v14M4 2c-2 4-2 8 0 12M12 2c2 4 2 8 0 12" stroke="#8fb0d8" stroke-width=".8" fill="none"/><path d="M4.5 4l3.5 8 3.5-8" fill="none" stroke="#333" stroke-width="1"/></svg>
<div class="t" style="left:49.00px;top:507.42px;font-size:12.50px;color:#000;letter-spacing:-0.886px;">WFS</div>
<svg class="s" style="left:27px;top:522px" width="16" height="16" viewBox="0 0 16 16"><circle cx="8" cy="8" r="7.3" fill="#f2f6fb" stroke="#6d93c4" stroke-width=".9"/><path d="M1 8h14M2 4.5h12M2 11.5h12M8 1v14M4 2c-2 4-2 8 0 12M12 2c2 4 2 8 0 12" stroke="#8fb0d8" stroke-width=".8" fill="none"/></svg>
<div class="t" style="left:49.00px;top:525.42px;font-size:12.50px;color:#000;letter-spacing:-0.680px;">OWS</div>
<svg class="s" style="left:27px;top:540px" width="16" height="16" viewBox="0 0 16 16"><circle cx="8" cy="8" r="7.3" fill="#9fbde0" stroke="#6d93c4" stroke-width=".9"/><path d="M1 8h14M8 1v14" stroke="#dce8f5" stroke-width=".8"/><path d="M9 2c2 0 4 1 5 3l-2 2-2-1zM2.5 9c1 0 3 1 3 3s-1 2-2 2z" fill="#2e2e2e" opacity=".8"/></svg>
<div class="t" style="left:49.00px;top:543.42px;font-size:12.50px;color:#000;letter-spacing:0.312px;">ArcGisMapServer</div>
<svg class="s" style="left:27px;top:558px" width="16" height="16" viewBox="0 0 16 16"><circle cx="8" cy="8" r="7.3" fill="#f2f6fb" stroke="#6d93c4" stroke-width=".9"/><path d="M1 8h14M2 4.5h12M2 11.5h12M8 1v14M4 2c-2 4-2 8 0 12M12 2c2 4 2 8 0 12" stroke="#8fb0d8" stroke-width=".8" fill="none"/><path d="M2.5 9c1 0 3 1 3 3s-1 2-2 2z" fill="#2e2e2e" opacity=".8"/></svg>
<div class="t" style="left:49.00px;top:561.42px;font-size:12.50px;color:#000;letter-spacing:0.367px;">ArcGisFeatureServer</div>
<svg class="s" style="left:27px;top:576px" width="16" height="16" viewBox="0 0 16 16"><g transform="translate(8 8)" fill="#5b8dc8"><ellipse cx="0" cy="-5" rx="1.9" ry="3" transform="rotate(0)"/><ellipse cx="0" cy="-5" rx="1.9" ry="3" transform="rotate(60)"/><ellipse cx="0" cy="-5" rx="1.9" ry="3" transform="rotate(120)"/><ellipse cx="0" cy="-5" rx="1.9" ry="3" transform="rotate(180)"/><ellipse cx="0" cy="-5" rx="1.9" ry="3" transform="rotate(240)"/><ellipse cx="0" cy="-5" rx="1.9" ry="3" transform="rotate(300)"/><circle r="2.6"/></g></svg>
<div class="t" style="left:49.00px;top:579.42px;font-size:12.50px;color:#000;letter-spacing:0.249px;">GeoNode</div>
<svg class="s" style="left:112px;top:613px" width="18" height="2" viewBox="0 0 18 2"><rect x="0" y="0" width="1" height="1" fill="#aaa"/><rect x="3" y="0" width="1" height="1" fill="#aaa"/><rect x="6" y="0" width="1" height="1" fill="#aaa"/><rect x="9" y="0" width="1" height="1" fill="#aaa"/><rect x="12" y="0" width="1" height="1" fill="#aaa"/><rect x="15" y="0" width="1" height="1" fill="#aaa"/></svg>
<svg class="s" style="left:238px;top:608px" width="2" height="17" viewBox="0 0 2 17"><rect x="0" y="0" width="1" height="1" fill="#aaa"/><rect x="0" y="3" width="1" height="1" fill="#aaa"/><rect x="0" y="6" width="1" height="1" fill="#aaa"/><rect x="0" y="9" width="1" height="1" fill="#aaa"/><rect x="0" y="12" width="1" height="1" fill="#aaa"/><rect x="0" y="15" width="1" height="1" fill="#aaa"/></svg>
<div class="t" style="left:7.00px;top:622.42px;font-size:12.50px;color:#000;letter-spacing:0.297px;">Layers</div>
<svg class="s" style="left:209px;top:622px" width="26" height="11" viewBox="0 0 26 11"><rect x="0.5" y="0.5" width="10" height="10" rx="2" fill="none" stroke="#6b6b6b"/><rect x="2.5" y="4.5" width="4" height="4" rx=".6" fill="none" stroke="#6b6b6b"/><path d="M5 3.5V2.5h4v4h-1" fill="none" stroke="#6b6b6b"/><rect x="14.5" y="0.5" width="10" height="10" rx="2" fill="none" stroke="#6b6b6b"/><path d="M17 3l5 5M22 3l-5 5" stroke="#6b6b6b" stroke-width="1.8"/></svg>
<svg class="s" style="left:11px;top:644px" width="16" height="16" viewBox="0 0 16 16"><path d="M1 10l6-4 3 6-6 3z" fill="#e33"/><path d="M1 8l6-4 3 6-6 3z" fill="#f5d03e"/><path d="M1 6l5-3 3 5-5 3z" fill="#6a9bd1" opacity=".8"/><path d="M5 11l3-3 3 2-2 4z" fill="#d9a760"/><path d="M9 9l6-7" stroke="#c8862a" stroke-width="2"/></svg>
<svg class="s" style="left:37px;top:644px" width="16" height="16" viewBox="0 0 16 16"><rect x="1.5" y="5.5" width="8" height="9" fill="none" stroke="#888" stroke-width=".9"/><rect x="4.5" y="2.5" width="8" height="9" fill="#f3f3f3" stroke="#888" stroke-width=".9"/><path d="M7 1v7a1.5 1.5 0 0 0 3 0V3" fill="none" stroke="#3d6da8" stroke-width="1"/><circle cx="12.5" cy="12.5" r="3" fill="#6fb36f"/></svg>
<svg class="s" style="left:62px;top:644px" width="18" height="16" viewBox="0 0 18 16"><path d="M1 7c4-5 11-5 15 0-4 5-11 5-15 0z" fill="#e8eef5" stroke="#999" stroke-width=".8"/><circle cx="8.5" cy="7" r="3.2" fill="#5b8dc8"/><circle cx="8.5" cy="7" r="1.2" fill="#111"/><path d="M12 12h5l-2.5 2.5z" fill="#333"/></svg>
<svg class="s" style="left:86px;top:644px" width="16" height="16" viewBox="0 0 16 16"><path d="M1 1h14v2l-5 5v7l-4-2V8L1 3z" fill="#6a9bd1" stroke="#3d6da8" stroke-width=".6"/><rect x="1" y="1" width="14" height="2" fill="#fce94f"/></svg>
<svg class="s" style="left:112px;top:644px" width="30" height="17" viewBox="0 0 30 17"><text x="0" y="12" font-family="Liberation Serif" font-size="17" fill="#6a2a8a">&#949;</text><path d="M7 10h6v5a1 1 0 0 1-1 1H8a1 1 0 0 1-1-1z" fill="#999"/><path d="M20 7.5h9l-4.5 4.5z" fill="#333"/></svg>
<svg class="s" style="left:148px;top:644px" width="16" height="16" viewBox="0 0 16 16"><path d="M1.5 2.5h3v11h-3" fill="none" stroke="#999" stroke-width=".8"/><rect x="4" y="4" width="3" height="3" fill="#f79b2a"/><rect x="4" y="9" width="3" height="3" fill="#f79b2a"/><path d="M11 15l4.5-4.5h-3v-9h-3v9h-3z" fill="#6a9bd1" stroke="#3d6da8" stroke-width=".6"/></svg>
<svg class="s" style="left:173px;top:644px" width="16" height="16" viewBox="0 0 16 16"><path d="M1.5 3.5h3v11h-3" fill="none" stroke="#999" stroke-width=".8"/><rect x="4" y="6" width="3" height="3" fill="#f79b2a"/><rect x="4" y="11" width="3" height="3" fill="#f79b2a"/><path d="M11 1l4.5 4.5h-3v9h-3v-9h-3z" fill="#6a9bd1" stroke="#3d6da8" stroke-width=".6"/></svg>
<svg class="s" style="left:198px;top:644px" width="16" height="16" viewBox="0 0 16 16"><rect x="1.5" y="1.5" width="11" height="11" fill="#fff" stroke="#888"/><rect x="9" y="11" width="6" height="4" rx="1.5" fill="#e33"/><rect x="10.5" y="12.5" width="3" height="1" fill="#fff"/></svg>
<div class="r" style="left:3px;top:668px;width:233px;height:380px;background:#fff;border:1px solid #bab5b0;box-sizing:border-box"></div>
<div class="r" style="left:4px;top:669px;width:231px;height:17px;background:#308cc6;"></div>
<svg class="s" style="left:30px;top:673px" width="11" height="11" viewBox="0 0 11 11"><rect x=".5" y=".5" width="10" height="10" fill="#3a5a7a" stroke="#555"/><rect x="1.5" y="6" width="8" height="3.5" fill="#3a9a4a"/><text x="2" y="6" font-family="Liberation Sans" font-size="5" fill="#fff">S</text></svg>
<div class="t" style="left:49.00px;top:673.42px;font-size:12.50px;color:#fff;letter-spacing:0.915px;font-weight:bold;">virtual</div>
<div class="r" style="left:48px;top:685px;width:50px;height:1px;background:#dbe9f5;"></div>
<svg class="s" style="left:9px;top:692px" width="10" height="7" viewBox="0 0 10 7"><path d="M0.5 1h9l-4.5 5z" fill="#444"/></svg>
<svg class="s" style="left:27px;top:689px" width="14" height="14" viewBox="0 0 14 14"><rect x=".5" y=".5" width="13" height="13" fill="#fff" stroke="#aaa69f"/><path d="M3 7l2.5 3.5L11 2.5" fill="none" stroke="#111" stroke-width="1.7"/></svg>
<svg class="s" style="left:47px;top:689px" width="16" height="12" viewBox="0 0 16 12"><path d="M2 2c3-1 4 1 7 0s5 0 5 3-2 3-1 5-3 2-5 1-5 1-7 0-1-3 0-5-1-3 1-4z" fill="#e0e0e0" stroke="#aaa" stroke-width=".8"/></svg>
<div class="t" style="left:69.00px;top:691.42px;font-size:12.50px;color:#000;letter-spacing:0.926px;font-weight:bold;">voti</div>
<svg class="s" style="left:47px;top:708px" width="14" height="14" viewBox="0 0 14 14"><rect x=".5" y=".5" width="13" height="13" fill="#fff" stroke="#aaa69f"/><path d="M3 7l2.5 3.5L11 2.5" fill="none" stroke="#111" stroke-width="1.7"/></svg>
<div class="r" style="left:67px;top:706px;width:18px;height:18px;background:#6f61ee;border:1px solid #333;box-sizing:border-box"></div>
<svg class="s" style="left:47px;top:728px" width="14" height="14" viewBox="0 0 14 14"><rect x=".5" y=".5" width="13" height="13" fill="#fff" stroke="#aaa69f"/><path d="M3 7l2.5 3.5L11 2.5" fill="none" stroke="#111" stroke-width="1.7"/></svg>
<div class="r" style="left:67px;top:726px;width:18px;height:18px;background:#ca435a;border:1px solid #333;box-sizing:border-box"></div>
<svg class="s" style="left:47px;top:748px" width="14" height="14" viewBox="0 0 14 14"><rect x=".5" y=".5" width="13" height="13" fill="#fff" stroke="#aaa69f"/><path d="M3 7l2.5 3.5L11 2.5" fill="none" stroke="#111" stroke-width="1.7"/></svg>
<div class="r" style="left:67px;top:746px;width:18px;height:18px;background:#5ce0b0;border:1px solid #333;box-sizing:border-box"></div>
<div class="t" style="left:89.00px;top:709.42px;font-size:12.50px;color:#111;">C</div>
<div class="r" style="left:90px;top:734px;width:5px;height:1.3px;background:#111;"></div>
<div class="r" style="left:3px;top:1048px;width:1914px;height:29px;background:#efebe6;"></div>
<div class="r" style="left:7px;top:1051px;width:248px;height:23px;background:#fff;border:1px solid #a9a5a0;border-radius:3px;box-sizing:border-box"></div>
<svg class="s" style="left:14px;top:1055px" width="12" height="13" viewBox="0 0 12 13"><circle cx="5" cy="5" r="4" fill="none" stroke="#777" stroke-width="1.1"/><path d="M8 8l3.5 3.5" stroke="#777" stroke-width="1.3"/></svg>
<div class="t" style="left:36.00px;top:1057.42px;font-size:12.50px;color:#8a8a8a;letter-spacing:0.582px;">Type to locate (Ctrl+K)</div>
<div class="t" style="left:1094.50px;top:1058.54px;font-size:10.00px;color:#222;letter-spacing:-0.046px;">Coordinate</div>
<div class="r" style="left:1147px;top:1051px;width:92px;height:22px;background:#fff;border:1px solid #a9a5a0;border-radius:2px;box-sizing:border-box"></div>
<div class="t" style="left:1151.00px;top:1058.54px;font-size:10.00px;color:#111;letter-spacing:0.098px;">5985242,2038495</div>
<svg class="s" style="left:1243px;top:1053px" width="17" height="17" viewBox="0 0 17 17"><path d="M4 3c3-2 7-1 9 2l-5 10C5 15 2 12 2 8c0-2 1-4 2-5z" fill="#666"/><path d="M5 4l5 2M3 8l6 2" stroke="#fff" stroke-width=".8"/><circle cx="10" cy="12" r="2.5" fill="#fff" stroke="#555"/><path d="M13 4l3-2" stroke="#555"/></svg>
<div class="t" style="left:1274.00px;top:1058.54px;font-size:10.00px;color:#222;letter-spacing:-0.504px;">Scale</div>
<div class="r" style="left:1301px;top:1051px;width:96px;height:22px;background:#fff;border:1px solid #a9a5a0;border-radius:2px;box-sizing:border-box"></div>
<div class="r" style="left:1376px;top:1052px;width:1px;height:20px;background:#cfcac4;"></div>
<svg class="s" style="left:1381px;top:1058px" width="10" height="8" viewBox="0 0 10 8"><path d="M1 1h8l-4 5z" fill="#444"/></svg>
<div class="t" style="left:1305.00px;top:1058.54px;font-size:10.00px;color:#111;letter-spacing:0.042px;">1:879729</div>
<svg class="s" style="left:1408px;top:1054px" width="14" height="16" viewBox="0 0 14 16"><path d="M3.5 7V5a3.5 3.5 0 0 1 7 0v2" fill="none" stroke="#666" stroke-width="1.8"/><rect x="1.5" y="7" width="11" height="8" rx="1.5" fill="#666"/></svg>
<div class="t" style="left:1430.00px;top:1058.54px;font-size:10.00px;color:#222;letter-spacing:0.109px;">Magnifier</div>
<div class="r" style="left:1476px;top:1051px;width:94px;height:22px;background:#fff;border:1px solid #a9a5a0;border-radius:2px;box-sizing:border-box"></div>
<div class="r" style="left:1556px;top:1052px;width:1px;height:20px;background:#cfcac4;"></div>
<svg class="s" style="left:1558px;top:1055px" width="11" height="15" viewBox="0 0 11 15"><path d="M1 6l4.5-4.5L10 6z M1 9l4.5 4.5L10 9z" fill="#555"/></svg>
<div class="t" style="left:1480.00px;top:1058.54px;font-size:10.00px;color:#111;letter-spacing:-0.525px;">100%</div>
<div class="t" style="left:1580.00px;top:1058.54px;font-size:10.00px;color:#222;letter-spacing:0.037px;">Rotation</div>
<div class="r" style="left:1627px;top:1051px;width:91px;height:22px;background:#fff;border:1px solid #a9a5a0;border-radius:2px;box-sizing:border-box"></div>
<div class="r" style="left:1703px;top:1052px;width:1px;height:20px;background:#cfcac4;"></div>
<svg class="s" style="left:1705px;top:1055px" width="11" height="15" viewBox="0 0 11 15"><path d="M1 6l4.5-4.5L10 6z M1 9l4.5 4.5L10 9z" fill="#555"/></svg>
<div class="t" style="left:1632.00px;top:1058.54px;font-size:10.00px;color:#111;letter-spacing:0.081px;">0.0 °</div>
<svg class="s" style="left:1724px;top:1057px" width="14" height="14" viewBox="0 0 14 14"><rect x=".5" y=".5" width="13" height="13" fill="#fff" stroke="#aaa69f"/><path d="M3 7l2.5 3.5L11 2.5" fill="none" stroke="#111" stroke-width="1.7"/></svg>
<div class="t" style="left:1743.00px;top:1058.54px;font-size:10.00px;color:#222;letter-spacing:-0.159px;">Render</div>
<svg class="s" style="left:1792px;top:1054px" width="17" height="16" viewBox="0 0 17 16"><ellipse cx="8.5" cy="8" rx="7" ry="7" fill="none" stroke="#777" stroke-width="1.1"/><path d="M1.5 8h14M2.5 4.5h12M2.5 11.5h12M8.5 1v14M5 2c-2 4-2 8 0 12M12 2c2 4 2 8 0 12" stroke="#777" stroke-width=".8" fill="none"/></svg>
<div class="t" style="left:1813.00px;top:1058.54px;font-size:10.00px;color:#111;letter-spacing:-0.293px;">USER:100027</div>
<svg class="s" style="left:1893px;top:1055px" width="18" height="17" viewBox="0 0 18 17"><ellipse cx="9" cy="7.5" rx="8" ry="6.5" fill="#6b6b6b"/><path d="M10 12l6 4-2-5z" fill="#6b6b6b"/><circle cx="5.5" cy="7.5" r="1.3" fill="#fff"/><circle cx="9" cy="7.5" r="1.3" fill="#fff"/><circle cx="12.5" cy="7.5" r="1.3" fill="#fff"/></svg>
<div class="r" style="left:94px;top:671px;width:223px;height:263px;background:#fff;border:1px solid #a5a19b;box-sizing:border-box"></div>
<div class="r" style="left:95px;top:815px;width:221px;height:23px;background:#308cc6;"></div>
<svg class="s" style="left:102px;top:676px" width="14" height="14" viewBox="0 0 14 14"><rect x=".5" y=".5" width="13" height="13" fill="#fff" stroke="#aaa69f"/></svg>
<div class="t" style="left:122.00px;top:677.42px;font-size:12.50px;color:#000;letter-spacing:0.374px;">Show Feature Count</div>
<div class="t" style="left:122.00px;top:700.42px;font-size:12.50px;color:#000;letter-spacing:0.342px;">Copy Layer</div>
<div class="t" style="left:122.00px;top:723.42px;font-size:12.50px;color:#000;letter-spacing:0.456px;">Rename Layer</div>
<div class="r" style="left:138.9px;top:735px;width:7.0px;height:1px;background:#000;"></div>
<div class="t" style="left:122.00px;top:748.42px;font-size:12.50px;color:#000;letter-spacing:0.516px;">Edit Virtual Layer...</div>
<div class="t" style="left:122.00px;top:773.42px;font-size:12.50px;color:#000;letter-spacing:0.511px;">Duplicate Layer</div>
<div class="r" style="left:122.0px;top:785px;width:9.0px;height:1px;background:#000;"></div>
<div class="t" style="left:122.00px;top:796.42px;font-size:12.50px;color:#000;letter-spacing:0.428px;">Remove Layer...</div>
<div class="r" style="left:122.0px;top:808px;width:9.0px;height:1px;background:#000;"></div>
<div class="t" style="left:122.00px;top:821.42px;font-size:12.50px;color:#fff;letter-spacing:0.630px;">Open Attribute Table</div>
<div class="r" style="left:122.0px;top:833px;width:9.7px;height:1px;background:#fff;"></div>
<div class="t" style="left:122.00px;top:844.42px;font-size:12.50px;color:#000;letter-spacing:0.562px;">Filter...</div>
<div class="r" style="left:122.0px;top:856px;width:7.6px;height:1px;background:#000;"></div>
<div class="t" style="left:122.00px;top:869.42px;font-size:12.50px;color:#000;letter-spacing:0.575px;">Export</div>
<div class="t" style="left:122.00px;top:894.42px;font-size:12.50px;color:#000;letter-spacing:0.392px;">Styles</div>
<div class="t" style="left:122.00px;top:917.42px;font-size:12.50px;color:#000;letter-spacing:0.385px;">Properties...</div>
<div class="r" style="left:122.0px;top:929px;width:8.3px;height:1px;background:#000;"></div>
<div class="r" style="left:99px;top:740px;width:213px;height:1px;background:#d4d0ca;"></div>
<div class="r" style="left:99px;top:765px;width:213px;height:1px;background:#d4d0ca;"></div>
<div class="r" style="left:99px;top:813px;width:213px;height:1px;background:#d4d0ca;"></div>
<div class="r" style="left:99px;top:861px;width:213px;height:1px;background:#d4d0ca;"></div>
<div class="r" style="left:99px;top:886px;width:213px;height:1px;background:#d4d0ca;"></div>
<svg class="s" style="left:102px;top:746px" width="14" height="14" viewBox="0 0 14 14"><rect x=".5" y=".5" width="12" height="12" rx="1" fill="#b8cfe8" stroke="#7d9ab8"/><path d="M3 3l3 7 3-7" fill="none" stroke="#555" stroke-width=".8"/><circle cx="10.5" cy="10.5" r="3" fill="#4f9a55"/><path d="M10.5 8.8v3.4M8.8 10.5h3.4" stroke="#fff" stroke-width="1"/></svg>
<svg class="s" style="left:102px;top:771px" width="14" height="14" viewBox="0 0 14 14"><rect x=".5" y="2.5" width="10" height="10" fill="#d8d8d8" stroke="#666"/><rect x="2.5" y=".5" width="10" height="10" fill="#f2f2f2" stroke="#888"/><rect x="8" y="8" width="5" height="5" fill="#f5d03e" stroke="#c9a82c" stroke-width=".6"/></svg>
<svg class="s" style="left:102px;top:795px" width="14" height="14" viewBox="0 0 14 14"><rect x=".5" y=".5" width="11" height="11" fill="#eee" stroke="#888"/><rect x="8" y="9" width="6" height="4.5" rx="1.5" fill="#e33"/><rect x="9.5" y="10.8" width="3" height="1" fill="#fff"/></svg>
<svg class="s" style="left:102px;top:819px" width="14" height="14" viewBox="0 0 14 14"><rect x=".5" y=".5" width="13" height="13" fill="#d0e0f3" stroke="#a8c4e6"/><path d="M1 4h12M1 7h12M1 10h12M4 1v12" stroke="#fff" stroke-width="1"/></svg>
<svg class="s" style="left:305px;top:870px" width="8" height="10" viewBox="0 0 8 10"><path d="M1 0.5l6 4.5-6 4.5z" fill="#333"/></svg>
<svg class="s" style="left:305px;top:895px" width="8" height="10" viewBox="0 0 8 10"><path d="M1 0.5l6 4.5-6 4.5z" fill="#333"/></svg>
</body></html>
